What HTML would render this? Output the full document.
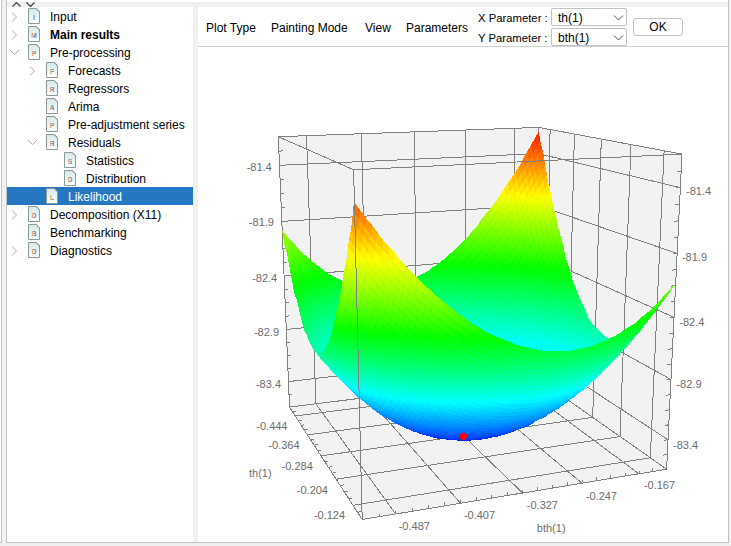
<!DOCTYPE html>
<html><head><meta charset="utf-8"><style>
*{margin:0;padding:0;box-sizing:border-box}
html,body{width:731px;height:546px;overflow:hidden;background:#f0f0f0;font-family:"Liberation Sans",sans-serif;font-size:12px;color:#000}
.abs{position:absolute}
#main{position:absolute;left:6px;top:0;width:723px;height:543px;background:#fff;border-left:1px solid #c4c4c4;border-right:1px solid #c4c4c4;border-bottom:1px solid #c4c4c4}
#lline{position:absolute;left:0;top:0;width:2px;height:543px;background:#fff;border-right:1px solid #c4c4c4;border-bottom:1px solid #c4c4c4}
#topband{position:absolute;left:7px;top:2px;width:721px;height:5px;background:#f0f0f0}
#sep{position:absolute;left:193px;top:7px;width:5px;height:535px;background:#f0f0f0}
.sel{position:absolute;left:7px;width:186px;height:18px;background:#2677c1}
.chev,.ico{position:absolute}
.t{position:absolute;height:18px;line-height:18px;padding-top:1px;white-space:nowrap;font-size:12px}
.b{font-weight:bold}
.w{color:#fff}
#tb{position:absolute;left:198px;top:7px;width:530px;height:40px;border-bottom:1px solid #d2d2d2;background:#fff}
.mi{position:absolute;top:19px;line-height:18px;white-space:nowrap}
.lab{position:absolute;white-space:nowrap;font-size:11.3px}
.combo{position:absolute;left:551px;width:76px;height:18px;border:1px solid #c2c2c2;border-radius:2px;background:#fff}
.combo span{position:absolute;left:6px;top:1px;line-height:17px}
.btn{position:absolute;left:633px;top:18px;width:50px;height:18px;border:1px solid #c2c2c2;border-radius:3px;background:#fff;text-align:center;line-height:16px}
</style></head><body>
<div id="lline"></div>
<div id="main"></div>
<div id="topband"></div>
<svg class="abs" style="left:0;top:0" width="40" height="8"><path d="M12.5 6.5L16.5 2.5L20.5 6.5M26.5 2.5L30.5 6.5L34.5 2.5" stroke="#404040" stroke-width="1.2" fill="none"/></svg>
<svg width="0" height="0" style="position:absolute"><defs>
<linearGradient id="dg" x1="0" y1="0" x2="0" y2="1"><stop offset="0" stop-color="#d6e8e8"/><stop offset="1" stop-color="#fcfefe"/></linearGradient>
<linearGradient id="lg" x1="0" y1="0" x2="1" y2="0"><stop offset="0" stop-color="#e8905a"/><stop offset=".42" stop-color="#e8905a"/><stop offset=".58" stop-color="#4f86c8"/><stop offset="1" stop-color="#5a70b8"/></linearGradient>
</defs></svg>
<svg class="chev" style="left:10px;top:11px" width="10" height="12"><path d="M2 1.5L6.5 6L2 10.5" stroke="#ababab" stroke-width="1" fill="none"/></svg>
<svg class="ico" style="left:28px;top:8px" width="12" height="16"><path d="M0.5 0.5H8.5L11.5 3.5V15.5H0.5Z" fill="url(#dg)" stroke="#8a9999"/><path d="M8 0.5L11.5 4" stroke="#8a9999" fill="none"/><text x="6" y="12" font-size="6.5" text-anchor="middle" fill="url(#lg)" font-weight="bold" font-family="Liberation Sans">I</text></svg>
<div class="t" style="left:50px;top:7px">Input</div>
<svg class="chev" style="left:10px;top:29px" width="10" height="12"><path d="M2 1.5L6.5 6L2 10.5" stroke="#ababab" stroke-width="1" fill="none"/></svg>
<svg class="ico" style="left:28px;top:26px" width="12" height="16"><path d="M0.5 0.5H8.5L11.5 3.5V15.5H0.5Z" fill="url(#dg)" stroke="#8a9999"/><path d="M8 0.5L11.5 4" stroke="#8a9999" fill="none"/><text x="6" y="12" font-size="6.5" text-anchor="middle" fill="url(#lg)" font-weight="bold" font-family="Liberation Sans">M</text></svg>
<div class="t b" style="left:50px;top:25px">Main results</div>
<svg class="chev" style="left:9px;top:48px" width="12" height="10"><path d="M1 2L5.5 6.5L10 2" stroke="#ababab" stroke-width="1" fill="none"/></svg>
<svg class="ico" style="left:28px;top:44px" width="12" height="16"><path d="M0.5 0.5H8.5L11.5 3.5V15.5H0.5Z" fill="url(#dg)" stroke="#8a9999"/><path d="M8 0.5L11.5 4" stroke="#8a9999" fill="none"/><text x="6" y="12" font-size="6.5" text-anchor="middle" fill="url(#lg)" font-weight="bold" font-family="Liberation Sans">P</text></svg>
<div class="t" style="left:50px;top:43px">Pre-processing</div>
<svg class="chev" style="left:28px;top:65px" width="10" height="12"><path d="M2 1.5L6.5 6L2 10.5" stroke="#ababab" stroke-width="1" fill="none"/></svg>
<svg class="ico" style="left:46px;top:62px" width="12" height="16"><path d="M0.5 0.5H8.5L11.5 3.5V15.5H0.5Z" fill="url(#dg)" stroke="#8a9999"/><path d="M8 0.5L11.5 4" stroke="#8a9999" fill="none"/><text x="6" y="12" font-size="6.5" text-anchor="middle" fill="url(#lg)" font-weight="bold" font-family="Liberation Sans">F</text></svg>
<div class="t" style="left:68px;top:61px">Forecasts</div>
<svg class="ico" style="left:46px;top:80px" width="12" height="16"><path d="M0.5 0.5H8.5L11.5 3.5V15.5H0.5Z" fill="url(#dg)" stroke="#8a9999"/><path d="M8 0.5L11.5 4" stroke="#8a9999" fill="none"/><text x="6" y="12" font-size="6.5" text-anchor="middle" fill="url(#lg)" font-weight="bold" font-family="Liberation Sans">R</text></svg>
<div class="t" style="left:68px;top:79px">Regressors</div>
<svg class="ico" style="left:46px;top:98px" width="12" height="16"><path d="M0.5 0.5H8.5L11.5 3.5V15.5H0.5Z" fill="url(#dg)" stroke="#8a9999"/><path d="M8 0.5L11.5 4" stroke="#8a9999" fill="none"/><text x="6" y="12" font-size="6.5" text-anchor="middle" fill="url(#lg)" font-weight="bold" font-family="Liberation Sans">A</text></svg>
<div class="t" style="left:68px;top:97px">Arima</div>
<svg class="ico" style="left:46px;top:116px" width="12" height="16"><path d="M0.5 0.5H8.5L11.5 3.5V15.5H0.5Z" fill="url(#dg)" stroke="#8a9999"/><path d="M8 0.5L11.5 4" stroke="#8a9999" fill="none"/><text x="6" y="12" font-size="6.5" text-anchor="middle" fill="url(#lg)" font-weight="bold" font-family="Liberation Sans">P</text></svg>
<div class="t" style="left:68px;top:115px">Pre-adjustment series</div>
<svg class="chev" style="left:27px;top:138px" width="12" height="10"><path d="M1 2L5.5 6.5L10 2" stroke="#ababab" stroke-width="1" fill="none"/></svg>
<svg class="ico" style="left:46px;top:134px" width="12" height="16"><path d="M0.5 0.5H8.5L11.5 3.5V15.5H0.5Z" fill="url(#dg)" stroke="#8a9999"/><path d="M8 0.5L11.5 4" stroke="#8a9999" fill="none"/><text x="6" y="12" font-size="6.5" text-anchor="middle" fill="url(#lg)" font-weight="bold" font-family="Liberation Sans">R</text></svg>
<div class="t" style="left:68px;top:133px">Residuals</div>
<svg class="ico" style="left:64px;top:152px" width="12" height="16"><path d="M0.5 0.5H8.5L11.5 3.5V15.5H0.5Z" fill="url(#dg)" stroke="#8a9999"/><path d="M8 0.5L11.5 4" stroke="#8a9999" fill="none"/><text x="6" y="12" font-size="6.5" text-anchor="middle" fill="url(#lg)" font-weight="bold" font-family="Liberation Sans">S</text></svg>
<div class="t" style="left:86px;top:151px">Statistics</div>
<svg class="ico" style="left:64px;top:170px" width="12" height="16"><path d="M0.5 0.5H8.5L11.5 3.5V15.5H0.5Z" fill="url(#dg)" stroke="#8a9999"/><path d="M8 0.5L11.5 4" stroke="#8a9999" fill="none"/><text x="6" y="12" font-size="6.5" text-anchor="middle" fill="url(#lg)" font-weight="bold" font-family="Liberation Sans">D</text></svg>
<div class="t" style="left:86px;top:169px">Distribution</div>
<div class="sel" style="top:187px"></div>
<svg class="ico" style="left:46px;top:188px" width="12" height="16"><path d="M0.5 0.5H8.5L11.5 3.5V15.5H0.5Z" fill="url(#dg)" stroke="#8a9999"/><path d="M8 0.5L11.5 4" stroke="#8a9999" fill="none"/><text x="6" y="12" font-size="6.5" text-anchor="middle" fill="url(#lg)" font-weight="bold" font-family="Liberation Sans">L</text></svg>
<div class="t w" style="left:68px;top:187px">Likelihood</div>
<svg class="chev" style="left:10px;top:209px" width="10" height="12"><path d="M2 1.5L6.5 6L2 10.5" stroke="#ababab" stroke-width="1" fill="none"/></svg>
<svg class="ico" style="left:28px;top:206px" width="12" height="16"><path d="M0.5 0.5H8.5L11.5 3.5V15.5H0.5Z" fill="url(#dg)" stroke="#8a9999"/><path d="M8 0.5L11.5 4" stroke="#8a9999" fill="none"/><text x="6" y="12" font-size="6.5" text-anchor="middle" fill="url(#lg)" font-weight="bold" font-family="Liberation Sans">D</text></svg>
<div class="t" style="left:50px;top:205px">Decomposition (X11)</div>
<svg class="ico" style="left:28px;top:224px" width="12" height="16"><path d="M0.5 0.5H8.5L11.5 3.5V15.5H0.5Z" fill="url(#dg)" stroke="#8a9999"/><path d="M8 0.5L11.5 4" stroke="#8a9999" fill="none"/><text x="6" y="12" font-size="6.5" text-anchor="middle" fill="url(#lg)" font-weight="bold" font-family="Liberation Sans">B</text></svg>
<div class="t" style="left:50px;top:223px">Benchmarking</div>
<svg class="chev" style="left:10px;top:245px" width="10" height="12"><path d="M2 1.5L6.5 6L2 10.5" stroke="#ababab" stroke-width="1" fill="none"/></svg>
<svg class="ico" style="left:28px;top:242px" width="12" height="16"><path d="M0.5 0.5H8.5L11.5 3.5V15.5H0.5Z" fill="url(#dg)" stroke="#8a9999"/><path d="M8 0.5L11.5 4" stroke="#8a9999" fill="none"/><text x="6" y="12" font-size="6.5" text-anchor="middle" fill="url(#lg)" font-weight="bold" font-family="Liberation Sans">D</text></svg>
<div class="t" style="left:50px;top:241px">Diagnostics</div>
<div id="sep"></div>
<div id="tb"></div>
<div class="mi" style="left:206px">Plot Type</div>
<div class="mi" style="left:271px">Painting Mode</div>
<div class="mi" style="left:365px">View</div>
<div class="mi" style="left:406px">Parameters</div>
<div class="lab" style="left:478px;top:9px;line-height:18px">X Parameter :</div>
<div class="lab" style="left:478px;top:29px;line-height:18px">Y Parameter :</div>
<div class="combo" style="top:8px"><span>th(1)</span><svg class="abs" style="left:61px;top:5px" width="12" height="8"><path d="M1 1.5L5.5 6L10 1.5" stroke="#555" stroke-width="1" fill="none"/></svg></div>
<div class="combo" style="top:28px"><span>bth(1)</span><svg class="abs" style="left:61px;top:5px" width="12" height="8"><path d="M1 1.5L5.5 6L10 1.5" stroke="#555" stroke-width="1" fill="none"/></svg></div>
<div class="btn">OK</div>
<svg class="abs" style="left:0;top:0" width="731" height="546" viewBox="0 0 731 546">
<g shape-rendering="crispEdges">
<path d="M289.5 407.1L534.6 376.6L538.8 127.4L278.3 136.7Z" fill="#f2f2f2"/>
<path d="M534.6 376.6L666.6 469.2L682 154.1L538.8 127.4Z" fill="#f2f2f2"/>
<path d="M289.5 407.1L534.6 376.6L666.6 469.2L362.2 519.5Z" fill="#f2f2f2"/>
</g>
<path d="M288.4 381.6L535 353M535 353L668 439.7M315.9 403.8L306.5 135.7M315.9 403.8L395.7 514M545.2 384.1L550.1 129.5M295.2 416L545.2 384.1M286.3 329.5L535.8 304.8M535.8 304.8L671 379.5M367.4 397.4L361.4 133.7M367.4 397.4L460.6 503.3M567.9 400L574.4 134M307.5 434.9L567.9 400M284.1 276.1L536.6 255.6M536.6 255.6L674 317.4M417.2 391.2L414.3 131.8M417.2 391.2L522.6 493M592.7 417.4L601.3 139M321.1 455.9L592.7 417.4M281.8 221.4L537.5 205.2M537.5 205.2L677.2 253.5M465.3 385.3L465.4 130M465.3 385.3L582 483.2M620 436.6L631 144.6M336.2 479.2L620 436.6M279.5 165.3L538.3 153.6M538.3 153.6L680.4 187.7M511.9 379.5L514.7 128.2M511.9 379.5L639 473.8M650.3 457.8L664.1 150.7M353 505.3L650.3 457.8M289.5 407.1L278.3 136.7M278.3 136.7L538.8 127.4M538.8 127.4L682 154.1M682 154.1L666.6 469.2M289.5 407.1L534.6 376.6M534.6 376.6L666.6 469.2M534.6 376.6L538.8 127.4M289.5 407.1L362.2 519.5M362.2 519.5L666.6 469.2M289 394.4L292.4 394M667.3 454.5L663.2 455.2M292.3 411.5L295.5 411.1M379.1 516.7L379 513.2M288.4 381.6L291.9 381.2M668 439.7L663.9 440.4M295.2 416L298.5 415.5M395.7 514L395.7 510.5M287.9 368.7L291.4 368.3M668.8 424.8L664.6 425.5M298.2 420.5L301.5 420.1M412.2 511.2L412.2 507.7M287.4 355.7L290.9 355.3M669.5 409.8L665.4 410.4M301.2 425.2L304.5 424.8M428.5 508.6L428.5 505.1M286.8 342.6L290.3 342.3M670.3 394.7L666.1 395.3M304.3 430L307.7 429.6M444.6 505.9L444.6 502.4M286.3 329.5L289.8 329.1M671 379.5L666.8 380M307.5 434.9L310.9 434.5M460.6 503.3L460.6 499.8M285.7 316.3L289.3 315.9M671.8 364.1L667.5 364.7M310.8 440L314.2 439.5M476.3 500.7L476.3 497.2M285.2 303L288.7 302.7M672.5 348.7L668.3 349.2M314.1 445.2L317.6 444.7M491.9 498.1L491.9 494.7M284.6 289.6L288.2 289.3M673.3 333.1L669 333.6M317.5 450.5L321.1 450M507.3 495.5L507.4 492.1M284.1 276.1L287.6 275.8M674 317.4L669.8 317.9M321.1 455.9L324.6 455.4M522.6 493L522.6 489.6M283.5 262.6L287.1 262.3M674.8 301.6L670.6 302.1M324.7 461.5L328.3 461M537.7 490.5L537.7 487.2M282.9 248.9L286.5 248.7M675.6 285.7L671.3 286.1M328.4 467.3L332.1 466.7M552.6 488.1L552.7 484.7M282.4 235.2L286 235M676.4 269.7L672.1 270.1M332.2 473.2L335.9 472.6M567.4 485.6L567.5 482.3M281.8 221.4L285.4 221.2M677.2 253.5L672.9 253.9M336.2 479.2L339.9 478.7M582 483.2L582.1 479.9M281.2 207.5L284.9 207.3M678 237.3L673.7 237.6M340.2 485.5L344 484.9M596.5 480.8L596.6 477.5M280.7 193.5L284.3 193.3M678.8 220.9L674.4 221.2M344.4 491.9L348.2 491.3M610.8 478.5L610.9 475.2M280.1 179.5L283.7 179.3M679.6 204.4L675.2 204.7M348.6 498.5L352.5 497.9M625 476.1L625.1 472.9M279.5 165.3L283.2 165.1M680.4 187.7L676 188M353 505.3L357 504.7M639 473.8L639.1 470.6M278.9 151.1L282.6 150.9M681.2 171L676.8 171.2M357.6 512.3L361.6 511.6M652.9 471.5L653 468.3" stroke="#808080" stroke-width="1" fill="none" shape-rendering="crispEdges"/>
<g shape-rendering="crispEdges"><path d="M535 138l4-7 1 9-4 7z" fill="#ff2c00"/><path d="M531 145l4-7 1 9-3 7z" fill="#ff4600"/><path d="M527 152l4-7 2 9-4 6z" fill="#ff6000"/><path d="M536 147l4-7 2 8-4 7z" fill="#ff4b00"/><path d="M523 159l4-7 2 8-4 7z" fill="#ff7900"/><path d="M533 154l3-7 2 8-4 7z" fill="#ff6500"/><path d="M520 165l3-6 2 8-4 6z" fill="#ff9100"/><path d="M529 160l4-6 1 8-4 7z" fill="#ff7f00"/><path d="M516 171l4-6 1 8-4 7z" fill="#ffa900"/><path d="M538 155l4-7 2 9-4 7z" fill="#ff6a00"/><path d="M512 177l4-6 1 9-4 6z" fill="#ffc000"/><path d="M525 167l4-7 1 9-3 6z" fill="#ff9700"/><path d="M508 183l4-6 1 9-3 6z" fill="#ffd600"/><path d="M534 162l4-7 2 9-4 7z" fill="#ff8400"/><path d="M521 173l4-6 2 8-4 7z" fill="#ffb000"/><path d="M504 189l4-6 2 9-4 5z" fill="#ffec00"/><path d="M517 180l4-7 2 9-4 6z" fill="#ffc700"/><path d="M530 169l4-7 2 9-4 6z" fill="#ff9d00"/><path d="M500 195l4-6 2 8-4 6z" fill="#fdff00"/><path d="M513 186l4-6 2 8-4 6z" fill="#ffde00"/><path d="M527 175l3-6 2 8-4 7z" fill="#ffb600"/><path d="M540 164l4-7 1 8-4 7z" fill="#ff8900"/><path d="M497 200l3-5 2 8-4 5z" fill="#e9ff00"/><path d="M510 192l3-6 2 8-4 6z" fill="#fff400"/><path d="M523 182l4-7 1 9-4 6z" fill="#ffce00"/><path d="M536 171l4-7 1 8-4 7z" fill="#ffa300"/><path d="M493 205l4-5 1 8-4 5z" fill="#d5ff00"/><path d="M506 197l4-5 1 8-4 5z" fill="#f5ff00"/><path d="M519 188l4-6 1 8-4 6z" fill="#ffe500"/><path d="M532 177l4-6 1 8-3 7z" fill="#ffbc00"/><path d="M489 210l4-5 1 8-3 5z" fill="#c2ff00"/><path d="M502 203l4-6 1 8-3 6z" fill="#e0ff00"/><path d="M515 194l4-6 1 8-3 6z" fill="#fffc00"/><path d="M528 184l4-7 2 9-4 6z" fill="#ffd400"/><path d="M541 172l4-7 2 9-4 6z" fill="#ffa700"/><path d="M485 215l4-5 2 8-4 5z" fill="#afff00"/><path d="M498 208l4-5 2 8-4 5z" fill="#cbff00"/><path d="M511 200l4-6 2 8-4 6z" fill="#ecff00"/><path d="M524 190l4-6 2 8-4 6z" fill="#ffeb00"/><path d="M481 220l4-5 2 8-4 5z" fill="#9dff00"/><path d="M537 179l4-7 2 8-4 7z" fill="#ffc000"/><path d="M494 213l4-5 2 8-4 5z" fill="#b8ff00"/><path d="M507 205l4-5 2 8-4 5z" fill="#d7ff00"/><path d="M478 225l3-5 2 8-4 5z" fill="#8cff00"/><path d="M520 196l4-6 2 8-4 6z" fill="#fbff00"/><path d="M534 186l3-7 2 8-4 7z" fill="#ffd900"/><path d="M491 218l3-5 2 8-4 5z" fill="#a5ff00"/><path d="M504 211l3-6 2 8-4 6z" fill="#c2ff00"/><path d="M474 229l4-4 1 8-4 4z" fill="#7bff00"/><path d="M517 202l3-6 2 8-4 6z" fill="#e5ff00"/><path d="M487 223l4-5 1 8-4 5z" fill="#92ff00"/><path d="M530 192l4-6 1 8-4 6z" fill="#fff100"/><path d="M543 180l4-6 1 8-3 7z" fill="#ffc400"/><path d="M500 216l4-5 1 8-4 5z" fill="#aeff00"/><path d="M470 234l4-5 1 8-4 5z" fill="#6bff00"/><path d="M513 208l4-6 1 8-4 6z" fill="#cfff00"/><path d="M483 228l4-5 1 8-4 5z" fill="#80ff00"/><path d="M526 198l4-6 1 8-4 6z" fill="#f5ff00"/><path d="M496 221l4-5 1 8-4 5z" fill="#9bff00"/><path d="M539 187l4-7 2 9-4 6z" fill="#ffde00"/><path d="M466 238l4-4 1 8-3 4z" fill="#5bff00"/><path d="M509 213l4-5 1 8-4 5z" fill="#baff00"/><path d="M479 233l4-5 1 8-3 5z" fill="#6fff00"/><path d="M522 204l4-6 1 8-3 6z" fill="#deff00"/><path d="M492 226l4-5 1 8-3 5z" fill="#88ff00"/><path d="M535 194l4-7 2 8-4 7z" fill="#fff600"/><path d="M462 242l4-4 2 8-4 4z" fill="#4cff00"/><path d="M505 219l4-6 1 8-3 6z" fill="#a6ff00"/><path d="M475 237l4-4 2 8-4 4z" fill="#5fff00"/><path d="M518 210l4-6 2 8-4 6z" fill="#c8ff00"/><path d="M488 231l4-5 2 8-4 5z" fill="#76ff00"/><path d="M458 246l4-4 2 8-4 3z" fill="#3eff00"/><path d="M531 200l4-6 2 8-4 6z" fill="#f0ff00"/><path d="M501 224l4-5 2 8-4 5z" fill="#92ff00"/><path d="M471 242l4-5 2 8-4 4z" fill="#4fff00"/><path d="M545 189l3-7 2 8-4 6z" fill="#ffe100"/><path d="M514 216l4-6 2 8-4 6z" fill="#b3ff00"/><path d="M484 236l4-5 2 8-4 5z" fill="#64ff00"/><path d="M455 249l3-3 2 7-4 4z" fill="#30ff00"/><path d="M527 206l4-6 2 8-4 6z" fill="#d9ff00"/><path d="M497 229l4-5 2 8-4 5z" fill="#7fff00"/><path d="M468 246l3-4 2 7-4 4z" fill="#40ff00"/><path d="M541 195l4-6 1 7-4 7z" fill="#fffa00"/><path d="M510 221l4-5 2 8-4 5z" fill="#9eff00"/><path d="M481 241l3-5 2 8-4 4z" fill="#53ff00"/><path d="M451 253l4-4 1 8-4 4z" fill="#24ff00"/><path d="M524 212l3-6 2 8-4 6z" fill="#c2ff00"/><path d="M494 234l3-5 2 8-4 5z" fill="#6cff00"/><path d="M464 250l4-4 1 7-4 4z" fill="#31ff00"/><path d="M537 202l4-7 1 8-4 7z" fill="#ebff00"/><path d="M507 227l3-6 2 8-4 6z" fill="#89ff00"/><path d="M477 245l4-4 1 7-4 5z" fill="#43ff00"/><path d="M447 256l4-3 1 8-4 3z" fill="#17ff00"/><path d="M490 239l4-5 1 8-4 5z" fill="#5aff00"/><path d="M520 218l4-6 1 8-4 6z" fill="#acff00"/><path d="M460 253l4-3 1 7-4 4z" fill="#23ff00"/><path d="M533 208l4-6 1 8-3 6z" fill="#d4ff00"/><path d="M503 232l4-5 1 8-4 5z" fill="#76ff00"/><path d="M473 249l4-4 1 8-4 4z" fill="#34ff00"/><path d="M546 196l4-6 2 8-4 6z" fill="#fffd00"/><path d="M486 244l4-5 1 8-4 5z" fill="#49ff00"/><path d="M516 224l4-6 1 8-4 6z" fill="#97ff00"/><path d="M443 260l4-4 1 8-3 3z" fill="#0cff00"/><path d="M456 257l4-4 1 8-3 4z" fill="#16ff00"/><path d="M499 237l4-5 1 8-3 5z" fill="#63ff00"/><path d="M469 253l4-4 1 8-3 4z" fill="#24ff00"/><path d="M529 214l4-6 2 8-4 6z" fill="#bcff00"/><path d="M482 248l4-4 1 8-3 4z" fill="#38ff00"/><path d="M542 203l4-7 2 8-4 7z" fill="#e8ff00"/><path d="M512 229l4-5 1 8-3 5z" fill="#82ff00"/><path d="M439 263l4-3 2 7-4 3z" fill="#01ff00"/><path d="M452 261l4-4 2 8-4 3z" fill="#09ff00"/><path d="M495 242l4-5 2 8-4 5z" fill="#50ff00"/><path d="M465 257l4-4 2 8-4 4z" fill="#16ff00"/><path d="M525 220l4-6 2 8-4 6z" fill="#a6ff00"/><path d="M478 253l4-5 2 8-4 4z" fill="#28ff00"/><path d="M508 235l4-6 2 8-4 6z" fill="#6eff00"/><path d="M538 210l4-7 2 8-4 6z" fill="#cfff00"/><path d="M435 266l4-3 2 7-4 3z" fill="#00ff0a"/><path d="M448 264l4-3 2 7-4 3z" fill="#00ff03"/><path d="M491 247l4-5 2 8-4 5z" fill="#3fff00"/><path d="M521 226l4-6 2 8-4 6z" fill="#90ff00"/><path d="M461 261l4-4 2 8-4 4z" fill="#08ff00"/><path d="M474 257l4-4 2 7-4 5z" fill="#19ff00"/><path d="M504 240l4-5 2 8-4 5z" fill="#5aff00"/><path d="M535 216l3-6 2 7-4 7z" fill="#b8ff00"/><path d="M487 252l4-5 2 8-4 4z" fill="#2eff00"/><path d="M445 267l3-3 2 7-4 3z" fill="#00ff0e"/><path d="M431 268l4-2 2 7-4 3z" fill="#00ff13"/><path d="M517 232l4-6 2 8-4 5z" fill="#7bff00"/><path d="M458 265l3-4 2 8-4 3z" fill="#00ff05"/><path d="M548 204l4-6 1 7-4 7z" fill="#e5ff00"/><path d="M471 261l3-4 2 8-4 4z" fill="#0aff00"/><path d="M501 245l3-5 2 8-4 5z" fill="#48ff00"/><path d="M531 222l4-6 1 8-4 6z" fill="#a1ff00"/><path d="M484 256l3-4 2 7-4 5z" fill="#1dff00"/><path d="M514 237l3-5 2 7-4 6z" fill="#67ff00"/><path d="M441 270l4-3 1 7-4 3z" fill="#00ff19"/><path d="M428 271l3-3 2 8-4 2z" fill="#00ff1c"/><path d="M454 268l4-3 1 7-4 4z" fill="#00ff11"/><path d="M544 211l4-7 1 8-3 7z" fill="#ccff00"/><path d="M497 250l4-5 1 8-4 5z" fill="#35ff00"/><path d="M467 265l4-4 1 8-4 3z" fill="#00ff04"/><path d="M527 228l4-6 1 8-4 6z" fill="#8bff00"/><path d="M480 260l4-4 1 8-4 4z" fill="#0dff00"/><path d="M510 243l4-6 1 8-4 5z" fill="#53ff00"/><path d="M437 273l4-3 1 7-4 3z" fill="#00ff23"/><path d="M450 271l4-3 1 8-4 3z" fill="#00ff1d"/><path d="M540 217l4-6 2 8-4 6z" fill="#b4ff00"/><path d="M493 255l4-5 1 8-4 4z" fill="#24ff00"/><path d="M424 273l4-2 1 7-4 2z" fill="#00ff25"/><path d="M463 269l4-4 1 7-4 4z" fill="#00ff12"/><path d="M523 234l4-6 1 8-3 5z" fill="#75ff00"/><path d="M476 265l4-5 1 8-4 4z" fill="#00ff02"/><path d="M506 248l4-5 1 7-4 5z" fill="#3fff00"/><path d="M489 259l4-4 1 7-3 5z" fill="#13ff00"/><path d="M536 224l4-7 2 8-4 6z" fill="#9dff00"/><path d="M446 274l4-3 1 8-4 3z" fill="#00ff28"/><path d="M433 276l4-3 1 7-4 3z" fill="#00ff2d"/><path d="M459 272l4-3 1 7-4 4z" fill="#00ff1f"/><path d="M519 239l4-5 2 7-4 6z" fill="#60ff00"/><path d="M420 275l4-2 1 7-4 3z" fill="#00ff2c"/><path d="M472 269l4-4 1 7-3 4z" fill="#00ff10"/><path d="M502 253l4-5 1 7-3 5z" fill="#2dff00"/><path d="M549 212l4-7 2 8-4 7z" fill="#caff00"/><path d="M485 264l4-5 2 8-4 4z" fill="#03ff00"/><path d="M532 230l4-6 2 7-4 6z" fill="#86ff00"/><path d="M442 277l4-3 1 8-3 3z" fill="#00ff33"/><path d="M515 245l4-6 2 8-4 5z" fill="#4cff00"/><path d="M455 276l4-4 1 8-3 3z" fill="#00ff2b"/><path d="M429 278l4-2 1 7-4 2z" fill="#00ff35"/><path d="M498 258l4-5 2 7-4 5z" fill="#1bff00"/><path d="M468 272l4-3 2 7-4 4z" fill="#00ff1e"/><path d="M416 277l4-2 1 8-4 2z" fill="#00ff33"/><path d="M546 219l3-7 2 8-4 6z" fill="#b2ff00"/><path d="M481 268l4-4 2 7-4 4z" fill="#00ff0d"/><path d="M528 236l4-6 2 7-4 6z" fill="#70ff00"/><path d="M511 250l4-5 2 7-4 6z" fill="#38ff00"/><path d="M451 279l4-3 2 7-4 3z" fill="#00ff37"/><path d="M438 280l4-3 2 8-4 2z" fill="#00ff3c"/><path d="M494 262l4-4 2 7-4 5z" fill="#0aff00"/><path d="M464 276l4-4 2 8-4 3z" fill="#00ff2c"/><path d="M425 280l4-2 1 7-3 3z" fill="#00ff3d"/><path d="M542 225l4-6 1 7-4 6z" fill="#9aff00"/><path d="M477 272l4-4 2 7-4 4z" fill="#00ff1c"/><path d="M525 241l3-5 2 7-4 6z" fill="#5bff00"/><path d="M412 279l4-2 1 8-4 1z" fill="#00ff39"/><path d="M507 255l4-5 2 8-4 5z" fill="#25ff00"/><path d="M491 267l3-5 2 8-4 4z" fill="#00ff07"/><path d="M447 282l4-3 2 7-4 3z" fill="#00ff41"/><path d="M434 283l4-3 2 7-4 3z" fill="#00ff46"/><path d="M460 280l4-4 2 7-4 4z" fill="#00ff38"/><path d="M538 231l4-6 1 7-4 7z" fill="#82ff00"/><path d="M521 247l4-6 1 8-4 5z" fill="#46ff00"/><path d="M421 283l4-3 2 8-4 2z" fill="#00ff45"/><path d="M474 276l3-4 2 7-4 4z" fill="#00ff2a"/><path d="M504 260l3-5 2 8-4 5z" fill="#13ff00"/><path d="M487 271l4-4 1 7-4 5z" fill="#00ff17"/><path d="M408 281l4-2 1 7-4 2z" fill="#00ff3f"/><path d="M551 220l4-7 2 7-4 7z" fill="#b0ff00"/><path d="M444 285l3-3 2 7-4 3z" fill="#00ff4c"/><path d="M534 237l4-6 1 8-3 6z" fill="#6cff00"/><path d="M457 283l3-3 2 7-4 3z" fill="#00ff44"/><path d="M517 252l4-5 1 7-4 6z" fill="#32ff00"/><path d="M430 285l4-2 2 7-4 2z" fill="#00ff4e"/><path d="M470 280l4-4 1 7-4 4z" fill="#00ff38"/><path d="M500 265l4-5 1 8-4 4z" fill="#01ff00"/><path d="M417 285l4-2 2 7-4 2z" fill="#00ff4b"/><path d="M483 275l4-4 1 8-4 4z" fill="#00ff27"/><path d="M547 226l4-6 2 7-4 6z" fill="#98ff00"/><path d="M530 243l4-6 2 8-4 6z" fill="#56ff00"/><path d="M513 258l4-6 1 8-3 5z" fill="#1eff00"/><path d="M453 286l4-3 1 7-4 3z" fill="#00ff50"/><path d="M440 287l4-2 1 7-4 3z" fill="#00ff55"/><path d="M404 283l4-2 1 7-4 1z" fill="#00ff43"/><path d="M496 270l4-5 1 7-4 5z" fill="#00ff10"/><path d="M466 283l4-3 1 7-4 4z" fill="#00ff45"/><path d="M427 288l3-3 2 7-4 3z" fill="#00ff56"/><path d="M479 279l4-4 1 8-4 4z" fill="#00ff35"/><path d="M543 232l4-6 2 7-4 7z" fill="#80ff00"/><path d="M526 249l4-6 2 8-4 5z" fill="#41ff00"/><path d="M413 286l4-1 2 7-4 1z" fill="#00ff51"/><path d="M509 263l4-5 2 7-4 5z" fill="#0bff00"/><path d="M492 274l4-4 1 7-3 5z" fill="#00ff21"/><path d="M449 289l4-3 1 7-4 3z" fill="#00ff5a"/><path d="M462 287l4-4 1 8-4 3z" fill="#00ff51"/><path d="M436 290l4-3 1 8-4 2z" fill="#00ff5e"/><path d="M475 283l4-4 1 8-3 4z" fill="#00ff43"/><path d="M400 284l4-1 1 6-3 2z" fill="#00ff47"/><path d="M539 239l4-7 2 8-4 6z" fill="#69ff00"/><path d="M423 290l4-2 1 7-4 2z" fill="#00ff5d"/><path d="M522 254l4-5 2 7-4 6z" fill="#2cff00"/><path d="M505 268l4-5 2 7-4 5z" fill="#00ff07"/><path d="M488 279l4-5 2 8-4 4z" fill="#00ff30"/><path d="M409 288l4-2 2 7-4 2z" fill="#00ff57"/><path d="M445 292l4-3 1 7-4 3z" fill="#00ff64"/><path d="M458 290l4-3 1 7-3 3z" fill="#00ff5d"/><path d="M553 227l4-7 1 7-4 7z" fill="#97ff00"/><path d="M432 292l4-2 1 7-4 3z" fill="#00ff66"/><path d="M471 287l4-4 2 8-4 3z" fill="#00ff51"/><path d="M536 245l3-6 2 7-4 6z" fill="#52ff00"/><path d="M518 260l4-6 2 8-4 5z" fill="#18ff00"/><path d="M501 272l4-4 2 7-4 5z" fill="#00ff18"/><path d="M484 283l4-4 2 7-4 4z" fill="#00ff40"/><path d="M419 292l4-2 1 7-4 2z" fill="#00ff63"/><path d="M396 285l4-1 2 7-4 1z" fill="#00ff4b"/><path d="M454 293l4-3 2 7-4 3z" fill="#00ff68"/><path d="M515 265l3-5 2 7-4 5z" fill="#05ff00"/><path d="M532 251l4-6 1 7-4 6z" fill="#3dff00"/><path d="M549 233l4-6 1 7-3 7z" fill="#7eff00"/><path d="M441 295l4-3 1 7-3 3z" fill="#00ff6e"/><path d="M467 291l4-4 2 7-4 4z" fill="#00ff5e"/><path d="M497 277l4-5 2 8-4 4z" fill="#00ff29"/><path d="M405 289l4-1 2 7-4 1z" fill="#00ff5b"/><path d="M428 295l4-3 1 8-4 2z" fill="#00ff6e"/><path d="M480 287l4-4 2 7-4 4z" fill="#00ff4e"/><path d="M511 270l4-5 1 7-4 5z" fill="#00ff0e"/><path d="M528 256l4-5 1 7-4 5z" fill="#28ff00"/><path d="M415 293l4-1 1 7-4 1z" fill="#00ff69"/><path d="M545 240l4-7 2 8-4 6z" fill="#67ff00"/><path d="M494 282l3-5 2 7-4 5z" fill="#00ff39"/><path d="M450 296l4-3 2 7-4 3z" fill="#00ff73"/><path d="M463 294l4-3 2 7-4 3z" fill="#00ff6a"/><path d="M392 286l4-1 2 7-4 1z" fill="#00ff4d"/><path d="M437 297l4-2 2 7-4 2z" fill="#00ff76"/><path d="M477 291l3-4 2 7-4 4z" fill="#00ff5c"/><path d="M424 297l4-2 1 7-4 2z" fill="#00ff75"/><path d="M507 275l4-5 1 7-4 5z" fill="#00ff20"/><path d="M524 262l4-6 1 7-3 6z" fill="#13ff00"/><path d="M402 291l3-2 2 7-4 2z" fill="#00ff5f"/><path d="M541 246l4-6 2 7-4 6z" fill="#50ff00"/><path d="M490 286l4-4 1 7-4 4z" fill="#00ff49"/><path d="M460 297l3-3 2 7-4 3z" fill="#00ff75"/><path d="M446 299l4-3 2 7-4 3z" fill="#00ff7c"/><path d="M411 295l4-2 1 7-4 2z" fill="#00ff6e"/><path d="M473 294l4-3 1 7-4 3z" fill="#00ff69"/><path d="M433 300l4-3 2 7-4 3z" fill="#00ff7e"/><path d="M520 267l4-5 2 7-4 5z" fill="#00ff00"/><path d="M503 280l4-5 1 7-4 5z" fill="#00ff31"/><path d="M537 252l4-6 2 7-4 6z" fill="#3aff00"/><path d="M554 234l4-7 2 7-4 7z" fill="#7eff00"/><path d="M388 287l4-1 2 7-4 0z" fill="#00ff4f"/><path d="M486 290l4-4 1 7-4 4z" fill="#00ff58"/><path d="M420 299l4-2 1 7-4 2z" fill="#00ff7b"/><path d="M398 292l4-1 1 7-4 1z" fill="#00ff62"/><path d="M456 300l4-3 1 7-4 3z" fill="#00ff80"/><path d="M443 302l3-3 2 7-4 3z" fill="#00ff86"/><path d="M469 298l4-4 1 7-4 4z" fill="#00ff76"/><path d="M516 272l4-5 2 7-4 5z" fill="#00ff14"/><path d="M499 284l4-4 1 7-3 4z" fill="#00ff42"/><path d="M533 258l4-6 2 7-4 6z" fill="#24ff00"/><path d="M551 241l3-7 2 7-4 7z" fill="#66ff00"/><path d="M429 302l4-2 2 7-4 2z" fill="#00ff86"/><path d="M482 294l4-4 1 7-3 4z" fill="#00ff66"/><path d="M407 296l4-1 1 7-4 1z" fill="#00ff72"/><path d="M512 277l4-5 2 7-4 5z" fill="#00ff26"/><path d="M495 289l4-5 2 7-4 5z" fill="#00ff52"/><path d="M416 300l4-1 1 7-3 1z" fill="#00ff80"/><path d="M452 303l4-3 1 7-4 3z" fill="#00ff8b"/><path d="M529 263l4-5 2 7-4 5z" fill="#0fff00"/><path d="M465 301l4-3 1 7-4 3z" fill="#00ff82"/><path d="M384 287l4 0 2 6-4 1z" fill="#00ff50"/><path d="M547 247l4-6 1 7-4 6z" fill="#4eff00"/><path d="M439 304l4-2 1 7-4 2z" fill="#00ff8e"/><path d="M478 298l4-4 2 7-4 4z" fill="#00ff74"/><path d="M394 293l4-1 1 7-4 0z" fill="#00ff64"/><path d="M425 304l4-2 2 7-4 2z" fill="#00ff8c"/><path d="M508 282l4-5 2 7-4 5z" fill="#00ff38"/><path d="M526 269l3-6 2 7-4 6z" fill="#00ff05"/><path d="M491 293l4-4 2 7-4 4z" fill="#00ff61"/><path d="M403 298l4-2 1 7-4 1z" fill="#00ff76"/><path d="M543 253l4-6 1 7-4 6z" fill="#38ff00"/><path d="M461 304l4-3 1 7-3 3z" fill="#00ff8d"/><path d="M448 306l4-3 1 7-4 3z" fill="#00ff94"/><path d="M474 301l4-3 2 7-4 3z" fill="#00ff81"/><path d="M412 302l4-2 2 7-4 2z" fill="#00ff85"/><path d="M435 307l4-3 1 7-4 2z" fill="#00ff96"/><path d="M504 287l4-5 2 7-4 5z" fill="#00ff49"/><path d="M522 274l4-5 1 7-4 5z" fill="#00ff18"/><path d="M380 288l4-1 2 7-4 0z" fill="#00ff50"/><path d="M487 297l4-4 2 7-4 4z" fill="#00ff70"/><path d="M539 259l4-6 1 7-3 6z" fill="#22ff00"/><path d="M421 306l4-2 2 7-4 1z" fill="#00ff92"/><path d="M390 293l4 0 1 6-4 1z" fill="#00ff66"/><path d="M556 241l4-7 2 7-4 7z" fill="#66ff00"/><path d="M457 307l4-3 2 7-4 3z" fill="#00ff98"/><path d="M444 309l4-3 1 7-4 3z" fill="#00ff9d"/><path d="M470 305l4-4 2 7-4 4z" fill="#00ff8d"/><path d="M399 299l4-1 1 6-4 1z" fill="#00ff79"/><path d="M501 291l3-4 2 7-4 4z" fill="#00ff59"/><path d="M518 279l4-5 1 7-4 5z" fill="#00ff2b"/><path d="M535 265l4-6 2 7-4 6z" fill="#0cff00"/><path d="M484 301l3-4 2 7-4 4z" fill="#00ff7e"/><path d="M431 309l4-2 1 6-4 2z" fill="#00ff9d"/><path d="M408 303l4-1 2 7-4 1z" fill="#00ff89"/><path d="M552 248l4-7 2 7-4 6z" fill="#4eff00"/><path d="M514 284l4-5 1 7-4 5z" fill="#00ff3e"/><path d="M453 310l4-3 2 7-4 3z" fill="#00ffa2"/><path d="M497 296l4-5 1 7-4 5z" fill="#00ff69"/><path d="M466 308l4-3 2 7-4 3z" fill="#00ff99"/><path d="M418 307l3-1 2 6-4 2z" fill="#00ff97"/><path d="M531 270l4-5 2 7-4 5z" fill="#00ff08"/><path d="M376 288l4 0 2 6-4 0z" fill="#00ff50"/><path d="M440 311l4-2 1 7-4 2z" fill="#00ffa5"/><path d="M480 305l4-4 1 7-4 4z" fill="#00ff8b"/><path d="M386 294l4-1 1 7-4 1z" fill="#00ff67"/><path d="M548 254l4-6 2 6-4 7z" fill="#37ff00"/><path d="M395 299l4 0 1 6-4 1z" fill="#00ff7b"/><path d="M427 311l4-2 1 6-4 2z" fill="#00ffa3"/><path d="M510 289l4-5 1 7-3 5z" fill="#00ff4f"/><path d="M493 300l4-4 1 7-4 4z" fill="#00ff78"/><path d="M527 276l4-6 2 7-4 6z" fill="#00ff1c"/><path d="M463 311l3-3 2 7-4 3z" fill="#00ffa4"/><path d="M404 304l4-1 2 7-4 1z" fill="#00ff8d"/><path d="M449 313l4-3 2 7-4 3z" fill="#00ffab"/><path d="M476 308l4-3 1 7-4 3z" fill="#00ff98"/><path d="M544 260l4-6 2 7-4 6z" fill="#20ff00"/><path d="M436 313l4-2 1 7-3 2z" fill="#00ffad"/><path d="M414 309l4-2 1 7-4 1z" fill="#00ff9c"/><path d="M506 294l4-5 2 7-4 5z" fill="#00ff60"/><path d="M489 304l4-4 1 7-3 4z" fill="#00ff87"/><path d="M523 281l4-5 2 7-4 5z" fill="#00ff30"/><path d="M372 288l4 0 2 6-5 0z" fill="#00ff4f"/><path d="M423 312l4-1 1 6-4 2z" fill="#00ffa9"/><path d="M541 266l3-6 2 7-4 6z" fill="#0bff00"/><path d="M382 294l4 0 1 7-4 0z" fill="#00ff67"/><path d="M459 314l4-3 1 7-4 3z" fill="#00ffaf"/><path d="M472 312l4-4 1 7-4 4z" fill="#00ffa4"/><path d="M445 316l4-3 2 7-4 2z" fill="#00ffb4"/><path d="M391 300l4-1 1 7-4 1z" fill="#00ff7c"/><path d="M502 298l4-4 2 7-4 4z" fill="#00ff70"/><path d="M558 248l4-7 2 7-4 7z" fill="#4fff00"/><path d="M519 286l4-5 2 7-4 5z" fill="#00ff42"/><path d="M400 305l4-1 2 7-4 1z" fill="#00ff8f"/><path d="M485 308l4-4 2 7-4 4z" fill="#00ff95"/><path d="M432 315l4-2 2 7-4 2z" fill="#00ffb4"/><path d="M537 272l4-6 1 7-4 5z" fill="#00ff0b"/><path d="M410 310l4-1 1 6-4 2z" fill="#00ffa0"/><path d="M455 317l4-3 1 7-4 3z" fill="#00ffb8"/><path d="M468 315l4-3 1 7-4 3z" fill="#00ffb0"/><path d="M498 303l4-5 2 7-4 4z" fill="#00ff80"/><path d="M554 254l4-6 2 7-4 6z" fill="#37ff00"/><path d="M515 291l4-5 2 7-4 5z" fill="#00ff54"/><path d="M419 314l4-2 1 7-4 2z" fill="#00ffae"/><path d="M441 318l4-2 2 6-4 3z" fill="#00ffbc"/><path d="M481 312l4-4 2 7-4 3z" fill="#00ffa2"/><path d="M533 277l4-5 1 6-4 6z" fill="#00ff1f"/><path d="M368 287l4 1 1 6-4 0z" fill="#00ff4c"/><path d="M378 294l4 0 1 7-4 0z" fill="#00ff66"/><path d="M387 301l4-1 1 7-4 0z" fill="#00ff7d"/><path d="M428 317l4-2 2 7-4 2z" fill="#00ffba"/><path d="M550 261l4-7 2 7-4 6z" fill="#20ff00"/><path d="M512 296l3-5 2 7-4 5z" fill="#00ff66"/><path d="M494 307l4-4 2 6-4 4z" fill="#00ff8f"/><path d="M396 306l4-1 2 7-4 1z" fill="#00ff91"/><path d="M464 318l4-3 1 7-3 3z" fill="#00ffbb"/><path d="M451 320l4-3 1 7-4 3z" fill="#00ffc2"/><path d="M529 283l4-6 1 7-4 5z" fill="#00ff33"/><path d="M406 311l4-1 1 7-4 1z" fill="#00ffa3"/><path d="M477 315l4-3 2 6-4 4z" fill="#00ffaf"/><path d="M438 320l3-2 2 7-4 2z" fill="#00ffc3"/><path d="M546 267l4-6 2 6-4 6z" fill="#0aff00"/><path d="M415 315l4-1 1 7-4 1z" fill="#00ffb2"/><path d="M508 301l4-5 1 7-4 4z" fill="#00ff77"/><path d="M491 311l3-4 2 6-4 4z" fill="#00ff9d"/><path d="M525 288l4-5 1 6-3 5z" fill="#00ff46"/><path d="M460 321l4-3 2 7-4 3z" fill="#00ffc5"/><path d="M424 319l4-2 2 7-4 2z" fill="#00ffbf"/><path d="M473 319l4-4 2 7-4 3z" fill="#00ffbb"/><path d="M447 322l4-2 1 7-4 2z" fill="#00ffca"/><path d="M542 273l4-6 2 6-4 6z" fill="#00ff0c"/><path d="M373 294l5 0 1 7-4 0z" fill="#00ff64"/><path d="M364 287l4 0 1 7-4-1z" fill="#00ff49"/><path d="M383 301l4 0 1 6-4 0z" fill="#00ff7d"/><path d="M504 305l4-4 1 6-4 5z" fill="#00ff87"/><path d="M392 307l4-1 2 7-4 0z" fill="#00ff92"/><path d="M487 315l4-4 1 6-4 4z" fill="#00ffab"/><path d="M521 293l4-5 2 6-4 6z" fill="#00ff59"/><path d="M434 322l4-2 1 7-4 2z" fill="#00ffca"/><path d="M402 312l4-1 1 7-4 1z" fill="#00ffa5"/><path d="M560 255l4-7 1 7-4 6z" fill="#39ff00"/><path d="M538 278l4-5 2 6-4 6z" fill="#00ff21"/><path d="M411 317l4-2 1 7-4 1z" fill="#00ffb6"/><path d="M456 324l4-3 2 7-4 3z" fill="#00ffcf"/><path d="M469 322l4-3 2 6-4 3z" fill="#00ffc6"/><path d="M500 309l4-4 1 7-4 4z" fill="#00ff96"/><path d="M517 298l4-5 2 7-4 4z" fill="#00ff6b"/><path d="M443 325l4-3 1 7-4 2z" fill="#00ffd2"/><path d="M420 321l4-2 2 7-4 1z" fill="#00ffc4"/><path d="M483 318l4-3 1 6-4 4z" fill="#00ffb8"/><path d="M556 261l4-6 1 6-4 6z" fill="#21ff00"/><path d="M534 284l4-6 2 7-4 5z" fill="#00ff35"/><path d="M430 324l4-2 1 7-4 2z" fill="#00ffd0"/><path d="M496 313l4-4 1 7-3 4z" fill="#00ffa5"/><path d="M513 303l4-5 2 6-4 5z" fill="#00ff7c"/><path d="M379 301l4 0 1 6-4 0z" fill="#00ff7c"/><path d="M369 294l4 0 2 7-4-1z" fill="#00ff62"/><path d="M388 307l4 0 2 6-4 1z" fill="#00ff93"/><path d="M466 325l3-3 2 6-4 3z" fill="#00ffd1"/><path d="M360 286l4 1 1 6-4 0z" fill="#00ff46"/><path d="M452 327l4-3 2 7-4 2z" fill="#00ffd7"/><path d="M398 313l4-1 1 7-4 0z" fill="#00ffa7"/><path d="M552 267l4-6 1 6-4 7z" fill="#0aff00"/><path d="M479 322l4-4 1 7-4 3z" fill="#00ffc4"/><path d="M530 289l4-5 2 6-4 6z" fill="#00ff49"/><path d="M407 318l4-1 1 6-4 1z" fill="#00ffb9"/><path d="M439 327l4-2 1 6-4 2z" fill="#00ffd9"/><path d="M416 322l4-1 2 6-4 2z" fill="#00ffc8"/><path d="M509 307l4-4 2 6-4 5z" fill="#00ff8c"/><path d="M492 317l4-4 2 7-4 4z" fill="#00ffb3"/><path d="M548 273l4-6 1 7-3 6z" fill="#00ff0c"/><path d="M527 294l3-5 2 7-4 5z" fill="#00ff5c"/><path d="M462 328l4-3 1 6-4 3z" fill="#00ffdb"/><path d="M426 326l4-2 1 7-4 1z" fill="#00ffd5"/><path d="M475 325l4-3 1 6-4 4z" fill="#00ffd0"/><path d="M448 329l4-2 2 6-4 3z" fill="#00ffe0"/><path d="M505 312l4-5 2 7-4 4z" fill="#00ff9c"/><path d="M544 279l4-6 2 7-4 5z" fill="#00ff21"/><path d="M488 321l4-4 2 7-4 4z" fill="#00ffc0"/><path d="M384 307l4 0 2 7-4 0z" fill="#00ff92"/><path d="M435 329l4-2 1 6-4 2z" fill="#00ffdf"/><path d="M375 301l4 0 1 6-4 0z" fill="#00ff7a"/><path d="M523 300l4-6 1 7-4 5z" fill="#00ff6e"/><path d="M394 313l4 0 1 6-4 1z" fill="#00ffa8"/><path d="M365 293l4 1 2 6-4 0z" fill="#00ff5f"/><path d="M403 319l4-1 1 6-4 1z" fill="#00ffbb"/><path d="M356 285l4 1 1 7-4-1z" fill="#00ff41"/><path d="M458 331l4-3 1 6-4 3z" fill="#00ffe4"/><path d="M412 323l4-1 2 7-4 1z" fill="#00ffcc"/><path d="M471 328l4-3 1 7-4 3z" fill="#00ffdb"/><path d="M561 261l4-6 2 6-4 6z" fill="#24ff00"/><path d="M540 285l4-6 2 6-4 6z" fill="#00ff36"/><path d="M501 316l4-4 2 6-4 4z" fill="#00ffab"/><path d="M444 331l4-2 2 7-4 2z" fill="#00ffe7"/><path d="M519 304l4-4 1 6-4 5z" fill="#00ff80"/><path d="M484 325l4-4 2 7-4 3z" fill="#00ffcd"/><path d="M422 327l4-1 1 6-4 2z" fill="#00ffda"/><path d="M557 267l4-6 2 6-4 7z" fill="#0cff00"/><path d="M536 290l4-5 2 6-4 6z" fill="#00ff4a"/><path d="M431 331l4-2 1 6-3 2z" fill="#00ffe5"/><path d="M498 320l3-4 2 6-4 4z" fill="#00ffba"/><path d="M467 331l4-3 1 7-3 3z" fill="#00ffe6"/><path d="M515 309l4-5 1 7-4 4z" fill="#00ff91"/><path d="M454 333l4-2 1 6-4 3z" fill="#00ffed"/><path d="M480 328l4-3 2 6-4 4z" fill="#00ffda"/><path d="M390 314l4-1 1 7-4 0z" fill="#00ffa8"/><path d="M380 307l4 0 2 7-5 0z" fill="#00ff91"/><path d="M399 319l4 0 1 6-4 1z" fill="#00ffbc"/><path d="M371 300l4 1 1 6-4 0z" fill="#00ff77"/><path d="M553 274l4-7 2 7-4 6z" fill="#00ff0a"/><path d="M440 333l4-2 2 7-4 2z" fill="#00ffee"/><path d="M532 296l4-6 2 7-4 5z" fill="#00ff5e"/><path d="M408 324l4-1 2 7-4 1z" fill="#00ffce"/><path d="M361 293l4 0 2 7-4-1z" fill="#00ff5b"/><path d="M494 324l4-4 1 6-4 4z" fill="#00ffc8"/><path d="M352 284l4 1 1 7-4-2z" fill="#00ff3c"/><path d="M418 329l4-2 1 7-4 1z" fill="#00ffde"/><path d="M511 314l4-5 1 6-3 5z" fill="#00ffa1"/><path d="M463 334l4-3 2 7-4 3z" fill="#00fff0"/><path d="M550 280l3-6 2 6-4 6z" fill="#00ff21"/><path d="M476 332l4-4 2 7-4 3z" fill="#00ffe5"/><path d="M528 301l4-5 2 6-4 5z" fill="#00ff71"/><path d="M427 332l4-1 2 6-4 2z" fill="#00ffea"/><path d="M450 336l4-3 1 7-4 2z" fill="#00fff5"/><path d="M507 318l4-4 2 6-4 4z" fill="#00ffb1"/><path d="M490 328l4-4 1 6-4 4z" fill="#00ffd5"/><path d="M436 335l4-2 2 7-4 2z" fill="#00fff4"/><path d="M546 285l4-5 1 6-4 6z" fill="#00ff36"/><path d="M524 306l4-5 2 6-4 5z" fill="#00ff83"/><path d="M395 320l4-1 1 7-4 0z" fill="#00ffbd"/><path d="M386 314l4 0 1 6-4 0z" fill="#00ffa7"/><path d="M404 325l4-1 2 7-4 1z" fill="#00ffd0"/><path d="M376 307l4 0 1 7-4 0z" fill="#00ff8f"/><path d="M459 337l4-3 2 7-4 2z" fill="#00fff9"/><path d="M472 335l4-3 2 6-4 3z" fill="#00fff0"/><path d="M414 330l4-1 1 6-4 1z" fill="#00ffe1"/><path d="M367 300l4 0 1 7-4-1z" fill="#00ff74"/><path d="M503 322l4-4 2 6-4 4z" fill="#00ffc0"/><path d="M446 338l4-2 1 6-4 2z" fill="#00fffc"/><path d="M357 292l4 1 2 6-5-1z" fill="#00ff56"/><path d="M486 331l4-3 1 6-4 3z" fill="#00ffe2"/><path d="M542 291l4-6 1 7-4 5z" fill="#00ff4b"/><path d="M423 334l4-2 2 7-4 1z" fill="#00ffef"/><path d="M520 311l4-5 2 6-4 5z" fill="#00ff94"/><path d="M563 267l4-6 2 6-4 6z" fill="#0fff00"/><path d="M348 283l4 1 1 6-4-1z" fill="#00ff35"/><path d="M433 337l3-2 2 7-4 1z" fill="#00fffa"/><path d="M499 326l4-4 2 6-4 4z" fill="#00ffce"/><path d="M469 338l3-3 2 6-4 3z" fill="#00fffa"/><path d="M538 297l4-6 1 6-4 6z" fill="#00ff5f"/><path d="M455 340l4-3 2 6-4 3z" fill="#00fdff"/><path d="M559 274l4-7 2 6-4 7z" fill="#00ff08"/><path d="M516 315l4-4 2 6-4 5z" fill="#00ffa5"/><path d="M482 335l4-4 1 6-4 4z" fill="#00ffee"/><path d="M391 320l4 0 1 6-4 1z" fill="#00ffbd"/><path d="M400 326l4-1 2 7-4 0z" fill="#00ffd1"/><path d="M442 340l4-2 1 6-4 2z" fill="#00fbff"/><path d="M381 314l5 0 1 6-4 0z" fill="#00ffa6"/><path d="M410 331l4-1 1 6-4 1z" fill="#00ffe3"/><path d="M534 302l4-5 1 6-4 5z" fill="#00ff72"/><path d="M372 307l4 0 1 7-4-1z" fill="#00ff8c"/><path d="M555 280l4-6 2 6-4 6z" fill="#00ff1e"/><path d="M495 330l4-4 2 6-4 4z" fill="#00ffdc"/><path d="M419 335l4-1 2 6-4 1z" fill="#00fff2"/><path d="M513 320l3-5 2 7-4 4z" fill="#00ffb5"/><path d="M363 299l4 1 1 6-4-1z" fill="#00ff70"/><path d="M465 341l4-3 1 6-4 3z" fill="#00faff"/><path d="M478 338l4-3 1 6-4 3z" fill="#00fff9"/><path d="M451 342l4-2 2 6-4 2z" fill="#00f5ff"/><path d="M429 339l4-2 1 6-4 2z" fill="#00ffff"/><path d="M353 290l4 2 1 6-4-1z" fill="#00ff50"/><path d="M530 307l4-5 1 6-3 5z" fill="#00ff84"/><path d="M551 286l4-6 2 6-4 6z" fill="#00ff34"/><path d="M509 324l4-4 1 6-4 4z" fill="#00ffc5"/><path d="M491 334l4-4 2 6-4 4z" fill="#00ffe9"/><path d="M343 281l5 2 1 6-4-2z" fill="#00ff2e"/><path d="M438 342l4-2 1 6-4 2z" fill="#00f5ff"/><path d="M526 312l4-5 2 6-4 5z" fill="#00ff96"/><path d="M547 292l4-6 2 6-4 6z" fill="#00ff4a"/><path d="M461 343l4-2 1 6-4 2z" fill="#00f1ff"/><path d="M396 326l4 0 2 6-4 1z" fill="#00ffd2"/><path d="M474 341l4-3 1 6-3 3z" fill="#00faff"/><path d="M406 332l4-1 1 6-4 1z" fill="#00ffe5"/><path d="M387 320l4 0 1 7-4 0z" fill="#00ffbc"/><path d="M415 336l4-1 2 6-4 2z" fill="#00fff5"/><path d="M377 314l4 0 2 6-4 0z" fill="#00ffa4"/><path d="M505 328l4-4 1 6-4 4z" fill="#00ffd3"/><path d="M447 344l4-2 2 6-4 2z" fill="#00eeff"/><path d="M487 337l4-3 2 6-4 3z" fill="#00fff5"/><path d="M425 340l4-1 1 6-4 1z" fill="#00fbff"/><path d="M368 306l4 1 1 6-4-1z" fill="#00ff89"/><path d="M522 317l4-5 2 6-4 5z" fill="#00ffa8"/><path d="M543 297l4-5 2 6-4 5z" fill="#00ff5e"/><path d="M358 298l5 1 1 6-4-1z" fill="#00ff6b"/><path d="M565 273l4-6 2 6-4 6z" fill="#00ff04"/><path d="M434 343l4-1 1 6-4 2z" fill="#00f0ff"/><path d="M470 344l4-3 2 6-4 3z" fill="#00f0ff"/><path d="M501 332l4-4 1 6-4 4z" fill="#00ffe2"/><path d="M457 346l4-3 1 6-4 3z" fill="#00e9ff"/><path d="M349 289l4 1 1 7-4-2z" fill="#00ff4a"/><path d="M539 303l4-6 2 6-4 6z" fill="#00ff72"/><path d="M483 341l4-4 2 6-4 4z" fill="#00fdff"/><path d="M518 322l4-5 2 6-4 4z" fill="#00ffb8"/><path d="M443 346l4-2 2 6-4 2z" fill="#00e7ff"/><path d="M561 280l4-7 2 6-4 7z" fill="#00ff1b"/><path d="M402 332l4 0 1 6-4 1z" fill="#00ffe6"/><path d="M339 279l4 2 2 6-5-2z" fill="#00ff26"/><path d="M392 327l4-1 2 7-4 0z" fill="#00ffd2"/><path d="M411 337l4-1 2 7-4 0z" fill="#00fff7"/><path d="M383 320l4 0 1 7-4 0z" fill="#00ffbb"/><path d="M497 336l4-4 1 6-4 4z" fill="#00ffef"/><path d="M535 308l4-5 2 6-4 5z" fill="#00ff85"/><path d="M421 341l4-1 1 6-4 2z" fill="#00f8ff"/><path d="M514 326l4-4 2 5-4 5z" fill="#00ffc8"/><path d="M466 347l4-3 2 6-4 3z" fill="#00e7ff"/><path d="M373 313l4 1 2 6-4-1z" fill="#00ffa1"/><path d="M557 286l4-6 2 6-4 6z" fill="#00ff32"/><path d="M479 344l4-3 2 6-4 3z" fill="#00f2ff"/><path d="M453 348l4-2 1 6-4 2z" fill="#00e1ff"/><path d="M430 345l4-2 1 7-4 1z" fill="#00ebff"/><path d="M364 305l4 1 1 6-4 0z" fill="#00ff84"/><path d="M532 313l3-5 2 6-4 5z" fill="#00ff97"/><path d="M493 340l4-4 1 6-4 4z" fill="#00fffc"/><path d="M510 330l4-4 2 6-4 4z" fill="#00ffd8"/><path d="M553 292l4-6 2 6-4 6z" fill="#00ff47"/><path d="M439 348l4-2 2 6-4 2z" fill="#00e2ff"/><path d="M354 297l4 1 2 6-5-1z" fill="#00ff65"/><path d="M462 349l4-2 2 6-4 2z" fill="#00deff"/><path d="M476 347l3-3 2 6-4 3z" fill="#00e7ff"/><path d="M528 318l4-5 1 6-4 5z" fill="#00ffa9"/><path d="M407 338l4-1 2 6-5 1z" fill="#00fff9"/><path d="M345 287l4 2 1 6-4-1z" fill="#00ff42"/><path d="M398 333l4-1 1 7-4 0z" fill="#00ffe6"/><path d="M549 298l4-6 2 6-4 5z" fill="#00ff5c"/><path d="M417 343l4-2 1 7-4 1z" fill="#00f5ff"/><path d="M388 327l4 0 2 6-4 0z" fill="#00ffd1"/><path d="M449 350l4-2 1 6-4 2z" fill="#00dbff"/><path d="M506 334l4-4 2 6-4 4z" fill="#00ffe6"/><path d="M489 343l4-3 1 6-3 3z" fill="#00f6ff"/><path d="M379 320l4 0 1 7-4-1z" fill="#00ffb8"/><path d="M426 346l4-1 1 6-4 2z" fill="#00e7ff"/><path d="M335 277l4 2 1 6-4-2z" fill="#00ff1d"/><path d="M524 323l4-5 1 6-4 5z" fill="#00ffba"/><path d="M369 312l4 1 2 6-5 0z" fill="#00ff9d"/><path d="M545 303l4-5 2 5-4 6z" fill="#00ff71"/><path d="M435 350l4-2 2 6-4 2z" fill="#00ddff"/><path d="M472 350l4-3 1 6-4 3z" fill="#00ddff"/><path d="M458 352l4-3 2 6-4 3z" fill="#00d6ff"/><path d="M502 338l4-4 2 6-4 4z" fill="#00fff4"/><path d="M360 304l4 1 1 7-4-1z" fill="#00ff7f"/><path d="M567 279l4-6 1 5-4 7z" fill="#00ff17"/><path d="M485 347l4-4 2 6-4 4z" fill="#00eaff"/><path d="M520 327l4-4 1 6-4 4z" fill="#00ffcb"/><path d="M541 309l4-6 2 6-4 5z" fill="#00ff84"/><path d="M445 352l4-2 1 6-4 2z" fill="#00d4ff"/><path d="M350 295l4 2 1 6-4-2z" fill="#00ff5e"/><path d="M403 339l4-1 1 6-4 1z" fill="#00fffa"/><path d="M413 343l4 0 1 6-4 1z" fill="#00f3ff"/><path d="M394 333l4 0 1 6-4 0z" fill="#00ffe6"/><path d="M563 286l4-7 1 6-4 6z" fill="#00ff2e"/><path d="M498 342l4-4 2 6-4 4z" fill="#00fcff"/><path d="M422 348l4-2 1 7-4 1z" fill="#00e4ff"/><path d="M384 327l4 0 2 6-5 0z" fill="#00ffcf"/><path d="M468 353l4-3 1 6-4 3z" fill="#00d4ff"/><path d="M537 314l4-5 2 5-4 6z" fill="#00ff97"/><path d="M516 332l4-5 1 6-4 5z" fill="#00ffdb"/><path d="M340 285l5 2 1 7-4-2z" fill="#00ff3a"/><path d="M481 350l4-3 2 6-4 3z" fill="#00dfff"/><path d="M454 354l4-2 2 6-4 2z" fill="#00cfff"/><path d="M431 351l4-1 2 6-4 1z" fill="#00d8ff"/><path d="M375 319l4 1 1 6-4 0z" fill="#00ffb5"/><path d="M559 292l4-6 1 5-4 6z" fill="#00ff44"/><path d="M533 319l4-5 2 6-4 5z" fill="#00ffaa"/><path d="M494 346l4-4 2 6-4 4z" fill="#00f0ff"/><path d="M365 312l4 0 1 7-4-1z" fill="#00ff99"/><path d="M331 275l4 2 1 6-4-2z" fill="#00ff13"/><path d="M441 354l4-2 1 6-4 2z" fill="#00cfff"/><path d="M512 336l4-4 1 6-3 4z" fill="#00ffea"/><path d="M555 298l4-6 1 5-3 6z" fill="#00ff59"/><path d="M464 355l4-2 1 6-4 2z" fill="#00ccff"/><path d="M477 353l4-3 2 6-4 3z" fill="#00d5ff"/><path d="M355 303l5 1 1 7-4-2z" fill="#00ff79"/><path d="M408 344l5-1 1 7-4 0z" fill="#00f1ff"/><path d="M529 324l4-5 2 6-4 4z" fill="#00ffbb"/><path d="M399 339l4 0 1 6-4 0z" fill="#00fffa"/><path d="M450 356l4-2 2 6-4 2z" fill="#00c8ff"/><path d="M418 349l4-1 1 6-4 1z" fill="#00e2ff"/><path d="M390 333l4 0 1 6-4 0z" fill="#00ffe5"/><path d="M508 340l4-4 2 6-4 4z" fill="#00fff8"/><path d="M491 349l3-3 2 6-4 3z" fill="#00e4ff"/><path d="M551 303l4-5 2 5-4 6z" fill="#00ff6e"/><path d="M427 353l4-2 2 6-4 2z" fill="#00d4ff"/><path d="M346 294l4 1 1 6-4-1z" fill="#00ff57"/><path d="M380 326l4 1 1 6-4-1z" fill="#00ffcc"/><path d="M525 329l4-5 2 5-4 5z" fill="#00ffcc"/><path d="M437 356l4-2 1 6-4 2z" fill="#00caff"/><path d="M473 356l4-3 2 6-4 3z" fill="#00cbff"/><path d="M460 358l4-3 1 6-4 3z" fill="#00c4ff"/><path d="M370 319l5 0 1 7-4-1z" fill="#00ffb1"/><path d="M547 309l4-6 2 6-4 5z" fill="#00ff82"/><path d="M504 344l4-4 2 6-4 4z" fill="#00f8ff"/><path d="M336 283l4 2 2 7-5-3z" fill="#00ff31"/><path d="M487 353l4-4 1 6-4 3z" fill="#00d8ff"/><path d="M446 358l4-2 2 6-4 2z" fill="#00c2ff"/><path d="M521 333l4-4 2 5-4 5z" fill="#00ffdc"/><path d="M361 311l4 1 1 6-4-1z" fill="#00ff93"/><path d="M568 285l4-7 2 6-4 6z" fill="#00ff28"/><path d="M543 314l4-5 2 5-4 6z" fill="#00ff96"/><path d="M326 272l5 3 1 6-4-3z" fill="#00ff08"/><path d="M404 345l4-1 2 6-4 1z" fill="#00f1ff"/><path d="M414 350l4-1 1 6-4 1z" fill="#00e0ff"/><path d="M395 339l4 0 1 6-4 0z" fill="#00fff9"/><path d="M423 354l4-1 2 6-4 1z" fill="#00d1ff"/><path d="M500 348l4-4 2 6-4 4z" fill="#00ebff"/><path d="M469 359l4-3 2 6-4 2z" fill="#00c2ff"/><path d="M351 301l4 2 2 6-4-1z" fill="#00ff72"/><path d="M385 333l5 0 1 6-4 0z" fill="#00ffe3"/><path d="M564 291l4-6 2 5-4 6z" fill="#00ff3f"/><path d="M517 338l4-5 2 6-4 4z" fill="#00ffec"/><path d="M456 360l4-2 1 6-4 2z" fill="#00bdff"/><path d="M483 356l4-3 1 5-4 3z" fill="#00ceff"/><path d="M433 357l4-1 1 6-4 1z" fill="#00c6ff"/><path d="M539 320l4-6 2 6-4 5z" fill="#00ffa9"/><path d="M376 326l4 0 1 6-4 0z" fill="#00ffc9"/><path d="M342 292l4 2 1 6-4-2z" fill="#00ff4e"/><path d="M442 360l4-2 2 6-4 2z" fill="#00bdff"/><path d="M560 297l4-6 2 5-4 7z" fill="#00ff55"/><path d="M496 352l4-4 2 6-4 3z" fill="#00deff"/><path d="M535 325l4-5 2 5-4 5z" fill="#00ffbb"/><path d="M514 342l3-4 2 5-4 4z" fill="#00fffb"/><path d="M366 318l4 1 2 6-4-1z" fill="#00ffac"/><path d="M465 361l4-2 2 5-4 3z" fill="#00baff"/><path d="M479 359l4-3 1 5-4 3z" fill="#00c4ff"/><path d="M557 303l3-6 2 6-4 5z" fill="#00ff6a"/><path d="M332 281l4 2 1 6-4-2z" fill="#00ff27"/><path d="M410 350l4 0 1 6-4 0z" fill="#00dfff"/><path d="M452 362l4-2 1 6-4 2z" fill="#00b6ff"/><path d="M400 345l4 0 2 6-4 0z" fill="#00f1ff"/><path d="M419 355l4-1 2 6-4 1z" fill="#00cfff"/><path d="M531 329l4-4 2 5-4 5z" fill="#00ffcc"/><path d="M357 309l4 2 1 6-4-2z" fill="#00ff8d"/><path d="M492 355l4-3 2 5-4 3z" fill="#00d3ff"/><path d="M510 346l4-4 1 5-4 4z" fill="#00f5ff"/><path d="M391 339l4 0 1 6-4 0z" fill="#00fff8"/><path d="M429 359l4-2 1 6-4 1z" fill="#00c2ff"/><path d="M553 309l4-6 1 5-4 6z" fill="#00ff7f"/><path d="M322 269l4 3 2 6-5-3z" fill="#04ff00"/><path d="M381 332l4 1 2 6-4-1z" fill="#00ffe0"/><path d="M438 362l4-2 2 6-4 1z" fill="#00b8ff"/><path d="M527 334l4-5 2 6-4 4z" fill="#00ffdd"/><path d="M475 362l4-3 1 5-4 3z" fill="#00baff"/><path d="M347 300l4 1 2 7-5-2z" fill="#00ff6a"/><path d="M461 364l4-3 2 6-4 2z" fill="#00b2ff"/><path d="M506 350l4-4 1 5-4 4z" fill="#00e7ff"/><path d="M372 325l4 1 1 6-4-1z" fill="#00ffc5"/><path d="M549 314l4-5 1 5-4 6z" fill="#00ff93"/><path d="M488 358l4-3 2 5-4 4z" fill="#00c7ff"/><path d="M448 364l4-2 1 6-4 2z" fill="#00b0ff"/><path d="M523 339l4-5 2 5-4 5z" fill="#00ffed"/><path d="M337 289l5 3 1 6-4-3z" fill="#00ff45"/><path d="M415 356l4-1 2 6-4 0z" fill="#00cdff"/><path d="M406 351l4-1 1 6-4 1z" fill="#00deff"/><path d="M362 317l4 1 2 6-5-1z" fill="#00ffa7"/><path d="M545 320l4-6 1 6-4 5z" fill="#00ffa6"/><path d="M425 360l4-1 1 5-4 1z" fill="#00bfff"/><path d="M570 290l4-6 2 5-4 6z" fill="#00ff39"/><path d="M396 345l4 0 2 6-4 0z" fill="#00f2ff"/><path d="M502 354l4-4 1 5-4 4z" fill="#00daff"/><path d="M471 364l4-2 1 5-4 3z" fill="#00b1ff"/><path d="M457 366l4-2 2 5-4 2z" fill="#00abff"/><path d="M434 363l4-1 2 5-4 2z" fill="#00b4ff"/><path d="M484 361l4-3 2 6-4 3z" fill="#00bdff"/><path d="M387 339l4 0 1 6-4 0z" fill="#00fff6"/><path d="M519 343l4-4 2 5-4 4z" fill="#00fffc"/><path d="M328 278l4 3 1 6-4-3z" fill="#00ff1c"/><path d="M353 308l4 1 1 6-4-1z" fill="#00ff86"/><path d="M541 325l4-5 1 5-4 5z" fill="#00ffb9"/><path d="M566 296l4-6 2 5-4 7z" fill="#00ff4f"/><path d="M377 332l4 0 2 6-4 0z" fill="#00ffdc"/><path d="M444 366l4-2 1 6-4 1z" fill="#00abff"/><path d="M498 357l4-3 1 5-4 3z" fill="#00ceff"/><path d="M515 347l4-4 2 5-4 4z" fill="#00f3ff"/><path d="M318 266l4 3 1 6-4-3z" fill="#10ff00"/><path d="M537 330l4-5 1 5-4 5z" fill="#00ffcb"/><path d="M562 303l4-7 2 6-4 6z" fill="#00ff65"/><path d="M467 367l4-3 1 6-4 2z" fill="#00a9ff"/><path d="M343 298l4 2 1 6-4-2z" fill="#00ff62"/><path d="M480 364l4-3 2 6-4 3z" fill="#00b3ff"/><path d="M368 324l4 1 1 6-4-1z" fill="#00ffc0"/><path d="M411 356l4 0 2 5-4 1z" fill="#00ccff"/><path d="M453 368l4-2 2 5-4 2z" fill="#00a5ff"/><path d="M421 361l4-1 1 5-4 1z" fill="#00bdff"/><path d="M402 351l4 0 1 6-4 0z" fill="#00deff"/><path d="M558 308l4-5 2 5-4 6z" fill="#00ff7b"/><path d="M430 364l4-1 2 6-4 1z" fill="#00b0ff"/><path d="M533 335l4-5 1 5-4 5z" fill="#00ffdc"/><path d="M494 360l4-3 1 5-4 4z" fill="#00c2ff"/><path d="M392 345l4 0 2 6-4 0z" fill="#00f3ff"/><path d="M511 351l4-4 2 5-4 4z" fill="#00e5ff"/><path d="M358 315l4 2 1 6-4-2z" fill="#00ffa0"/><path d="M333 287l4 2 2 6-5-2z" fill="#00ff3b"/><path d="M440 367l4-1 1 5-4 2z" fill="#00a7ff"/><path d="M383 338l4 1 1 6-4-1z" fill="#00fff3"/><path d="M554 314l4-6 2 6-4 5z" fill="#00ff8f"/><path d="M476 367l4-3 2 6-4 2z" fill="#00aaff"/><path d="M463 369l4-2 1 5-4 3z" fill="#00a2ff"/><path d="M529 339l4-4 1 5-4 5z" fill="#00ffed"/><path d="M507 355l4-4 2 5-4 4z" fill="#00d7ff"/><path d="M348 306l5 2 1 6-4-2z" fill="#00ff7e"/><path d="M490 364l4-4 1 6-4 3z" fill="#00b7ff"/><path d="M323 275l5 3 1 6-4-3z" fill="#00ff10"/><path d="M373 331l4 1 2 6-5-1z" fill="#00ffd8"/><path d="M449 370l4-2 2 5-4 2z" fill="#009fff"/><path d="M550 320l4-6 2 5-4 6z" fill="#00ffa3"/><path d="M525 344l4-5 1 6-4 4z" fill="#00fffd"/><path d="M417 361l4 0 1 5-4 1z" fill="#00bcff"/><path d="M407 357l4-1 2 6-4 0z" fill="#00ccff"/><path d="M426 365l4-1 2 6-4 1z" fill="#00aeff"/><path d="M398 351l4 0 1 6-4 0z" fill="#00e0ff"/><path d="M363 323l5 1 1 6-4-1z" fill="#00ffba"/><path d="M472 370l4-3 2 5-4 3z" fill="#00a1ff"/><path d="M503 359l4-4 2 5-4 4z" fill="#00cbff"/><path d="M546 325l4-5 2 5-4 5z" fill="#00ffb6"/><path d="M339 295l4 3 1 6-4-2z" fill="#00ff58"/><path d="M314 263l4 3 1 6-4-3z" fill="#1eff00"/><path d="M459 371l4-2 1 6-4 2z" fill="#009bff"/><path d="M436 369l4-2 1 6-4 1z" fill="#00a3ff"/><path d="M486 367l4-3 1 5-4 3z" fill="#00adff"/><path d="M572 295l4-6 2 5-4 6z" fill="#00ff48"/><path d="M388 345l4 0 2 6-5 0z" fill="#00f6ff"/><path d="M521 348l4-4 1 5-3 4z" fill="#00f2ff"/><path d="M542 330l4-5 2 5-4 5z" fill="#00ffc9"/><path d="M445 371l4-1 2 5-4 2z" fill="#009aff"/><path d="M354 314l4 1 1 6-4-1z" fill="#00ff99"/><path d="M379 338l4 0 1 6-4 0z" fill="#00ffef"/><path d="M568 302l4-7 2 5-4 7z" fill="#00ff5f"/><path d="M329 284l4 3 1 6-4-3z" fill="#00ff2f"/><path d="M499 362l4-3 2 5-4 3z" fill="#00beff"/><path d="M517 352l4-4 2 5-4 5z" fill="#00e3ff"/><path d="M468 372l4-2 2 5-4 2z" fill="#0099ff"/><path d="M538 335l4-5 2 5-4 5z" fill="#00ffda"/><path d="M482 370l4-3 1 5-4 3z" fill="#00a3ff"/><path d="M564 308l4-6 2 5-4 6z" fill="#00ff75"/><path d="M369 330l4 1 1 6-4-1z" fill="#00ffd3"/><path d="M413 362l4-1 1 6-4 1z" fill="#00bbff"/><path d="M455 373l4-2 1 6-4 2z" fill="#0095ff"/><path d="M422 366l4-1 2 6-4 1z" fill="#00acff"/><path d="M344 304l4 2 2 6-5-2z" fill="#00ff75"/><path d="M403 357l4 0 2 5-5 1z" fill="#00cdff"/><path d="M432 370l4-1 1 5-4 1z" fill="#00a0ff"/><path d="M319 272l4 3 2 6-5-3z" fill="#00ff03"/><path d="M495 366l4-4 2 5-4 4z" fill="#00b3ff"/><path d="M394 351l4 0 1 6-4 0z" fill="#00e1ff"/><path d="M513 356l4-4 2 6-4 3z" fill="#00d6ff"/><path d="M534 340l4-5 2 5-4 5z" fill="#00ffeb"/><path d="M560 314l4-6 2 5-4 5z" fill="#00ff8a"/><path d="M441 373l4-2 2 6-4 1z" fill="#0096ff"/><path d="M359 321l4 2 2 6-4-2z" fill="#00ffb4"/><path d="M384 344l4 1 1 6-4-1z" fill="#00f9ff"/><path d="M464 375l4-3 2 5-4 3z" fill="#0092ff"/><path d="M478 372l4-2 1 5-4 3z" fill="#009aff"/><path d="M334 293l5 2 1 7-4-3z" fill="#00ff4e"/><path d="M309 259l5 4 1 6-5-4z" fill="#2dff00"/><path d="M556 319l4-5 2 4-4 6z" fill="#00ff9e"/><path d="M530 345l4-5 2 5-4 4z" fill="#00fffc"/><path d="M509 360l4-4 2 5-4 4z" fill="#00c8ff"/><path d="M491 369l4-3 2 5-4 3z" fill="#00a8ff"/><path d="M451 375l4-2 1 6-4 1z" fill="#008fff"/><path d="M374 337l5 1 1 6-4-1z" fill="#00ffea"/><path d="M350 312l4 2 1 6-4-2z" fill="#00ff91"/><path d="M552 325l4-6 2 5-4 6z" fill="#00ffb2"/><path d="M418 367l4-1 2 6-4 1z" fill="#00abff"/><path d="M409 362l4 0 1 6-4 0z" fill="#00bbff"/><path d="M526 349l4-4 2 4-4 5z" fill="#00f2ff"/><path d="M428 371l4-1 1 5-4 1z" fill="#009dff"/><path d="M325 281l4 3 1 6-4-3z" fill="#00ff23"/><path d="M399 357l4 0 1 6-4 0z" fill="#00ceff"/><path d="M474 375l4-3 1 6-4 2z" fill="#0092ff"/><path d="M505 364l4-4 2 5-4 4z" fill="#00bcff"/><path d="M365 329l4 1 1 6-4-1z" fill="#00ffcd"/><path d="M460 377l4-2 2 5-4 2z" fill="#008bff"/><path d="M437 374l4-1 2 5-4 2z" fill="#0092ff"/><path d="M548 330l4-5 2 5-4 5z" fill="#00ffc5"/><path d="M487 372l4-3 2 5-4 3z" fill="#009eff"/><path d="M389 351l5 0 1 6-4-1z" fill="#00e4ff"/><path d="M340 302l4 2 1 6-4-2z" fill="#00ff6b"/><path d="M523 353l3-4 2 5-4 4z" fill="#00e3ff"/><path d="M574 300l4-6 2 5-4 6z" fill="#00ff57"/><path d="M447 377l4-2 1 5-4 2z" fill="#008bff"/><path d="M315 269l4 3 1 6-4-3z" fill="#0bff00"/><path d="M544 335l4-5 2 5-4 5z" fill="#00ffd7"/><path d="M380 344l4 0 1 6-4 0z" fill="#00fdff"/><path d="M355 320l4 1 2 6-5-1z" fill="#00ffac"/><path d="M501 367l4-3 2 5-4 3z" fill="#00b0ff"/><path d="M470 377l4-2 1 5-4 3z" fill="#008aff"/><path d="M570 307l4-7 2 5-4 6z" fill="#00ff6d"/><path d="M519 358l4-5 1 5-4 4z" fill="#00d5ff"/><path d="M483 375l4-3 2 5-4 3z" fill="#0095ff"/><path d="M330 290l4 3 2 6-5-3z" fill="#00ff42"/><path d="M414 368l4-1 2 6-5 0z" fill="#00aaff"/><path d="M456 379l4-2 2 5-4 2z" fill="#0086ff"/><path d="M424 372l4-1 1 5-4 1z" fill="#009bff"/><path d="M540 340l4-5 2 5-4 5z" fill="#00ffe9"/><path d="M404 363l5-1 1 6-4 0z" fill="#00bbff"/><path d="M370 336l4 1 2 6-4-1z" fill="#00ffe5"/><path d="M305 255l4 4 1 6-4-4z" fill="#3dff00"/><path d="M433 375l4-1 2 6-4 1z" fill="#0090ff"/><path d="M566 313l4-6 2 4-4 6z" fill="#00ff83"/><path d="M345 310l5 2 1 6-4-2z" fill="#00ff88"/><path d="M395 357l4 0 1 6-4-1z" fill="#00d0ff"/><path d="M497 371l4-4 2 5-4 4z" fill="#00a5ff"/><path d="M515 361l4-3 1 4-4 4z" fill="#00c7ff"/><path d="M536 345l4-5 2 5-4 5z" fill="#00fffa"/><path d="M443 378l4-1 1 5-4 1z" fill="#0087ff"/><path d="M562 318l4-5 2 4-4 6z" fill="#00ff98"/><path d="M320 278l5 3 1 6-5-3z" fill="#00ff16"/><path d="M385 350l4 1 2 5-4 0z" fill="#00e7ff"/><path d="M361 327l4 2 1 6-4-2z" fill="#00ffc6"/><path d="M466 380l4-3 1 6-4 2z" fill="#0083ff"/><path d="M479 378l4-3 2 5-4 2z" fill="#008cff"/><path d="M532 349l4-4 2 5-4 4z" fill="#00f4ff"/><path d="M452 380l4-1 2 5-4 1z" fill="#0080ff"/><path d="M336 299l4 3 1 6-4-3z" fill="#00ff61"/><path d="M558 324l4-6 2 5-4 6z" fill="#00ffac"/><path d="M493 374l4-3 2 5-4 3z" fill="#009aff"/><path d="M511 365l4-4 1 5-4 4z" fill="#00baff"/><path d="M376 343l4 1 1 6-4-1z" fill="#00fffc"/><path d="M420 373l4-1 1 5-4 1z" fill="#009aff"/><path d="M410 368l4 0 1 5-4 0z" fill="#00aaff"/><path d="M310 265l5 4 1 6-5-4z" fill="#1aff00"/><path d="M351 318l4 2 1 6-4-2z" fill="#00ffa4"/><path d="M429 376l4-1 2 6-4 1z" fill="#008dff"/><path d="M554 330l4-6 2 5-4 5z" fill="#00ffc0"/><path d="M400 363l4 0 2 5-4 0z" fill="#00bdff"/><path d="M528 354l4-5 2 5-4 5z" fill="#00e5ff"/><path d="M475 380l4-2 2 4-4 3z" fill="#0084ff"/><path d="M439 380l4-2 1 5-4 2z" fill="#0083ff"/><path d="M462 382l4-2 1 5-4 2z" fill="#007dff"/><path d="M507 369l4-4 1 5-4 4z" fill="#00aeff"/><path d="M366 335l4 1 2 6-5-1z" fill="#00ffdf"/><path d="M326 287l4 3 1 6-4-3z" fill="#00ff36"/><path d="M391 356l4 1 1 5-4 0z" fill="#00d3ff"/><path d="M489 377l4-3 2 5-4 3z" fill="#0090ff"/><path d="M550 335l4-5 2 4-4 5z" fill="#00ffd2"/><path d="M300 251l5 4 1 6-5-5z" fill="#4eff00"/><path d="M524 358l4-4 2 5-4 4z" fill="#00d6ff"/><path d="M448 382l4-2 2 5-4 2z" fill="#007cff"/><path d="M341 308l4 2 2 6-5-3z" fill="#00ff7e"/><path d="M381 350l4 0 2 6-5-1z" fill="#00ebff"/><path d="M576 305l4-6 2 4-4 6z" fill="#00ff64"/><path d="M503 372l4-3 1 5-4 3z" fill="#00a2ff"/><path d="M546 340l4-5 2 4-4 5z" fill="#00ffe5"/><path d="M356 326l5 1 1 6-4-1z" fill="#00ffbe"/><path d="M471 383l4-3 2 5-4 2z" fill="#007cff"/><path d="M316 275l4 3 1 6-4-4z" fill="#00ff08"/><path d="M415 373l5 0 1 5-4 0z" fill="#009aff"/><path d="M485 380l4-3 2 5-4 3z" fill="#0087ff"/><path d="M520 362l4-4 2 5-4 4z" fill="#00c8ff"/><path d="M425 377l4-1 2 6-5 1z" fill="#008cff"/><path d="M458 384l4-2 1 5-4 2z" fill="#0077ff"/><path d="M572 311l4-6 2 4-4 7z" fill="#00ff7b"/><path d="M406 368l4 0 1 5-4 1z" fill="#00abff"/><path d="M372 342l4 1 1 6-4-1z" fill="#00fff7"/><path d="M435 381l4-1 1 5-4 1z" fill="#0080ff"/><path d="M542 345l4-5 2 4-4 5z" fill="#00fff6"/><path d="M331 296l5 3 1 6-5-3z" fill="#00ff55"/><path d="M396 362l4 1 2 5-4 0z" fill="#00bfff"/><path d="M499 376l4-4 1 5-4 3z" fill="#0097ff"/><path d="M568 317l4-6 2 5-4 6z" fill="#00ff90"/><path d="M347 316l4 2 1 6-4-2z" fill="#00ff9b"/><path d="M444 383l4-1 2 5-4 1z" fill="#0078ff"/><path d="M516 366l4-4 2 5-4 4z" fill="#00baff"/><path d="M306 261l4 4 1 6-4-4z" fill="#2aff00"/><path d="M538 350l4-5 2 4-4 5z" fill="#00f7ff"/><path d="M387 356l4 0 1 6-4-1z" fill="#00d6ff"/><path d="M467 385l4-2 2 4-4 3z" fill="#0075ff"/><path d="M481 382l4-2 2 5-4 2z" fill="#007eff"/><path d="M362 333l4 2 1 6-4-2z" fill="#00ffd8"/><path d="M564 323l4-6 2 5-4 5z" fill="#00ffa5"/><path d="M321 284l5 3 1 6-4-3z" fill="#00ff29"/><path d="M454 385l4-1 1 5-4 1z" fill="#0072ff"/><path d="M495 379l4-3 1 4-4 3z" fill="#008dff"/><path d="M534 354l4-4 2 4-4 5z" fill="#00e7ff"/><path d="M512 370l4-4 2 5-4 3z" fill="#00adff"/><path d="M377 349l4 1 1 5-4-1z" fill="#00f0ff"/><path d="M296 246l4 5 1 5-4-4z" fill="#5fff00"/><path d="M560 329l4-6 2 4-4 6z" fill="#00ffb9"/><path d="M421 378l4-1 1 6-4 0z" fill="#008bff"/><path d="M337 305l4 3 1 5-4-2z" fill="#00ff73"/><path d="M411 373l4 0 2 5-4 1z" fill="#009aff"/><path d="M431 382l4-1 1 5-4 1z" fill="#007eff"/><path d="M402 368l4 0 1 6-4-1z" fill="#00adff"/><path d="M352 324l4 2 2 6-5-2z" fill="#00ffb6"/><path d="M477 385l4-3 2 5-4 3z" fill="#0076ff"/><path d="M440 385l4-2 2 5-4 2z" fill="#0075ff"/><path d="M530 359l4-5 2 5-4 4z" fill="#00d8ff"/><path d="M463 387l4-2 2 5-4 2z" fill="#006fff"/><path d="M556 334l4-5 2 4-4 5z" fill="#00ffcc"/><path d="M311 271l5 4 1 5-4-3z" fill="#07ff00"/><path d="M367 341l5 1 1 6-4-2z" fill="#00fff1"/><path d="M508 374l4-4 2 4-4 4z" fill="#00a1ff"/><path d="M392 362l4 0 2 6-5 0z" fill="#00c2ff"/><path d="M491 382l4-3 1 4-4 3z" fill="#0083ff"/><path d="M450 387l4-2 1 5-4 2z" fill="#006eff"/><path d="M327 293l4 3 1 6-4-3z" fill="#00ff49"/><path d="M552 339l4-5 2 4-4 6z" fill="#00ffdf"/><path d="M526 363l4-4 2 4-4 4z" fill="#00c9ff"/><path d="M382 355l5 1 1 5-4 0z" fill="#00daff"/><path d="M342 313l5 3 1 6-4-3z" fill="#00ff91"/><path d="M504 377l4-3 2 4-4 3z" fill="#0095ff"/><path d="M358 332l4 1 1 6-4-2z" fill="#00ffd0"/><path d="M473 387l4-2 2 5-4 2z" fill="#006fff"/><path d="M301 256l5 5 1 6-4-5z" fill="#3bff00"/><path d="M548 344l4-5 2 5-5 5z" fill="#00fff1"/><path d="M578 309l4-6 2 4-4 7z" fill="#00ff71"/><path d="M417 378l4 0 1 5-4 1z" fill="#008bff"/><path d="M426 383l5-1 1 5-4 1z" fill="#007dff"/><path d="M459 389l4-2 2 5-4 1z" fill="#0069ff"/><path d="M487 385l4-3 1 4-4 3z" fill="#007aff"/><path d="M407 374l4-1 2 6-4 0z" fill="#009bff"/><path d="M522 367l4-4 2 4-4 4z" fill="#00bbff"/><path d="M373 348l4 1 1 5-4-1z" fill="#00f6ff"/><path d="M436 386l4-1 2 5-4 1z" fill="#0072ff"/><path d="M317 280l4 4 2 6-5-4z" fill="#00ff1b"/><path d="M398 368l4 0 1 5-4 0z" fill="#00afff"/><path d="M574 316l4-7 2 5-4 6z" fill="#00ff87"/><path d="M544 349l4-5 1 5-4 5z" fill="#00fcff"/><path d="M332 302l5 3 1 6-4-3z" fill="#00ff68"/><path d="M500 380l4-3 2 4-4 4z" fill="#008bff"/><path d="M291 241l5 5 1 6-5-5z" fill="#72ff00"/><path d="M446 388l4-1 1 5-4 1z" fill="#006aff"/><path d="M348 322l4 2 1 6-4-3z" fill="#00ffad"/><path d="M518 371l4-4 2 4-4 4z" fill="#00aeff"/><path d="M388 361l4 1 1 6-4-1z" fill="#00c6ff"/><path d="M570 322l4-6 2 4-5 6z" fill="#00ff9d"/><path d="M469 390l4-3 2 5-4 2z" fill="#0068ff"/><path d="M540 354l4-5 1 5-4 4z" fill="#00ebff"/><path d="M483 387l4-2 1 4-4 3z" fill="#0071ff"/><path d="M363 339l4 2 2 5-5-1z" fill="#00ffea"/><path d="M307 267l4 4 2 6-5-4z" fill="#17ff00"/><path d="M455 390l4-1 2 4-4 2z" fill="#0065ff"/><path d="M566 327l4-5 1 4-4 6z" fill="#00ffb1"/><path d="M378 354l4 1 2 6-4-1z" fill="#00dfff"/><path d="M496 383l4-3 2 5-4 3z" fill="#0080ff"/><path d="M422 383l4 0 2 5-4 0z" fill="#007cff"/><path d="M413 379l4-1 1 6-4 0z" fill="#008bff"/><path d="M514 374l4-3 2 4-4 4z" fill="#00a1ff"/><path d="M323 290l4 3 1 6-4-3z" fill="#00ff3b"/><path d="M536 359l4-5 1 4-4 5z" fill="#00dbff"/><path d="M432 387l4-1 2 5-5 1z" fill="#0070ff"/><path d="M338 311l4 2 2 6-5-2z" fill="#00ff86"/><path d="M403 373l4 1 2 5-4 0z" fill="#009dff"/><path d="M562 333l4-6 1 5-4 5z" fill="#00ffc5"/><path d="M353 330l5 2 1 5-4-2z" fill="#00ffc8"/><path d="M442 390l4-2 1 5-4 1z" fill="#0067ff"/><path d="M479 390l4-3 1 5-4 2z" fill="#006aff"/><path d="M465 392l4-2 2 4-5 2z" fill="#0062ff"/><path d="M297 252l4 4 2 6-5-4z" fill="#4dff00"/><path d="M393 368l5 0 1 5-4 0z" fill="#00b2ff"/><path d="M532 363l4-4 1 4-4 4z" fill="#00ccff"/><path d="M369 346l4 2 1 5-4-1z" fill="#00fcff"/><path d="M558 338l4-5 1 4-4 6z" fill="#00ffd8"/><path d="M510 378l4-4 2 5-4 3z" fill="#0095ff"/><path d="M492 386l4-3 2 5-4 3z" fill="#0077ff"/><path d="M451 392l4-2 2 5-4 2z" fill="#0060ff"/><path d="M313 277l4 3 1 6-4-4z" fill="#00ff0c"/><path d="M384 361l4 0 1 6-4-1z" fill="#00caff"/><path d="M328 299l4 3 2 6-5-3z" fill="#00ff5b"/><path d="M554 344l4-6 1 5-4 5z" fill="#00ffeb"/><path d="M528 367l4-4 1 4-4 4z" fill="#00beff"/><path d="M287 236l4 5 1 6-4-6z" fill="#86ff00"/><path d="M344 319l4 3 1 5-4-2z" fill="#00ffa2"/><path d="M359 337l4 2 1 6-4-2z" fill="#00ffe2"/><path d="M475 392l4-2 1 4-4 2z" fill="#0062ff"/><path d="M418 384l4-1 2 5-4 0z" fill="#007cff"/><path d="M506 381l4-3 2 4-4 4z" fill="#008aff"/><path d="M428 388l4-1 1 5-4 0z" fill="#006fff"/><path d="M409 379l4 0 1 5-4 0z" fill="#008cff"/><path d="M461 393l4-1 1 4-4 2z" fill="#005dff"/><path d="M549 349l5-5 1 4-4 5z" fill="#00fffd"/><path d="M488 389l4-3 2 5-4 2z" fill="#006eff"/><path d="M438 391l4-1 1 4-4 1z" fill="#0064ff"/><path d="M374 353l4 1 2 6-5-1z" fill="#00e5ff"/><path d="M580 314l4-7 2 4-5 7z" fill="#00ff7d"/><path d="M524 371l4-4 1 4-4 4z" fill="#00b0ff"/><path d="M399 373l4 0 2 6-5-1z" fill="#00a0ff"/><path d="M303 262l4 5 1 6-4-5z" fill="#28ff00"/><path d="M318 286l5 4 1 6-5-4z" fill="#00ff2d"/><path d="M545 354l4-5 2 4-4 5z" fill="#00f0ff"/><path d="M447 393l4-1 2 5-4 1z" fill="#005dff"/><path d="M576 320l4-6 1 4-4 6z" fill="#00ff93"/><path d="M502 385l4-4 2 5-4 3z" fill="#007fff"/><path d="M334 308l4 3 1 6-4-3z" fill="#00ff7a"/><path d="M389 367l4 1 2 5-4-1z" fill="#00b6ff"/><path d="M349 327l4 3 2 5-5-2z" fill="#00ffbe"/><path d="M520 375l4-4 1 4-4 4z" fill="#00a3ff"/><path d="M471 394l4-2 1 4-4 2z" fill="#005cff"/><path d="M364 345l5 1 1 6-4-2z" fill="#00fffa"/><path d="M484 392l4-3 2 4-4 3z" fill="#0066ff"/><path d="M571 326l5-6 1 4-4 6z" fill="#00ffa8"/><path d="M541 358l4-4 2 4-4 4z" fill="#00e0ff"/><path d="M292 247l5 5 1 6-4-5z" fill="#60ff00"/><path d="M457 395l4-2 1 5-4 1z" fill="#0058ff"/><path d="M380 360l4 1 1 5-4-1z" fill="#00cfff"/><path d="M424 388l4 0 1 4-4 1z" fill="#006eff"/><path d="M414 384l4 0 2 4-4 1z" fill="#007dff"/><path d="M567 332l4-6 2 4-4 5z" fill="#00ffbc"/><path d="M498 388l4-3 2 4-4 3z" fill="#0075ff"/><path d="M433 392l5-1 1 4-4 1z" fill="#0063ff"/><path d="M308 273l5 4 1 5-5-4z" fill="#05ff00"/><path d="M516 379l4-4 1 4-4 4z" fill="#0096ff"/><path d="M405 379l4 0 1 5-4 0z" fill="#008eff"/><path d="M537 363l4-5 2 4-4 5z" fill="#00d0ff"/><path d="M324 296l4 3 1 6-4-3z" fill="#00ff4e"/><path d="M339 317l5 2 1 6-5-3z" fill="#00ff97"/><path d="M355 335l4 2 1 6-4-2z" fill="#00ffd9"/><path d="M282 230l5 6 1 5-5-5z" fill="#9bff00"/><path d="M443 394l4-1 2 5-4 1z" fill="#005aff"/><path d="M563 337l4-5 2 3-4 6z" fill="#00ffd0"/><path d="M480 394l4-2 2 4-4 2z" fill="#005eff"/><path d="M395 373l4 0 1 5-4 0z" fill="#00a3ff"/><path d="M466 396l5-2 1 4-4 2z" fill="#0056ff"/><path d="M370 352l4 1 1 6-4-2z" fill="#00ecff"/><path d="M533 367l4-4 2 4-4 4z" fill="#00c1ff"/><path d="M512 382l4-3 1 4-4 3z" fill="#008aff"/><path d="M494 391l4-3 2 4-4 3z" fill="#006cff"/><path d="M559 343l4-6 2 4-4 5z" fill="#00ffe3"/><path d="M453 397l4-2 1 4-4 2z" fill="#0054ff"/><path d="M298 258l5 4 1 6-5-5z" fill="#3aff00"/><path d="M385 366l4 1 2 5-5-1z" fill="#00bbff"/><path d="M314 282l4 4 1 6-4-4z" fill="#00ff1e"/><path d="M329 305l5 3 1 6-4-3z" fill="#00ff6d"/><path d="M345 325l4 2 1 6-4-2z" fill="#00ffb4"/><path d="M529 371l4-4 2 4-4 4z" fill="#00b3ff"/><path d="M555 348l4-5 2 3-4 6z" fill="#00fff5"/><path d="M420 388l4 0 1 5-4 0z" fill="#006fff"/><path d="M360 343l4 2 2 5-5-2z" fill="#00fff2"/><path d="M429 392l4 0 2 4-4 1z" fill="#0062ff"/><path d="M476 396l4-2 2 4-4 3z" fill="#0057ff"/><path d="M410 384l4 0 2 5-5 0z" fill="#007eff"/><path d="M508 386l4-4 1 4-4 4z" fill="#007fff"/><path d="M462 398l4-2 2 4-4 2z" fill="#0051ff"/><path d="M375 359l5 1 1 5-4-1z" fill="#00d5ff"/><path d="M439 395l4-1 2 5-4 1z" fill="#0058ff"/><path d="M490 393l4-2 2 4-5 2z" fill="#0063ff"/><path d="M400 378l5 1 1 5-4-1z" fill="#0091ff"/><path d="M288 241l4 6 2 6-5-6z" fill="#74ff00"/><path d="M551 353l4-5 2 4-4 5z" fill="#00f7ff"/><path d="M525 375l4-4 2 4-4 4z" fill="#00a5ff"/><path d="M581 318l5-7 1 4-4 6z" fill="#00ff87"/><path d="M449 398l4-1 1 4-4 1z" fill="#0051ff"/><path d="M391 372l4 1 1 5-4-1z" fill="#00a7ff"/><path d="M304 268l4 5 1 5-4-4z" fill="#16ff00"/><path d="M547 358l4-5 2 4-4 4z" fill="#00e6ff"/><path d="M504 389l4-3 1 4-4 3z" fill="#0075ff"/><path d="M350 333l5 2 1 6-4-2z" fill="#00ffcf"/><path d="M335 314l4 3 1 5-4-3z" fill="#00ff8b"/><path d="M319 292l5 4 1 6-4-4z" fill="#00ff3f"/><path d="M577 324l4-6 2 3-4 6z" fill="#00ff9d"/><path d="M366 350l4 2 1 5-4-1z" fill="#00f3ff"/><path d="M472 398l4-2 2 5-4 2z" fill="#0051ff"/><path d="M521 379l4-4 2 4-4 4z" fill="#0098ff"/><path d="M486 396l4-3 1 4-4 3z" fill="#005bff"/><path d="M458 399l4-1 2 4-4 2z" fill="#004dff"/><path d="M381 365l4 1 1 5-4-1z" fill="#00c0ff"/><path d="M573 330l4-6 2 3-4 6z" fill="#00ffb2"/><path d="M543 362l4-4 2 3-4 5z" fill="#00d6ff"/><path d="M425 393l4-1 2 5-4 1z" fill="#0061ff"/><path d="M416 389l4-1 1 5-4 0z" fill="#006fff"/><path d="M435 396l4-1 2 5-5 1z" fill="#0056ff"/><path d="M406 384l4 0 1 5-4 0z" fill="#0081ff"/><path d="M294 253l4 5 1 5-4-5z" fill="#4dff00"/><path d="M500 392l4-3 1 4-4 3z" fill="#006bff"/><path d="M569 335l4-5 2 3-4 6z" fill="#00ffc6"/><path d="M517 383l4-4 2 4-4 4z" fill="#008cff"/><path d="M340 322l5 3 1 6-4-3z" fill="#00ffa9"/><path d="M356 341l4 2 1 5-4-2z" fill="#00ffe9"/><path d="M539 367l4-5 2 4-4 4z" fill="#00c6ff"/><path d="M309 278l5 4 1 6-5-4z" fill="#00ff0d"/><path d="M445 399l4-1 1 4-4 1z" fill="#004eff"/><path d="M325 302l4 3 2 6-5-4z" fill="#00ff5f"/><path d="M396 378l4 0 2 5-4 0z" fill="#0095ff"/><path d="M371 357l4 2 2 5-5-2z" fill="#00dcff"/><path d="M468 400l4-2 2 5-4 1z" fill="#004bff"/><path d="M482 398l4-2 1 4-4 2z" fill="#0053ff"/><path d="M565 341l4-6 2 4-4 6z" fill="#00ffda"/><path d="M283 236l5 5 1 6-5-5z" fill="#89ff00"/><path d="M535 371l4-4 2 3-4 5z" fill="#00b7ff"/><path d="M454 401l4-2 2 5-4 1z" fill="#0049ff"/><path d="M386 371l5 1 1 5-4-1z" fill="#00acff"/><path d="M513 386l4-3 2 4-4 3z" fill="#0080ff"/><path d="M496 395l4-3 1 4-4 3z" fill="#0061ff"/><path d="M561 346l4-5 2 4-4 5z" fill="#00ffed"/><path d="M421 393l4 0 2 5-4 0z" fill="#0062ff"/><path d="M346 331l4 2 2 6-5-3z" fill="#00ffc5"/><path d="M299 263l5 5 1 6-5-5z" fill="#28ff00"/><path d="M361 348l5 2 1 6-4-2z" fill="#00fcff"/><path d="M331 311l4 3 1 5-4-3z" fill="#00ff7f"/><path d="M431 397l4-1 1 5-4 0z" fill="#0055ff"/><path d="M411 389l5 0 1 4-4 0z" fill="#0071ff"/><path d="M315 288l4 4 2 6-5-4z" fill="#00ff30"/><path d="M531 375l4-4 2 4-4 4z" fill="#00a9ff"/><path d="M557 352l4-6 2 4-4 5z" fill="#00ffff"/><path d="M478 401l4-3 1 4-4 2z" fill="#004dff"/><path d="M377 364l4 1 1 5-4-1z" fill="#00c6ff"/><path d="M464 402l4-2 2 4-4 2z" fill="#0046ff"/><path d="M509 390l4-4 2 4-4 3z" fill="#0075ff"/><path d="M441 400l4-1 1 4-4 1z" fill="#004cff"/><path d="M402 383l4 1 1 5-4-1z" fill="#0083ff"/><path d="M491 397l5-2 1 4-4 2z" fill="#0059ff"/><path d="M553 357l4-5 2 3-4 5z" fill="#00edff"/><path d="M527 379l4-4 2 4-4 4z" fill="#009cff"/><path d="M392 377l4 1 2 5-5-1z" fill="#0099ff"/><path d="M450 402l4-1 2 4-4 1z" fill="#0046ff"/><path d="M289 247l5 6 1 5-5-5z" fill="#62ff00"/><path d="M583 321l4-6 2 4-4 6z" fill="#00ff91"/><path d="M352 339l4 2 1 5-4-2z" fill="#00ffe0"/><path d="M336 319l4 3 2 6-5-3z" fill="#00ff9d"/><path d="M367 356l4 1 1 5-4-1z" fill="#00e4ff"/><path d="M505 393l4-3 2 3-4 3z" fill="#006bff"/><path d="M321 298l4 4 1 5-4-3z" fill="#00ff51"/><path d="M305 274l4 4 1 6-4-4z" fill="#04ff00"/><path d="M549 361l4-4 2 3-4 5z" fill="#00ddff"/><path d="M474 403l4-2 1 3-4 2z" fill="#0047ff"/><path d="M579 327l4-6 2 4-4 6z" fill="#00ffa6"/><path d="M382 370l4 1 2 5-4-1z" fill="#00b1ff"/><path d="M487 400l4-3 2 4-4 3z" fill="#0051ff"/><path d="M523 383l4-4 2 4-4 4z" fill="#008fff"/><path d="M460 404l4-2 2 4-5 2z" fill="#0042ff"/><path d="M417 393l4 0 2 5-5 0z" fill="#0063ff"/><path d="M427 398l4-1 1 4-4 1z" fill="#0055ff"/><path d="M407 389l4 0 2 4-4 0z" fill="#0073ff"/><path d="M545 366l4-5 2 4-4 5z" fill="#00cdff"/><path d="M436 401l5-1 1 4-4 1z" fill="#004bff"/><path d="M575 333l4-6 2 4-4 6z" fill="#00ffbb"/><path d="M501 396l4-3 2 3-4 3z" fill="#0061ff"/><path d="M357 346l4 2 2 6-5-2z" fill="#00fff9"/><path d="M398 383l4 0 1 5-4 0z" fill="#0087ff"/><path d="M342 328l4 3 1 5-4-3z" fill="#00ffb9"/><path d="M519 387l4-4 2 4-4 3z" fill="#0083ff"/><path d="M446 403l4-1 2 4-4 1z" fill="#0043ff"/><path d="M372 362l5 2 1 5-4-1z" fill="#00cdff"/><path d="M295 258l4 5 1 6-4-5z" fill="#3bff00"/><path d="M571 339l4-6 2 4-4 6z" fill="#00ffd0"/><path d="M326 307l5 4 1 5-5-3z" fill="#00ff71"/><path d="M541 370l4-4 2 4-4 4z" fill="#00bdff"/><path d="M310 284l5 4 1 6-4-4z" fill="#00ff1f"/><path d="M470 404l4-1 1 3-4 2z" fill="#0041ff"/><path d="M483 402l4-2 2 4-4 2z" fill="#004aff"/><path d="M388 376l4 1 1 5-4-1z" fill="#009eff"/><path d="M567 345l4-6 2 4-4 5z" fill="#00ffe3"/><path d="M456 405l4-1 1 4-4 1z" fill="#003eff"/><path d="M497 399l4-3 2 3-4 3z" fill="#0058ff"/><path d="M537 375l4-5 2 4-4 4z" fill="#00afff"/><path d="M515 390l4-3 2 3-4 4z" fill="#0077ff"/><path d="M423 398l4 0 1 4-4 0z" fill="#0056ff"/><path d="M363 354l4 2 1 5-4-2z" fill="#00ecff"/><path d="M347 336l5 3 1 5-5-2z" fill="#00ffd5"/><path d="M563 350l4-5 2 3-4 5z" fill="#00fff6"/><path d="M284 242l5 5 1 6-5-6z" fill="#77ff00"/><path d="M413 393l4 0 1 5-4 0z" fill="#0065ff"/><path d="M432 401l4 0 2 4-4 1z" fill="#004aff"/><path d="M332 316l4 3 1 6-4-3z" fill="#00ff90"/><path d="M378 369l4 1 2 5-5-1z" fill="#00b8ff"/><path d="M316 294l5 4 1 6-5-4z" fill="#00ff41"/><path d="M300 269l5 5 1 6-5-5z" fill="#16ff00"/><path d="M403 388l4 1 2 4-4 0z" fill="#0076ff"/><path d="M479 404l4-2 2 4-4 2z" fill="#0043ff"/><path d="M533 379l4-4 2 3-4 4z" fill="#00a1ff"/><path d="M442 404l4-1 2 4-5 1z" fill="#0041ff"/><path d="M466 406l4-2 1 4-4 2z" fill="#003cff"/><path d="M559 355l4-5 2 3-4 6z" fill="#00f6ff"/><path d="M511 393l4-3 2 4-4 3z" fill="#006dff"/><path d="M493 401l4-2 2 3-4 3z" fill="#0050ff"/><path d="M393 382l5 1 1 5-4-1z" fill="#008bff"/><path d="M452 406l4-1 1 4-4 1z" fill="#003bff"/><path d="M555 360l4-5 2 4-4 4z" fill="#00e5ff"/><path d="M353 344l4 2 1 6-4-3z" fill="#00ffef"/><path d="M529 383l4-4 2 3-4 4z" fill="#0093ff"/><path d="M368 361l4 1 2 6-4-2z" fill="#00d5ff"/><path d="M337 325l5 3 1 5-4-3z" fill="#00ffad"/><path d="M585 325l4-6 2 3-4 6z" fill="#00ff99"/><path d="M322 304l4 3 1 6-4-4z" fill="#00ff62"/><path d="M290 253l5 5 1 6-5-5z" fill="#50ff00"/><path d="M507 396l4-3 2 4-4 3z" fill="#0062ff"/><path d="M384 375l4 1 1 5-4-1z" fill="#00a3ff"/><path d="M475 406l4-2 2 4-4 2z" fill="#003dff"/><path d="M306 280l4 4 2 6-5-5z" fill="#00ff0e"/><path d="M551 365l4-5 2 3-4 5z" fill="#00d4ff"/><path d="M418 398l5 0 1 4-4 0z" fill="#0057ff"/><path d="M428 402l4-1 2 5-4 0z" fill="#004aff"/><path d="M489 404l4-3 2 4-4 2z" fill="#0048ff"/><path d="M461 408l5-2 1 4-4 2z" fill="#0038ff"/><path d="M525 387l4-4 2 3-4 4z" fill="#0087ff"/><path d="M581 331l4-6 2 3-4 6z" fill="#00ffaf"/><path d="M409 393l4 0 1 5-4 0z" fill="#0067ff"/><path d="M438 405l4-1 1 4-4 1z" fill="#0040ff"/><path d="M547 370l4-5 2 3-4 5z" fill="#00c5ff"/><path d="M358 352l5 2 1 5-4-2z" fill="#00f5ff"/><path d="M399 388l4 0 2 5-5-1z" fill="#007aff"/><path d="M577 337l4-6 2 3-4 6z" fill="#00ffc4"/><path d="M343 333l4 3 1 6-4-3z" fill="#00ffc9"/><path d="M374 368l4 1 1 5-4-2z" fill="#00bfff"/><path d="M503 399l4-3 2 4-4 3z" fill="#0059ff"/><path d="M448 407l4-1 1 4-4 1z" fill="#0039ff"/><path d="M327 313l5 3 1 6-4-4z" fill="#00ff82"/><path d="M521 390l4-3 2 3-4 3z" fill="#007bff"/><path d="M573 343l4-6 2 3-4 6z" fill="#00ffd8"/><path d="M471 408l4-2 2 4-4 2z" fill="#0038ff"/><path d="M312 290l4 4 1 6-4-5z" fill="#00ff31"/><path d="M543 374l4-4 2 3-4 4z" fill="#00b5ff"/><path d="M296 264l4 5 1 6-4-5z" fill="#2aff00"/><path d="M389 381l4 1 2 5-4-1z" fill="#0090ff"/><path d="M485 406l4-2 2 3-4 3z" fill="#0041ff"/><path d="M457 409l4-1 2 4-4 1z" fill="#0035ff"/><path d="M569 348l4-5 2 3-4 5z" fill="#00ffeb"/><path d="M364 359l4 2 2 5-5-2z" fill="#00ddff"/><path d="M499 402l4-3 2 4-4 3z" fill="#0050ff"/><path d="M348 342l5 2 1 5-4-2z" fill="#00ffe5"/><path d="M517 394l4-4 2 3-4 4z" fill="#006fff"/><path d="M424 402l4 0 2 4-5 0z" fill="#004bff"/><path d="M539 378l4-4 2 3-4 4z" fill="#00a7ff"/><path d="M414 398l4 0 2 4-4 0z" fill="#0059ff"/><path d="M434 406l4-1 1 4-4 1z" fill="#0040ff"/><path d="M379 374l5 1 1 5-4-1z" fill="#00aaff"/><path d="M333 322l4 3 2 5-5-3z" fill="#00ffa0"/><path d="M565 353l4-5 2 3-4 5z" fill="#00fffd"/><path d="M405 393l4 0 1 5-4-1z" fill="#006aff"/><path d="M317 300l5 4 1 5-5-4z" fill="#00ff52"/><path d="M285 247l5 6 1 6-4-6z" fill="#65ff00"/><path d="M443 408l5-1 1 4-4 1z" fill="#0037ff"/><path d="M481 408l4-2 2 4-4 2z" fill="#003bff"/><path d="M467 410l4-2 2 4-4 2z" fill="#0034ff"/><path d="M301 275l5 5 1 5-4-5z" fill="#05ff00"/><path d="M535 382l4-4 2 3-4 4z" fill="#0099ff"/><path d="M395 387l4 1 1 4-4-1z" fill="#007fff"/><path d="M561 359l4-6 2 3-4 6z" fill="#00efff"/><path d="M513 397l4-3 2 3-5 3z" fill="#0065ff"/><path d="M495 405l4-3 2 4-5 2z" fill="#0048ff"/><path d="M354 349l4 3 2 5-5-3z" fill="#00ffff"/><path d="M370 366l4 2 1 4-4-1z" fill="#00c7ff"/><path d="M453 410l4-1 2 4-4 1z" fill="#0032ff"/><path d="M339 330l4 3 1 6-4-3z" fill="#00ffbd"/><path d="M557 363l4-4 2 3-4 5z" fill="#00deff"/><path d="M531 386l4-4 2 3-4 4z" fill="#008cff"/><path d="M385 380l4 1 2 5-5-1z" fill="#0096ff"/><path d="M323 309l4 4 2 5-5-3z" fill="#00ff73"/><path d="M509 400l4-3 1 3-4 3z" fill="#005bff"/><path d="M420 402l4 0 1 4-4 0z" fill="#004cff"/><path d="M477 410l4-2 2 4-5 2z" fill="#0035ff"/><path d="M587 328l4-6 2 3-4 6z" fill="#00ffa1"/><path d="M430 406l4 0 1 4-4 0z" fill="#0040ff"/><path d="M307 285l5 5 1 5-5-4z" fill="#00ff1f"/><path d="M291 259l5 5 1 6-5-6z" fill="#3eff00"/><path d="M410 398l4 0 2 4-5 0z" fill="#005cff"/><path d="M553 368l4-5 2 4-4 4z" fill="#00cdff"/><path d="M463 412l4-2 2 4-4 1z" fill="#0030ff"/><path d="M491 407l4-2 1 3-4 3z" fill="#0040ff"/><path d="M439 409l4-1 2 4-4 1z" fill="#0036ff"/><path d="M527 390l4-4 2 3-5 4z" fill="#007fff"/><path d="M360 357l4 2 1 5-4-2z" fill="#00e7ff"/><path d="M583 334l4-6 2 3-4 6z" fill="#00ffb6"/><path d="M400 392l5 1 1 4-4 0z" fill="#006eff"/><path d="M375 372l4 2 2 5-5-2z" fill="#00b1ff"/><path d="M344 339l4 3 2 5-5-3z" fill="#00ffd9"/><path d="M549 373l4-5 2 3-4 5z" fill="#00bdff"/><path d="M449 411l4-1 2 4-4 1z" fill="#0030ff"/><path d="M329 318l4 4 1 5-4-3z" fill="#00ff92"/><path d="M505 403l4-3 1 3-4 3z" fill="#0052ff"/><path d="M579 340l4-6 2 3-4 6z" fill="#00ffcb"/><path d="M391 386l4 1 1 4-4-1z" fill="#0084ff"/><path d="M523 393l4-3 1 3-4 4z" fill="#0074ff"/><path d="M313 295l4 5 1 5-4-4z" fill="#00ff42"/><path d="M473 412l4-2 1 4-4 1z" fill="#0030ff"/><path d="M487 410l4-3 1 4-4 2z" fill="#003aff"/><path d="M297 270l4 5 2 5-5-5z" fill="#18ff00"/><path d="M545 377l4-4 2 3-4 4z" fill="#00aeff"/><path d="M575 346l4-6 2 3-4 6z" fill="#00ffdf"/><path d="M365 364l5 2 1 5-4-2z" fill="#00cfff"/><path d="M459 413l4-1 2 3-5 1z" fill="#002cff"/><path d="M350 347l4 2 1 5-4-2z" fill="#00fff4"/><path d="M425 406l5 0 1 4-4 0z" fill="#0041ff"/><path d="M416 402l4 0 1 4-4 0z" fill="#004eff"/><path d="M381 379l4 1 1 5-4-2z" fill="#009dff"/><path d="M571 351l4-5 2 3-4 5z" fill="#00fff2"/><path d="M501 406l4-3 1 3-4 3z" fill="#0049ff"/><path d="M334 327l5 3 1 6-5-4z" fill="#00ffb0"/><path d="M435 410l4-1 2 4-4 0z" fill="#0036ff"/><path d="M519 397l4-4 1 4-4 3z" fill="#0069ff"/><path d="M406 397l4 1 1 4-4-1z" fill="#005fff"/><path d="M541 381l4-4 2 3-5 4z" fill="#00a0ff"/><path d="M318 305l5 4 1 6-4-4z" fill="#00ff63"/><path d="M445 412l4-1 2 4-4 1z" fill="#002eff"/><path d="M567 356l4-5 2 3-4 5z" fill="#00faff"/><path d="M396 391l4 1 2 5-5-1z" fill="#0073ff"/><path d="M483 412l4-2 1 3-4 2z" fill="#0033ff"/><path d="M469 414l4-2 1 3-4 2z" fill="#002cff"/><path d="M303 280l4 5 1 6-4-5z" fill="#00ff0d"/><path d="M287 253l4 6 1 5-4-5z" fill="#53ff00"/><path d="M537 385l4-4 1 3-4 4z" fill="#0093ff"/><path d="M355 354l5 3 1 5-4-3z" fill="#00f1ff"/><path d="M371 371l4 1 1 5-4-2z" fill="#00b9ff"/><path d="M514 400l5-3 1 3-4 3z" fill="#005eff"/><path d="M563 362l4-6 2 3-4 5z" fill="#00e8ff"/><path d="M496 408l5-2 1 3-4 2z" fill="#0041ff"/><path d="M340 336l4 3 1 5-4-3z" fill="#00ffcd"/><path d="M455 414l4-1 1 3-4 2z" fill="#002aff"/><path d="M386 385l5 1 1 4-4-1z" fill="#008aff"/><path d="M324 315l5 3 1 6-5-4z" fill="#00ff83"/><path d="M533 389l4-4 1 3-4 4z" fill="#0086ff"/><path d="M559 367l4-5 2 2-4 5z" fill="#00d7ff"/><path d="M421 406l4 0 2 4-4 0z" fill="#0042ff"/><path d="M431 410l4 0 2 3-4 1z" fill="#0036ff"/><path d="M411 402l5 0 1 4-4 0z" fill="#0051ff"/><path d="M478 414l5-2 1 3-4 2z" fill="#002eff"/><path d="M308 291l5 4 1 6-5-5z" fill="#00ff30"/><path d="M510 403l4-3 2 3-4 3z" fill="#0054ff"/><path d="M361 362l4 2 2 5-5-2z" fill="#00d9ff"/><path d="M465 415l4-1 1 3-4 1z" fill="#0028ff"/><path d="M292 264l5 6 1 5-5-5z" fill="#2dff00"/><path d="M589 331l4-6 2 2-4 7z" fill="#00ffa7"/><path d="M441 413l4-1 2 4-5 1z" fill="#002eff"/><path d="M402 397l4 0 1 4-4 0z" fill="#0063ff"/><path d="M376 377l5 2 1 4-4-1z" fill="#00a4ff"/><path d="M492 411l4-3 2 3-4 3z" fill="#003aff"/><path d="M555 371l4-4 2 2-4 5z" fill="#00c7ff"/><path d="M345 344l5 3 1 5-4-3z" fill="#00ffe8"/><path d="M528 393l5-4 1 3-4 4z" fill="#0079ff"/><path d="M585 337l4-6 2 3-4 6z" fill="#00ffbc"/><path d="M330 324l4 3 1 5-4-3z" fill="#00ffa2"/><path d="M451 415l4-1 1 4-4 1z" fill="#0028ff"/><path d="M392 390l4 1 1 5-4-1z" fill="#0078ff"/><path d="M551 376l4-5 2 3-4 5z" fill="#00b7ff"/><path d="M506 406l4-3 2 3-4 3z" fill="#004bff"/><path d="M581 343l4-6 2 3-4 6z" fill="#00ffd1"/><path d="M314 301l4 4 2 6-5-5z" fill="#00ff52"/><path d="M474 415l4-1 2 3-4 2z" fill="#0029ff"/><path d="M524 397l4-4 2 3-4 3z" fill="#006eff"/><path d="M367 369l4 2 1 4-4-2z" fill="#00c2ff"/><path d="M351 352l4 2 2 5-5-2z" fill="#00fcff"/><path d="M298 275l5 5 1 6-5-5z" fill="#07ff00"/><path d="M488 413l4-2 2 3-4 2z" fill="#0033ff"/><path d="M547 380l4-4 2 3-5 4z" fill="#00a9ff"/><path d="M577 349l4-6 2 3-4 5z" fill="#00ffe5"/><path d="M460 416l5-1 1 3-4 2z" fill="#0025ff"/><path d="M382 383l4 2 2 4-5-1z" fill="#0091ff"/><path d="M417 406l4 0 2 4-4 0z" fill="#0045ff"/><path d="M427 410l4 0 2 4-5 0z" fill="#0038ff"/><path d="M335 332l5 4 1 5-4-3z" fill="#00ffbf"/><path d="M407 401l4 1 2 4-4-1z" fill="#0055ff"/><path d="M437 413l4 0 1 4-4 0z" fill="#002dff"/><path d="M502 409l4-3 2 3-4 3z" fill="#0043ff"/><path d="M573 354l4-5 2 2-4 6z" fill="#00fff8"/><path d="M520 400l4-3 2 2-4 4z" fill="#0063ff"/><path d="M320 311l4 4 1 5-4-4z" fill="#00ff73"/><path d="M542 384l5-4 1 3-4 4z" fill="#009aff"/><path d="M397 396l5 1 1 4-4-1z" fill="#0068ff"/><path d="M447 416l4-1 1 4-4 0z" fill="#0026ff"/><path d="M357 359l4 3 1 5-4-3z" fill="#00e3ff"/><path d="M372 375l4 2 2 5-5-2z" fill="#00adff"/><path d="M304 286l4 5 1 5-4-5z" fill="#00ff1d"/><path d="M569 359l4-5 2 3-4 5z" fill="#00f4ff"/><path d="M470 417l4-2 2 4-4 1z" fill="#0025ff"/><path d="M484 415l4-2 2 3-4 2z" fill="#002dff"/><path d="M288 259l4 5 1 6-4-6z" fill="#42ff00"/><path d="M341 341l4 3 2 5-5-3z" fill="#00ffdb"/><path d="M538 388l4-4 2 3-4 4z" fill="#008dff"/><path d="M388 389l4 1 1 5-4-2z" fill="#007fff"/><path d="M516 403l4-3 2 3-4 3z" fill="#0059ff"/><path d="M456 418l4-2 2 4-4 1z" fill="#0022ff"/><path d="M498 411l4-2 2 3-4 2z" fill="#003bff"/><path d="M565 364l4-5 2 3-4 5z" fill="#00e3ff"/><path d="M325 320l5 4 1 5-5-4z" fill="#00ff93"/><path d="M423 410l4 0 1 4-4 0z" fill="#0039ff"/><path d="M413 406l4 0 2 4-5 0z" fill="#0048ff"/><path d="M433 414l4-1 1 4-4 0z" fill="#002eff"/><path d="M362 367l5 2 1 4-5-2z" fill="#00ccff"/><path d="M534 392l4-4 2 3-4 4z" fill="#0080ff"/><path d="M561 369l4-5 2 3-4 5z" fill="#00d2ff"/><path d="M309 296l5 5 1 5-4-4z" fill="#00ff40"/><path d="M378 382l4 1 1 5-4-2z" fill="#0098ff"/><path d="M347 349l4 3 1 5-4-3z" fill="#00fff6"/><path d="M480 417l4-2 2 3-4 2z" fill="#0028ff"/><path d="M403 401l4 0 2 4-5 0z" fill="#0059ff"/><path d="M512 406l4-3 2 3-4 3z" fill="#004fff"/><path d="M442 417l5-1 1 3-4 1z" fill="#0026ff"/><path d="M466 418l4-1 2 3-4 2z" fill="#0021ff"/><path d="M293 270l5 5 1 6-4-6z" fill="#1cff00"/><path d="M591 334l4-7 3 3-5 6z" fill="#00ffac"/><path d="M494 414l4-3 2 3-4 2z" fill="#0034ff"/><path d="M331 329l4 3 2 6-5-4z" fill="#00ffb1"/><path d="M557 374l4-5 2 3-4 5z" fill="#00c2ff"/><path d="M393 395l4 1 2 4-4-1z" fill="#006eff"/><path d="M530 396l4-4 2 3-4 3z" fill="#0074ff"/><path d="M452 419l4-1 2 3-4 1z" fill="#0021ff"/><path d="M587 340l4-6 2 2-4 6z" fill="#00ffc2"/><path d="M315 306l5 5 1 5-5-4z" fill="#00ff62"/><path d="M368 373l4 2 1 5-4-2z" fill="#00b6ff"/><path d="M553 379l4-5 2 3-5 4z" fill="#00b2ff"/><path d="M352 357l5 2 1 5-5-2z" fill="#00eeff"/><path d="M508 409l4-3 2 3-4 3z" fill="#0046ff"/><path d="M583 346l4-6 2 2-4 6z" fill="#00ffd6"/><path d="M383 388l5 1 1 4-4-1z" fill="#0085ff"/><path d="M476 419l4-2 2 3-4 1z" fill="#0023ff"/><path d="M299 281l5 5 1 5-5-5z" fill="#00ff0a"/><path d="M526 399l4-3 2 2-4 4z" fill="#0069ff"/><path d="M337 338l4 3 1 5-4-3z" fill="#00ffce"/><path d="M419 410l4 0 1 4-4 0z" fill="#003cff"/><path d="M490 416l4-2 2 2-4 3z" fill="#002dff"/><path d="M428 414l5 0 1 3-4 0z" fill="#002fff"/><path d="M462 420l4-2 2 4-4 1z" fill="#001eff"/><path d="M409 405l4 1 1 4-4-1z" fill="#004bff"/><path d="M548 383l5-4 1 2-4 4z" fill="#00a4ff"/><path d="M579 351l4-5 2 2-4 6z" fill="#00ffe9"/><path d="M438 417l4 0 2 3-4 0z" fill="#0026ff"/><path d="M321 316l4 4 1 5-4-4z" fill="#00ff82"/><path d="M399 400l4 1 1 4-4-1z" fill="#005eff"/><path d="M504 412l4-3 2 3-4 2z" fill="#003eff"/><path d="M358 364l4 3 1 4-4-2z" fill="#00d6ff"/><path d="M373 380l5 2 1 4-4-2z" fill="#00a1ff"/><path d="M575 357l4-6 2 3-4 5z" fill="#00fffc"/><path d="M522 403l4-4 2 3-4 3z" fill="#005eff"/><path d="M448 419l4 0 2 3-4 0z" fill="#001fff"/><path d="M544 387l4-4 2 2-4 4z" fill="#0096ff"/><path d="M305 291l4 5 2 6-5-5z" fill="#00ff2e"/><path d="M342 346l5 3 1 5-5-3z" fill="#00ffe9"/><path d="M472 420l4-1 2 2-4 2z" fill="#001fff"/><path d="M389 393l4 2 2 4-5-1z" fill="#0074ff"/><path d="M486 418l4-2 2 3-4 2z" fill="#0028ff"/><path d="M289 264l4 6 2 5-5-5z" fill="#31ff00"/><path d="M571 362l4-5 2 2-4 5z" fill="#00f0ff"/><path d="M326 325l5 4 1 5-4-4z" fill="#00ffa2"/><path d="M458 421l4-1 2 3-5 1z" fill="#001cff"/><path d="M540 391l4-4 2 2-4 4z" fill="#0088ff"/><path d="M518 406l4-3 2 2-4 3z" fill="#0054ff"/><path d="M500 414l4-2 2 2-4 3z" fill="#0036ff"/><path d="M567 367l4-5 2 2-4 5z" fill="#00deff"/><path d="M363 371l5 2 1 5-4-2z" fill="#00bfff"/><path d="M424 414l4 0 2 3-4 0z" fill="#0031ff"/><path d="M414 410l5 0 1 4-4-1z" fill="#003fff"/><path d="M311 302l4 4 1 6-4-5z" fill="#00ff50"/><path d="M434 417l4 0 2 3-4 1z" fill="#0027ff"/><path d="M379 386l4 2 2 4-5-2z" fill="#008dff"/><path d="M348 354l4 3 1 5-4-3z" fill="#00faff"/><path d="M404 405l5 0 1 4-4-1z" fill="#0050ff"/><path d="M536 395l4-4 2 2-4 4z" fill="#007cff"/><path d="M563 372l4-5 2 2-4 5z" fill="#00ceff"/><path d="M295 275l4 6 1 5-4-5z" fill="#0bff00"/><path d="M444 420l4-1 2 3-5 1z" fill="#001fff"/><path d="M482 420l4-2 2 3-5 1z" fill="#0022ff"/><path d="M332 334l5 4 1 5-5-4z" fill="#00ffbf"/><path d="M468 422l4-2 2 3-5 1z" fill="#001bff"/><path d="M514 409l4-3 2 2-4 3z" fill="#004aff"/><path d="M395 399l4 1 1 4-4-1z" fill="#0064ff"/><path d="M496 416l4-2 2 3-5 2z" fill="#002fff"/><path d="M593 336l5-6 2 2-5 6z" fill="#00ffb1"/><path d="M559 377l4-5 2 2-5 5z" fill="#00beff"/><path d="M316 312l5 4 1 5-5-4z" fill="#00ff72"/><path d="M369 378l4 2 2 4-5-2z" fill="#00aaff"/><path d="M454 422l4-1 1 3-4 1z" fill="#001aff"/><path d="M353 362l5 2 1 5-4-3z" fill="#00e1ff"/><path d="M532 398l4-3 2 2-4 4z" fill="#0070ff"/><path d="M589 342l4-6 2 2-4 6z" fill="#00ffc6"/><path d="M385 392l4 1 1 5-4-2z" fill="#007bff"/><path d="M338 343l4 3 1 5-4-4z" fill="#00ffdc"/><path d="M300 286l5 5 1 6-5-5z" fill="#00ff1a"/><path d="M554 381l5-4 1 2-4 4z" fill="#00aeff"/><path d="M510 412l4-3 2 2-4 3z" fill="#0042ff"/><path d="M420 414l4 0 2 3-5 0z" fill="#0034ff"/><path d="M478 421l4-1 1 2-4 2z" fill="#001eff"/><path d="M585 348l4-6 2 2-4 6z" fill="#00ffda"/><path d="M430 417l4 0 2 4-5 0z" fill="#0028ff"/><path d="M410 409l4 1 2 3-4 0z" fill="#0043ff"/><path d="M528 402l4-4 2 3-4 3z" fill="#0065ff"/><path d="M492 419l4-3 1 3-4 2z" fill="#0029ff"/><path d="M464 423l4-1 1 2-4 2z" fill="#0019ff"/><path d="M322 321l4 4 2 5-5-4z" fill="#00ff91"/><path d="M440 420l4 0 1 3-4 0z" fill="#001fff"/><path d="M550 385l4-4 2 2-4 5z" fill="#00a0ff"/><path d="M359 369l4 2 2 5-5-3z" fill="#00caff"/><path d="M400 404l4 1 2 3-4 0z" fill="#0055ff"/><path d="M581 354l4-6 2 2-4 6z" fill="#00ffed"/><path d="M375 384l4 2 1 4-4-1z" fill="#0096ff"/><path d="M343 351l5 3 1 5-4-3z" fill="#00fff7"/><path d="M306 297l5 5 1 5-5-5z" fill="#00ff3d"/><path d="M506 414l4-2 2 2-5 3z" fill="#003aff"/><path d="M450 422l4 0 1 3-4 0z" fill="#0019ff"/><path d="M577 359l4-5 2 2-4 5z" fill="#00feff"/><path d="M524 405l4-3 2 2-4 3z" fill="#005aff"/><path d="M390 398l5 1 1 4-4-2z" fill="#006aff"/><path d="M546 389l4-4 2 3-4 4z" fill="#0092ff"/><path d="M328 330l4 4 1 5-4-4z" fill="#00ffb0"/><path d="M290 270l5 5 1 6-5-6z" fill="#21ff00"/><path d="M474 423l4-2 1 3-4 2z" fill="#001aff"/><path d="M488 421l4-2 1 2-4 2z" fill="#0023ff"/><path d="M573 364l4-5 2 2-4 5z" fill="#00ecff"/><path d="M365 376l4 2 1 4-4-2z" fill="#00b4ff"/><path d="M459 424l5-1 1 3-4 1z" fill="#0017ff"/><path d="M349 359l4 3 2 4-5-3z" fill="#00eeff"/><path d="M426 417l4 0 1 4-4 0z" fill="#002aff"/><path d="M380 390l5 2 1 4-4-2z" fill="#0083ff"/><path d="M542 393l4-4 2 3-4 4z" fill="#0085ff"/><path d="M416 413l4 1 1 3-4 0z" fill="#0037ff"/><path d="M312 307l4 5 1 5-4-5z" fill="#00ff60"/><path d="M502 417l4-3 1 3-4 2z" fill="#0032ff"/><path d="M520 408l4-3 2 2-4 4z" fill="#0050ff"/><path d="M569 369l4-5 2 2-4 5z" fill="#00dbff"/><path d="M436 421l4-1 1 3-4 1z" fill="#0020ff"/><path d="M406 408l4 1 2 4-5-1z" fill="#0047ff"/><path d="M333 339l5 4 1 4-4-3z" fill="#00ffcd"/><path d="M296 281l4 5 1 6-4-6z" fill="#00ff05"/><path d="M445 423l5-1 1 3-4 1z" fill="#0019ff"/><path d="M396 403l4 1 2 4-5-2z" fill="#005bff"/><path d="M538 397l4-4 2 3-4 3z" fill="#0079ff"/><path d="M565 374l4-5 2 2-4 5z" fill="#00caff"/><path d="M483 422l5-1 1 2-4 2z" fill="#001eff"/><path d="M469 424l5-1 1 3-4 1z" fill="#0017ff"/><path d="M370 382l5 2 1 5-4-3z" fill="#009fff"/><path d="M317 317l5 4 1 5-4-4z" fill="#00ff80"/><path d="M355 366l4 3 1 4-4-2z" fill="#00d5ff"/><path d="M516 411l4-3 2 3-5 2z" fill="#0047ff"/><path d="M497 419l5-2 1 2-4 2z" fill="#002bff"/><path d="M595 338l5-6 2 2-4 6z" fill="#00ffb4"/><path d="M455 425l4-1 2 3-4 0z" fill="#0015ff"/><path d="M560 379l5-5 2 2-5 5z" fill="#00bbff"/><path d="M386 396l4 2 2 3-5-1z" fill="#0071ff"/><path d="M339 347l4 4 2 5-5-4z" fill="#00ffe9"/><path d="M534 401l4-4 2 2-4 4z" fill="#006dff"/><path d="M301 292l5 5 1 5-4-5z" fill="#00ff2a"/><path d="M591 344l4-6 3 2-5 6z" fill="#00ffc9"/><path d="M421 417l5 0 1 4-4-1z" fill="#002dff"/><path d="M412 413l4 0 1 4-4-1z" fill="#003bff"/><path d="M431 421l5 0 1 3-4 0z" fill="#0022ff"/><path d="M323 326l5 4 1 5-5-4z" fill="#00ffa0"/><path d="M556 383l4-4 2 2-4 4z" fill="#00acff"/><path d="M512 414l4-3 1 2-4 3z" fill="#003eff"/><path d="M479 424l4-2 2 3-4 2z" fill="#001aff"/><path d="M360 373l5 3 1 4-4-2z" fill="#00beff"/><path d="M587 350l4-6 2 2-4 6z" fill="#00ffdd"/><path d="M376 389l4 1 2 4-5-2z" fill="#008bff"/><path d="M402 408l4 0 1 4-4-1z" fill="#004dff"/><path d="M465 426l4-2 2 3-4 1z" fill="#0014ff"/><path d="M441 423l4 0 2 3-4 0z" fill="#001aff"/><path d="M493 421l4-2 2 2-4 2z" fill="#0025ff"/><path d="M530 404l4-3 2 2-4 3z" fill="#0062ff"/><path d="M345 356l4 3 1 4-4-3z" fill="#00fbff"/><path d="M307 302l5 5 1 5-5-5z" fill="#00ff4d"/><path d="M552 388l4-5 2 2-4 4z" fill="#009dff"/><path d="M583 356l4-6 2 2-4 6z" fill="#00fff0"/><path d="M392 401l4 2 1 3-4-1z" fill="#0061ff"/><path d="M451 425l4 0 2 2-4 1z" fill="#0014ff"/><path d="M329 335l4 4 2 5-5-4z" fill="#00ffbe"/><path d="M507 417l5-3 1 2-4 3z" fill="#0037ff"/><path d="M291 275l5 6 1 5-5-6z" fill="#11ff00"/><path d="M579 361l4-5 2 2-4 5z" fill="#00fbff"/><path d="M526 407l4-3 2 2-4 3z" fill="#0057ff"/><path d="M366 380l4 2 2 4-5-2z" fill="#00a9ff"/><path d="M548 392l4-4 2 1-4 5z" fill="#0090ff"/><path d="M475 426l4-2 2 3-4 1z" fill="#0016ff"/><path d="M350 363l5 3 1 5-4-3z" fill="#00e2ff"/><path d="M489 423l4-2 2 2-4 2z" fill="#0020ff"/><path d="M382 394l4 2 1 4-4-2z" fill="#0079ff"/><path d="M313 312l4 5 2 5-5-5z" fill="#00ff6e"/><path d="M575 366l4-5 2 2-4 5z" fill="#00e9ff"/><path d="M417 417l4 0 2 3-4 0z" fill="#0030ff"/><path d="M461 427l4-1 2 2-4 1z" fill="#0012ff"/><path d="M427 421l4 0 2 3-4 0z" fill="#0024ff"/><path d="M335 344l4 3 1 5-4-3z" fill="#00ffda"/><path d="M407 412l5 1 1 3-4-1z" fill="#0040ff"/><path d="M437 424l4-1 2 3-4 0z" fill="#001bff"/><path d="M544 396l4-4 2 2-4 3z" fill="#0083ff"/><path d="M503 419l4-2 2 2-4 2z" fill="#002fff"/><path d="M522 411l4-4 2 2-5 4z" fill="#004eff"/><path d="M297 286l4 6 2 5-5-6z" fill="#00ff15"/><path d="M571 371l4-5 2 2-4 5z" fill="#00d8ff"/><path d="M397 406l5 2 1 3-4-1z" fill="#0053ff"/><path d="M372 386l4 3 1 3-4-2z" fill="#0095ff"/><path d="M356 371l4 2 2 5-5-3z" fill="#00caff"/><path d="M447 426l4-1 2 3-5 1z" fill="#0014ff"/><path d="M319 322l4 4 1 5-4-4z" fill="#00ff8f"/><path d="M485 425l4-2 2 2-4 2z" fill="#001bff"/><path d="M540 399l4-3 2 1-4 4z" fill="#0076ff"/><path d="M471 427l4-1 2 2-4 1z" fill="#0013ff"/><path d="M567 376l4-5 2 2-4 5z" fill="#00c8ff"/><path d="M340 352l5 4 1 4-5-3z" fill="#00fff5"/><path d="M387 400l5 1 1 4-4-2z" fill="#0069ff"/><path d="M517 413l5-2 1 2-4 2z" fill="#0045ff"/><path d="M303 297l4 5 1 5-4-5z" fill="#00ff39"/><path d="M499 421l4-2 2 2-4 2z" fill="#0029ff"/><path d="M457 427l4 0 2 2-5 1z" fill="#0011ff"/><path d="M598 340l4-6 2 2-4 6z" fill="#00ffb6"/><path d="M562 381l5-5 2 2-5 5z" fill="#00b8ff"/><path d="M324 331l5 4 1 5-4-4z" fill="#00ffad"/><path d="M536 403l4-4 2 2-4 4z" fill="#006bff"/><path d="M423 420l4 1 2 3-5-1z" fill="#0027ff"/><path d="M362 378l4 2 1 4-4-2z" fill="#00b4ff"/><path d="M413 416l4 1 2 3-5-1z" fill="#0035ff"/><path d="M593 346l5-6 2 2-5 6z" fill="#00ffcb"/><path d="M433 424l4 0 2 2-5 0z" fill="#001cff"/><path d="M377 392l5 2 1 4-4-2z" fill="#0082ff"/><path d="M346 360l4 3 2 5-5-4z" fill="#00efff"/><path d="M403 411l4 1 2 3-5-1z" fill="#0045ff"/><path d="M558 385l4-4 2 2-4 4z" fill="#00aaff"/><path d="M513 416l4-3 2 2-4 3z" fill="#003cff"/><path d="M481 427l4-2 2 2-4 2z" fill="#0017ff"/><path d="M308 307l5 5 1 5-5-5z" fill="#00ff5b"/><path d="M443 426l4 0 1 3-4 0z" fill="#0015ff"/><path d="M467 428l4-1 2 2-5 1z" fill="#0011ff"/><path d="M589 352l4-6 2 2-4 6z" fill="#00ffdf"/><path d="M495 423l4-2 2 2-4 2z" fill="#0023ff"/><path d="M532 406l4-3 2 2-4 3z" fill="#0060ff"/><path d="M330 340l5 4 1 5-5-4z" fill="#00ffcb"/><path d="M393 405l4 1 2 4-5-2z" fill="#0059ff"/><path d="M554 389l4-4 2 2-4 4z" fill="#009bff"/><path d="M585 358l4-6 2 2-4 5z" fill="#00fff2"/><path d="M292 280l5 6 1 5-5-5z" fill="#01ff00"/><path d="M453 428l4-1 1 3-4 1z" fill="#0010ff"/><path d="M367 384l5 2 1 4-4-2z" fill="#009fff"/><path d="M352 368l4 3 1 4-4-3z" fill="#00d6ff"/><path d="M509 419l4-3 2 2-4 3z" fill="#0035ff"/><path d="M314 317l5 5 1 5-5-5z" fill="#00ff7c"/><path d="M383 398l4 2 2 3-5-1z" fill="#0071ff"/><path d="M581 363l4-5 2 1-4 6z" fill="#00f9ff"/><path d="M528 409l4-3 2 2-5 3z" fill="#0056ff"/><path d="M550 394l4-5 2 2-4 4z" fill="#008eff"/><path d="M336 349l4 3 1 5-4-4z" fill="#00ffe7"/><path d="M477 428l4-1 2 2-5 1z" fill="#0013ff"/><path d="M419 420l4 0 1 3-4 0z" fill="#002bff"/><path d="M491 425l4-2 2 2-4 2z" fill="#001dff"/><path d="M429 424l4 0 1 2-4 0z" fill="#001fff"/><path d="M409 415l4 1 1 3-4-1z" fill="#0039ff"/><path d="M463 429l4-1 1 2-4 1z" fill="#000fff"/><path d="M577 368l4-5 2 2-4 5z" fill="#00e8ff"/><path d="M298 291l5 6 1 5-5-6z" fill="#00ff24"/><path d="M439 426l4 0 1 3-4 0z" fill="#0016ff"/><path d="M399 410l4 1 1 3-4-1z" fill="#004cff"/><path d="M357 375l5 3 1 4-4-3z" fill="#00c0ff"/><path d="M320 327l4 4 2 5-5-5z" fill="#00ff9c"/><path d="M373 390l4 2 2 4-5-2z" fill="#008cff"/><path d="M546 397l4-3 2 1-4 4z" fill="#0081ff"/><path d="M505 421l4-2 2 2-4 2z" fill="#002dff"/><path d="M523 413l5-4 1 2-4 3z" fill="#004cff"/><path d="M573 373l4-5 2 2-4 5z" fill="#00d7ff"/><path d="M341 357l5 3 1 4-4-3z" fill="#00fdff"/><path d="M448 429l5-1 1 3-4 0z" fill="#0011ff"/><path d="M389 403l4 2 1 3-4-1z" fill="#0061ff"/><path d="M304 302l4 5 1 5-4-5z" fill="#00ff47"/><path d="M473 429l4-1 1 2-4 1z" fill="#0010ff"/><path d="M487 427l4-2 2 2-5 2z" fill="#0019ff"/><path d="M542 401l4-4 2 2-4 4z" fill="#0075ff"/><path d="M569 378l4-5 2 2-4 4z" fill="#00c7ff"/><path d="M326 336l4 4 1 5-4-5z" fill="#00ffba"/><path d="M519 415l4-2 2 1-4 3z" fill="#0043ff"/><path d="M363 382l4 2 2 4-5-3z" fill="#00aaff"/><path d="M458 430l5-1 1 2-4 1z" fill="#000eff"/><path d="M501 423l4-2 2 2-4 2z" fill="#0027ff"/><path d="M600 342l4-6 2 1-4 6z" fill="#00ffb8"/><path d="M347 364l5 4 1 4-5-3z" fill="#00e4ff"/><path d="M379 396l4 2 1 4-4-2z" fill="#007aff"/><path d="M424 423l5 1 1 2-4 0z" fill="#0022ff"/><path d="M414 419l5 1 1 3-4-1z" fill="#002fff"/><path d="M564 383l5-5 2 1-5 5z" fill="#00b7ff"/><path d="M434 426l5 0 1 3-4 0z" fill="#0018ff"/><path d="M404 414l5 1 1 3-4-1z" fill="#003fff"/><path d="M538 405l4-4 2 2-4 3z" fill="#006aff"/><path d="M309 312l5 5 1 5-4-5z" fill="#00ff69"/><path d="M595 348l5-6 2 1-4 6z" fill="#00ffcc"/><path d="M331 345l5 4 1 4-5-4z" fill="#00ffd7"/><path d="M444 429l4 0 2 2-4 0z" fill="#0011ff"/><path d="M483 429l4-2 1 2-4 2z" fill="#0015ff"/><path d="M560 387l4-4 2 1-4 4z" fill="#00a9ff"/><path d="M394 408l5 2 1 3-4-1z" fill="#0052ff"/><path d="M515 418l4-3 2 2-4 3z" fill="#003bff"/><path d="M468 430l5-1 1 2-4 1z" fill="#000eff"/><path d="M591 354l4-6 3 1-5 6z" fill="#00ffe0"/><path d="M293 286l5 5 1 5-5-5z" fill="#00ff0e"/><path d="M369 388l4 2 1 4-4-2z" fill="#0096ff"/><path d="M497 425l4-2 2 2-4 2z" fill="#0021ff"/><path d="M353 372l4 3 2 4-5-3z" fill="#00ccff"/><path d="M534 408l4-3 2 1-5 4z" fill="#005fff"/><path d="M315 322l5 5 1 4-5-4z" fill="#00ff8a"/><path d="M454 431l4-1 2 2-4 1z" fill="#000dff"/><path d="M556 391l4-4 2 1-4 5z" fill="#009bff"/><path d="M587 359l4-5 2 1-4 6z" fill="#00fff3"/><path d="M384 402l5 1 1 4-4-2z" fill="#0069ff"/><path d="M337 353l4 4 2 4-5-4z" fill="#00fff2"/><path d="M511 421l4-3 2 2-4 2z" fill="#0034ff"/><path d="M420 423l4 0 2 3-4-1z" fill="#0026ff"/><path d="M583 365l4-6 2 2-4 5z" fill="#00f9ff"/><path d="M299 296l5 6 1 5-5-6z" fill="#00ff32"/><path d="M529 411l5-3 1 2-4 3z" fill="#0055ff"/><path d="M410 418l4 1 2 3-4-1z" fill="#0034ff"/><path d="M430 426l4 0 2 3-4 0z" fill="#001bff"/><path d="M478 430l5-1 1 2-4 1z" fill="#0012ff"/><path d="M552 395l4-4 2 2-4 4z" fill="#008dff"/><path d="M321 331l5 5 1 4-5-4z" fill="#00ffa9"/><path d="M359 379l4 3 1 3-4-2z" fill="#00b6ff"/><path d="M493 427l4-2 2 2-5 2z" fill="#001cff"/><path d="M374 394l5 2 1 4-4-2z" fill="#0083ff"/><path d="M464 431l4-1 2 2-4 1z" fill="#000dff"/><path d="M400 413l4 1 2 3-5-1z" fill="#0045ff"/><path d="M440 429l4 0 2 2-4 0z" fill="#0013ff"/><path d="M579 370l4-5 2 1-4 5z" fill="#00e7ff"/><path d="M343 361l4 3 1 5-4-4z" fill="#00f2ff"/><path d="M548 399l4-4 2 2-4 3z" fill="#0081ff"/><path d="M507 423l4-2 2 1-4 3z" fill="#002dff"/><path d="M390 407l4 1 2 4-5-2z" fill="#005aff"/><path d="M305 307l4 5 2 5-5-5z" fill="#00ff55"/><path d="M525 414l4-3 2 2-4 3z" fill="#004cff"/><path d="M450 431l4 0 2 2-4 0z" fill="#000eff"/><path d="M575 375l4-5 2 1-4 5z" fill="#00d7ff"/><path d="M327 340l4 5 1 4-4-4z" fill="#00ffc7"/><path d="M364 385l5 3 1 4-5-3z" fill="#00a1ff"/><path d="M474 431l4-1 2 2-4 1z" fill="#000fff"/><path d="M488 429l5-2 1 2-4 2z" fill="#0018ff"/><path d="M348 369l5 3 1 4-4-3z" fill="#00d9ff"/><path d="M571 379l4-4 2 1-4 5z" fill="#00c7ff"/><path d="M544 403l4-4 2 1-4 4z" fill="#0075ff"/><path d="M380 400l4 2 2 3-5-2z" fill="#0072ff"/><path d="M311 317l4 5 1 5-4-5z" fill="#00ff77"/><path d="M460 432l4-1 2 2-4 1z" fill="#000cff"/><path d="M416 422l4 1 2 2-5 0z" fill="#002aff"/><path d="M521 417l4-3 2 2-4 2z" fill="#0043ff"/><path d="M426 426l4 0 2 3-5-1z" fill="#001eff"/><path d="M503 425l4-2 2 2-5 2z" fill="#0026ff"/><path d="M332 349l5 4 1 4-4-4z" fill="#00ffe3"/><path d="M406 417l4 1 2 3-5-1z" fill="#003aff"/><path d="M602 343l4-6 2 1-4 6z" fill="#00ffb8"/><path d="M436 429l4 0 2 2-5 0z" fill="#0015ff"/><path d="M566 384l5-5 2 2-5 4z" fill="#00b7ff"/><path d="M540 406l4-3 2 1-5 4z" fill="#006aff"/><path d="M396 412l4 1 1 3-4-1z" fill="#004cff"/><path d="M598 349l4-6 2 1-4 6z" fill="#00ffcc"/><path d="M294 291l5 5 1 5-5-5z" fill="#00ff1c"/><path d="M370 392l4 2 2 4-5-3z" fill="#008eff"/><path d="M354 376l5 3 1 4-5-3z" fill="#00c2ff"/><path d="M446 431l4 0 2 2-5 0z" fill="#000fff"/><path d="M316 327l5 4 1 5-4-5z" fill="#00ff97"/><path d="M484 431l4-2 2 2-4 1z" fill="#0014ff"/><path d="M562 388l4-4 2 1-4 5z" fill="#00a9ff"/><path d="M517 420l4-3 2 1-4 3z" fill="#003bff"/><path d="M470 432l4-1 2 2-4 1z" fill="#000dff"/><path d="M338 357l5 4 1 4-5-4z" fill="#00fffd"/><path d="M593 355l5-6 2 1-4 6z" fill="#00ffe0"/><path d="M386 405l4 2 1 3-4-2z" fill="#0062ff"/><path d="M499 427l4-2 1 2-4 2z" fill="#0021ff"/><path d="M535 410l5-4 1 2-4 3z" fill="#005fff"/><path d="M456 433l4-1 2 2-5 1z" fill="#000cff"/><path d="M589 361l4-6 3 1-5 6z" fill="#00fff3"/><path d="M300 301l5 6 1 5-5-6z" fill="#00ff40"/><path d="M558 393l4-5 2 2-4 4z" fill="#009bff"/><path d="M322 336l5 4 1 5-5-5z" fill="#00ffb5"/><path d="M360 383l4 2 1 4-4-3z" fill="#00adff"/><path d="M422 425l4 1 1 2-4 0z" fill="#0022ff"/><path d="M412 421l4 1 1 3-4-1z" fill="#002fff"/><path d="M376 398l4 2 1 3-4-2z" fill="#007cff"/><path d="M513 422l4-2 2 1-4 3z" fill="#0034ff"/><path d="M432 429l4 0 1 2-4 0z" fill="#0017ff"/><path d="M344 365l4 4 2 4-5-4z" fill="#00e8ff"/><path d="M585 366l4-5 2 1-4 5z" fill="#00f9ff"/><path d="M401 416l5 1 1 3-4-1z" fill="#0040ff"/><path d="M531 413l4-3 2 1-4 3z" fill="#0055ff"/><path d="M480 432l4-1 2 1-4 2z" fill="#0011ff"/><path d="M554 397l4-4 2 1-4 4z" fill="#008eff"/><path d="M466 433l4-1 2 2-5 1z" fill="#000bff"/><path d="M442 431l4 0 1 2-4 0z" fill="#0010ff"/><path d="M494 429l5-2 1 2-4 1z" fill="#001cff"/><path d="M306 312l5 5 1 5-5-6z" fill="#00ff62"/><path d="M581 371l4-5 2 1-4 5z" fill="#00e8ff"/><path d="M328 345l4 4 2 4-5-4z" fill="#00ffd2"/><path d="M391 410l5 2 1 3-4-2z" fill="#0054ff"/><path d="M365 389l5 3 1 3-4-2z" fill="#0099ff"/><path d="M550 400l4-3 2 1-4 4z" fill="#0081ff"/><path d="M452 433l4 0 1 2-4 0z" fill="#000cff"/><path d="M509 425l4-3 2 2-5 2z" fill="#002dff"/><path d="M350 373l4 3 1 4-4-4z" fill="#00d0ff"/><path d="M527 416l4-3 2 1-4 3z" fill="#004cff"/><path d="M577 376l4-5 2 1-4 5z" fill="#00d7ff"/><path d="M381 403l5 2 1 3-4-2z" fill="#006cff"/><path d="M312 322l4 5 2 4-5-5z" fill="#00ff83"/><path d="M334 353l4 4 1 4-4-4z" fill="#00ffed"/><path d="M476 433l4-1 2 2-4 1z" fill="#000eff"/><path d="M490 431l4-2 2 1-4 2z" fill="#0018ff"/><path d="M417 425l5 0 1 3-4-1z" fill="#0026ff"/><path d="M573 381l4-5 2 1-4 5z" fill="#00c7ff"/><path d="M546 404l4-4 2 2-4 3z" fill="#0076ff"/><path d="M427 428l5 1 1 2-4 0z" fill="#001bff"/><path d="M407 420l5 1 1 3-4-1z" fill="#0035ff"/><path d="M462 434l4-1 1 2-4 1z" fill="#000bff"/><path d="M523 418l4-2 2 1-4 3z" fill="#0044ff"/><path d="M295 296l5 5 1 5-4-6z" fill="#00ff2a"/><path d="M437 431l5 0 1 2-4 0z" fill="#0012ff"/><path d="M604 344l4-6 2 1-4 6z" fill="#00ffb7"/><path d="M504 427l5-2 1 1-4 2z" fill="#0027ff"/><path d="M355 380l5 3 1 3-4-3z" fill="#00baff"/><path d="M397 415l4 1 2 3-4-2z" fill="#0047ff"/><path d="M371 395l5 3 1 3-4-3z" fill="#0087ff"/><path d="M318 331l4 5 1 4-4-4z" fill="#00ffa3"/><path d="M568 385l5-4 2 1-5 4z" fill="#00b8ff"/><path d="M339 361l5 4 1 4-4-4z" fill="#00f7ff"/><path d="M541 408l5-4 2 1-5 4z" fill="#006bff"/><path d="M600 350l4-6 2 1-4 6z" fill="#00ffcc"/><path d="M447 433l5 0 1 2-4 0z" fill="#000dff"/><path d="M387 408l4 2 2 3-5-2z" fill="#005dff"/><path d="M486 432l4-1 2 1-4 2z" fill="#0014ff"/><path d="M472 434l4-1 2 2-5 1z" fill="#000cff"/><path d="M564 390l4-5 2 1-4 4z" fill="#00aaff"/><path d="M301 306l5 6 1 4-5-5z" fill="#00ff4d"/><path d="M519 421l4-3 2 2-4 2z" fill="#003cff"/><path d="M596 356l4-6 2 1-4 6z" fill="#00ffdf"/><path d="M323 340l5 5 1 4-5-4z" fill="#00ffc0"/><path d="M500 429l4-2 2 1-4 2z" fill="#0021ff"/><path d="M361 386l4 3 2 4-5-3z" fill="#00a5ff"/><path d="M537 411l4-3 2 1-4 3z" fill="#0060ff"/><path d="M457 435l5-1 1 2-4 0z" fill="#000bff"/><path d="M345 369l5 4 1 3-5-3z" fill="#00deff"/><path d="M377 401l4 2 2 3-5-2z" fill="#0076ff"/><path d="M591 362l5-6 2 1-4 5z" fill="#00fff2"/><path d="M413 424l4 1 2 2-5-1z" fill="#002cff"/><path d="M423 428l4 0 2 3-5-1z" fill="#001fff"/><path d="M560 394l4-4 2 0-4 5z" fill="#009cff"/><path d="M403 419l4 1 2 3-5-2z" fill="#003cff"/><path d="M433 431l4 0 2 2-4 0z" fill="#0015ff"/><path d="M307 316l5 6 1 4-5-5z" fill="#00ff6f"/><path d="M329 349l5 4 1 4-5-4z" fill="#00ffdd"/><path d="M515 424l4-3 2 1-5 3z" fill="#0035ff"/><path d="M587 367l4-5 3 0-5 6z" fill="#00faff"/><path d="M482 434l4-2 2 2-5 1z" fill="#0011ff"/><path d="M533 414l4-3 2 1-4 3z" fill="#0057ff"/><path d="M393 413l4 2 2 2-5-1z" fill="#004fff"/><path d="M443 433l4 0 2 2-4 0z" fill="#000fff"/><path d="M556 398l4-4 2 1-4 4z" fill="#008fff"/><path d="M467 435l5-1 1 2-4 1z" fill="#000bff"/><path d="M496 430l4-1 2 1-4 2z" fill="#001dff"/><path d="M367 393l4 2 2 3-5-2z" fill="#0092ff"/><path d="M351 376l4 4 2 3-5-3z" fill="#00c7ff"/><path d="M583 372l4-5 2 1-4 5z" fill="#00e9ff"/><path d="M313 326l5 5 1 5-5-5z" fill="#00ff8f"/><path d="M383 406l4 2 1 3-4-2z" fill="#0066ff"/><path d="M335 357l4 4 2 4-5-4z" fill="#00fff7"/><path d="M453 435l4 0 2 1-4 1z" fill="#000bff"/><path d="M552 402l4-4 2 1-4 3z" fill="#0083ff"/><path d="M510 426l5-2 1 1-4 2z" fill="#002eff"/><path d="M529 417l4-3 2 1-4 3z" fill="#004eff"/><path d="M579 377l4-5 2 1-4 5z" fill="#00d9ff"/><path d="M419 427l4 1 1 2-4-1z" fill="#0024ff"/><path d="M297 300l4 6 1 5-4-6z" fill="#00ff37"/><path d="M478 435l4-1 1 1-4 1z" fill="#000fff"/><path d="M409 423l4 1 1 2-4-1z" fill="#0032ff"/><path d="M319 336l4 4 1 5-4-5z" fill="#00ffae"/><path d="M357 383l4 3 1 4-4-3z" fill="#00b2ff"/><path d="M429 431l4 0 2 2-5 0z" fill="#0019ff"/><path d="M492 432l4-2 2 2-4 1z" fill="#0019ff"/><path d="M373 398l4 3 1 3-4-3z" fill="#0080ff"/><path d="M575 382l4-5 2 1-4 4z" fill="#00c9ff"/><path d="M548 405l4-3 2 0-4 4z" fill="#0078ff"/><path d="M463 436l4-1 2 2-4 0z" fill="#000bff"/><path d="M399 417l4 2 1 2-4-1z" fill="#0043ff"/><path d="M341 365l4 4 1 4-4-4z" fill="#00edff"/><path d="M439 433l4 0 2 2-5 0z" fill="#0011ff"/><path d="M606 345l4-6 3 1-5 6z" fill="#00ffb6"/><path d="M525 420l4-3 2 1-4 3z" fill="#0045ff"/><path d="M506 428l4-2 2 1-4 2z" fill="#0028ff"/><path d="M570 386l5-4 2 0-4 5z" fill="#00baff"/><path d="M388 411l5 2 1 3-4-2z" fill="#0058ff"/><path d="M302 311l5 5 1 5-4-6z" fill="#00ff5a"/><path d="M324 345l5 4 1 4-4-4z" fill="#00ffcb"/><path d="M449 435l4 0 2 2-4 0z" fill="#000cff"/><path d="M602 351l4-6 2 1-4 6z" fill="#00ffca"/><path d="M543 409l5-4 2 1-5 3z" fill="#006dff"/><path d="M362 390l5 3 1 3-4-3z" fill="#009eff"/><path d="M346 373l5 3 1 4-4-4z" fill="#00d6ff"/><path d="M488 434l4-2 2 1-5 2z" fill="#0015ff"/><path d="M473 436l5-1 1 1-4 1z" fill="#000dff"/><path d="M566 390l4-4 3 1-5 4z" fill="#00acff"/><path d="M598 357l4-6 2 1-4 5z" fill="#00ffdd"/><path d="M521 422l4-2 2 1-5 2z" fill="#003eff"/><path d="M378 404l5 2 1 3-4-2z" fill="#0070ff"/><path d="M308 321l5 5 1 5-5-6z" fill="#00ff7b"/><path d="M502 430l4-2 2 1-4 2z" fill="#0023ff"/><path d="M459 436l4 0 2 1-4 1z" fill="#000bff"/><path d="M330 353l5 4 1 4-5-4z" fill="#00ffe7"/><path d="M414 426l5 1 1 2-4-1z" fill="#0029ff"/><path d="M424 430l5 1 1 2-4-1z" fill="#001dff"/><path d="M539 412l4-3 2 0-4 4z" fill="#0063ff"/><path d="M404 421l5 2 1 2-4-1z" fill="#0039ff"/><path d="M594 362l4-5 2 0-4 6z" fill="#00ffef"/><path d="M562 395l4-5 2 1-4 4z" fill="#009fff"/><path d="M435 433l4 0 1 2-4 0z" fill="#0014ff"/><path d="M394 416l5 1 1 3-4-2z" fill="#004bff"/><path d="M352 380l5 3 1 4-5-4z" fill="#00c0ff"/><path d="M368 396l5 2 1 3-5-2z" fill="#008cff"/><path d="M589 368l5-6 2 1-5 5z" fill="#00fdff"/><path d="M314 331l5 5 1 4-5-5z" fill="#00ff9b"/><path d="M516 425l5-3 1 1-4 2z" fill="#0037ff"/><path d="M445 435l4 0 2 2-5 0z" fill="#000eff"/><path d="M483 435l5-1 1 1-4 1z" fill="#0012ff"/><path d="M336 361l5 4 1 4-5-4z" fill="#00fdff"/><path d="M535 415l4-3 2 1-4 3z" fill="#0059ff"/><path d="M469 437l4-1 2 1-4 1z" fill="#000cff"/><path d="M558 399l4-4 2 0-4 4z" fill="#0092ff"/><path d="M384 409l4 2 2 3-5-2z" fill="#0061ff"/><path d="M498 432l4-2 2 1-4 2z" fill="#001eff"/><path d="M585 373l4-5 2 0-4 5z" fill="#00ecff"/><path d="M298 305l4 6 2 4-5-6z" fill="#00ff44"/><path d="M455 437l4-1 2 2-5 0z" fill="#000bff"/><path d="M320 340l4 5 2 4-5-5z" fill="#00ffb9"/><path d="M358 387l4 3 2 3-5-3z" fill="#00abff"/><path d="M554 402l4-3 2 0-4 4z" fill="#0086ff"/><path d="M512 427l4-2 2 0-4 3z" fill="#0030ff"/><path d="M581 378l4-5 2 0-4 5z" fill="#00dcff"/><path d="M531 418l4-3 2 1-4 2z" fill="#0050ff"/><path d="M420 429l4 1 2 2-4-1z" fill="#0022ff"/><path d="M342 369l4 4 2 3-5-3z" fill="#00e5ff"/><path d="M374 401l4 3 2 3-5-3z" fill="#007bff"/><path d="M410 425l4 1 2 2-5-1z" fill="#002fff"/><path d="M430 433l5 0 1 2-4-1z" fill="#0018ff"/><path d="M400 420l4 1 2 3-5-2z" fill="#0040ff"/><path d="M479 436l4-1 2 1-4 1z" fill="#0010ff"/><path d="M494 433l4-1 2 1-5 1z" fill="#001aff"/><path d="M304 315l4 6 1 4-4-5z" fill="#00ff66"/><path d="M577 382l4-4 2 0-4 5z" fill="#00ccff"/><path d="M465 437l4 0 2 1-4 0z" fill="#000cff"/><path d="M326 349l4 4 1 4-4-4z" fill="#00ffd5"/><path d="M440 435l5 0 1 2-4 0z" fill="#0011ff"/><path d="M550 406l4-4 2 1-4 3z" fill="#007aff"/><path d="M390 414l4 2 2 2-5-2z" fill="#0054ff"/><path d="M608 346l5-6 2 0-4 6z" fill="#00ffb3"/><path d="M527 421l4-3 2 0-4 3z" fill="#0048ff"/><path d="M364 393l4 3 1 3-4-3z" fill="#0098ff"/><path d="M508 429l4-2 2 1-4 2z" fill="#002bff"/><path d="M348 376l4 4 1 3-4-3z" fill="#00ceff"/><path d="M573 387l4-5 2 1-4 4z" fill="#00bdff"/><path d="M451 437l4 0 1 1-4 0z" fill="#000dff"/><path d="M604 352l4-6 3 0-5 6z" fill="#00ffc7"/><path d="M309 325l5 6 1 4-5-6z" fill="#00ff86"/><path d="M380 407l4 2 1 3-4-3z" fill="#006bff"/><path d="M545 409l5-3 2 0-5 4z" fill="#0070ff"/><path d="M331 357l5 4 1 4-4-4z" fill="#00fff0"/><path d="M475 437l4-1 2 1-4 1z" fill="#000fff"/><path d="M489 435l5-2 1 1-4 2z" fill="#0017ff"/><path d="M600 357l4-5 2 0-4 6z" fill="#00ffda"/><path d="M568 391l5-4 2 0-5 5z" fill="#00afff"/><path d="M416 428l4 1 2 2-5-1z" fill="#0028ff"/><path d="M522 423l5-2 2 0-5 3z" fill="#0041ff"/><path d="M426 432l4 1 2 1-5-1z" fill="#001cff"/><path d="M406 424l4 1 1 2-4-1z" fill="#0036ff"/><path d="M461 438l4-1 2 1-5 1z" fill="#000cff"/><path d="M504 431l4-2 2 1-4 2z" fill="#0026ff"/><path d="M353 383l5 4 1 3-4-4z" fill="#00b9ff"/><path d="M315 335l5 5 1 4-5-5z" fill="#00ffa5"/><path d="M369 399l5 2 1 3-4-3z" fill="#0086ff"/><path d="M541 413l4-4 2 1-4 3z" fill="#0066ff"/><path d="M596 363l4-6 2 1-4 5z" fill="#00ffec"/><path d="M436 435l4 0 2 2-4-1z" fill="#0014ff"/><path d="M396 418l4 2 1 2-4-2z" fill="#0048ff"/><path d="M337 365l5 4 1 4-5-5z" fill="#00f5ff"/><path d="M564 395l4-4 2 1-4 4z" fill="#00a2ff"/><path d="M591 368l5-5 2 0-4 5z" fill="#00fffe"/><path d="M385 412l5 2 1 2-4-2z" fill="#005eff"/><path d="M446 437l5 0 1 1-4 0z" fill="#000fff"/><path d="M518 425l4-2 2 1-4 2z" fill="#003aff"/><path d="M299 309l5 6 1 5-5-6z" fill="#00ff50"/><path d="M485 436l4-1 2 1-4 1z" fill="#0015ff"/><path d="M321 344l5 5 1 4-5-5z" fill="#00ffc2"/><path d="M471 438l4-1 2 1-5 1z" fill="#000eff"/><path d="M537 416l4-3 2 0-4 3z" fill="#005cff"/><path d="M560 399l4-4 2 1-4 3z" fill="#0095ff"/><path d="M359 390l5 3 1 3-5-3z" fill="#00a5ff"/><path d="M500 433l4-2 2 1-5 1z" fill="#0021ff"/><path d="M587 373l4-5 3 0-5 5z" fill="#00efff"/><path d="M343 373l5 3 1 4-5-4z" fill="#00ddff"/><path d="M375 404l5 3 1 2-5-2z" fill="#0076ff"/><path d="M456 438l5 0 1 1-4 0z" fill="#000dff"/><path d="M411 427l5 1 1 2-4-1z" fill="#002eff"/><path d="M305 320l4 5 1 4-4-5z" fill="#00ff71"/><path d="M422 431l4 1 1 1-4 0z" fill="#0021ff"/><path d="M556 403l4-4 2 0-4 4z" fill="#0089ff"/><path d="M327 353l4 4 2 4-5-5z" fill="#00ffde"/><path d="M583 378l4-5 2 0-4 5z" fill="#00dfff"/><path d="M514 428l4-3 2 1-4 2z" fill="#0034ff"/><path d="M401 422l5 2 1 2-4-2z" fill="#003eff"/><path d="M533 418l4-2 2 0-4 3z" fill="#0054ff"/><path d="M432 434l4 1 2 1-5 0z" fill="#0018ff"/><path d="M481 437l4-1 2 1-4 1z" fill="#0013ff"/><path d="M391 416l5 2 1 2-5-2z" fill="#0051ff"/><path d="M349 380l4 3 2 3-5-3z" fill="#00c7ff"/><path d="M365 396l4 3 2 2-5-2z" fill="#0093ff"/><path d="M442 437l4 0 2 1-5 0z" fill="#0012ff"/><path d="M495 434l5-1 1 0-4 2z" fill="#001dff"/><path d="M579 383l4-5 2 0-4 5z" fill="#00d0ff"/><path d="M467 438l4 0 1 1-4 0z" fill="#000dff"/><path d="M310 329l5 6 1 4-4-6z" fill="#00ff91"/><path d="M552 406l4-3 2 0-4 4z" fill="#007eff"/><path d="M611 346l4-6 2 0-4 6z" fill="#00ffaf"/><path d="M333 361l4 4 1 3-4-4z" fill="#00fff8"/><path d="M381 409l4 3 2 2-5-2z" fill="#0068ff"/><path d="M529 421l4-3 2 1-4 2z" fill="#004cff"/><path d="M510 430l4-2 2 0-4 2z" fill="#002eff"/><path d="M575 387l4-4 2 0-4 4z" fill="#00c1ff"/><path d="M452 438l4 0 2 1-4 0z" fill="#000eff"/><path d="M606 352l5-6 2 0-4 6z" fill="#00ffc3"/><path d="M547 410l5-4 2 1-5 3z" fill="#0074ff"/><path d="M316 339l5 5 1 4-5-5z" fill="#00ffaf"/><path d="M355 386l4 4 1 3-4-4z" fill="#00b3ff"/><path d="M417 430l5 1 1 2-4-1z" fill="#0027ff"/><path d="M477 438l4-1 2 1-5 1z" fill="#0011ff"/><path d="M602 358l4-6 3 0-5 6z" fill="#00ffd6"/><path d="M407 426l4 1 2 2-4-2z" fill="#0035ff"/><path d="M491 436l4-2 2 1-4 1z" fill="#001aff"/><path d="M371 401l4 3 1 3-4-3z" fill="#0082ff"/><path d="M338 368l5 5 1 3-4-4z" fill="#00eeff"/><path d="M570 392l5-5 2 0-4 5z" fill="#00b3ff"/><path d="M427 433l5 1 1 2-4-1z" fill="#001cff"/><path d="M524 424l5-3 2 0-5 3z" fill="#0045ff"/><path d="M397 420l4 2 2 2-5-2z" fill="#0046ff"/><path d="M462 439l5-1 1 1-4 1z" fill="#000eff"/><path d="M506 432l4-2 2 0-5 2z" fill="#0029ff"/><path d="M438 436l4 1 1 1-4-1z" fill="#0015ff"/><path d="M598 363l4-5 2 0-4 5z" fill="#00ffe8"/><path d="M300 314l5 6 1 4-5-6z" fill="#00ff5b"/><path d="M543 413l4-3 2 0-4 3z" fill="#006aff"/><path d="M322 348l5 5 1 3-5-5z" fill="#00ffcb"/><path d="M387 414l4 2 1 2-4-2z" fill="#005bff"/><path d="M566 396l4-4 3 0-5 4z" fill="#00a6ff"/><path d="M360 393l5 3 1 3-4-4z" fill="#00a0ff"/><path d="M594 368l4-5 2 0-4 5z" fill="#00fffa"/><path d="M448 438l4 0 2 1-5 0z" fill="#0010ff"/><path d="M344 376l5 4 1 3-5-4z" fill="#00d7ff"/><path d="M520 426l4-2 2 0-4 2z" fill="#003eff"/><path d="M487 437l4-1 2 0-4 1z" fill="#0018ff"/><path d="M306 324l4 5 2 4-5-5z" fill="#00ff7b"/><path d="M472 439l5-1 1 1-4 0z" fill="#0011ff"/><path d="M376 407l5 2 1 3-4-3z" fill="#0073ff"/><path d="M539 416l4-3 2 0-4 3z" fill="#0061ff"/><path d="M562 399l4-3 2 0-4 4z" fill="#009aff"/><path d="M328 356l5 5 1 3-5-4z" fill="#00ffe6"/><path d="M589 373l5-5 2 0-4 5z" fill="#00f4ff"/><path d="M501 433l5-1 1 0-4 2z" fill="#0025ff"/><path d="M413 429l4 1 2 2-5-2z" fill="#002eff"/><path d="M458 439l4 0 2 1-4 0z" fill="#000fff"/><path d="M423 433l4 0 2 2-4-1z" fill="#0022ff"/><path d="M403 424l4 2 2 1-5-1z" fill="#003dff"/><path d="M350 383l5 3 1 3-5-3z" fill="#00c1ff"/><path d="M585 378l4-5 3 0-5 5z" fill="#00e4ff"/><path d="M433 436l5 0 1 1-4 0z" fill="#0019ff"/><path d="M312 333l4 6 1 4-4-6z" fill="#00ff9a"/><path d="M558 403l4-4 2 1-4 3z" fill="#008eff"/><path d="M366 399l5 2 1 3-5-3z" fill="#008eff"/><path d="M392 418l5 2 1 2-4-2z" fill="#004fff"/><path d="M516 428l4-2 2 0-4 2z" fill="#0038ff"/><path d="M535 419l4-3 2 0-4 3z" fill="#0058ff"/><path d="M334 364l4 4 2 4-5-5z" fill="#00ffff"/><path d="M483 438l4-1 2 0-5 1z" fill="#0016ff"/><path d="M443 438l5 0 1 1-4 0z" fill="#0013ff"/><path d="M581 383l4-5 2 0-4 5z" fill="#00d5ff"/><path d="M468 439l4 0 2 0-4 1z" fill="#0010ff"/><path d="M497 435l4-2 2 1-4 1z" fill="#0021ff"/><path d="M382 412l5 2 1 2-4-2z" fill="#0065ff"/><path d="M613 346l4-6 2 0-4 6z" fill="#00ffab"/><path d="M554 407l4-4 2 0-4 4z" fill="#0083ff"/><path d="M317 343l5 5 1 3-4-5z" fill="#00ffb8"/><path d="M356 389l4 4 2 2-5-3z" fill="#00aeff"/><path d="M531 421l4-2 2 0-5 3z" fill="#0051ff"/><path d="M454 439l4 0 2 1-5 0z" fill="#0011ff"/><path d="M512 430l4-2 2 0-4 2z" fill="#0033ff"/><path d="M609 352l4-6 2 0-4 6z" fill="#00ffbe"/><path d="M577 387l4-4 2 0-4 4z" fill="#00c6ff"/><path d="M340 372l4 4 1 3-4-4z" fill="#00e7ff"/><path d="M372 404l4 3 2 2-5-3z" fill="#007fff"/><path d="M419 432l4 1 2 1-5-1z" fill="#0028ff"/><path d="M409 427l4 2 1 1-4-1z" fill="#0035ff"/><path d="M549 410l5-3 2 0-5 3z" fill="#0079ff"/><path d="M301 318l5 6 1 4-5-6z" fill="#00ff65"/><path d="M604 358l5-6 2 0-4 6z" fill="#00ffd1"/><path d="M323 351l5 5 1 4-5-5z" fill="#00ffd3"/><path d="M429 435l4 1 2 1-5-1z" fill="#001eff"/><path d="M398 422l5 2 1 2-4-2z" fill="#0045ff"/><path d="M478 439l5-1 1 0-4 1z" fill="#0015ff"/><path d="M573 392l4-5 2 0-4 4z" fill="#00b8ff"/><path d="M493 436l4-1 2 0-4 1z" fill="#001eff"/><path d="M464 440l4-1 2 1-4 0z" fill="#0011ff"/><path d="M526 424l5-3 1 1-4 2z" fill="#0049ff"/><path d="M388 416l4 2 2 2-5-2z" fill="#0059ff"/><path d="M439 437l4 1 2 1-4-1z" fill="#0017ff"/><path d="M600 363l4-5 3 0-5 5z" fill="#00ffe3"/><path d="M345 379l5 4 1 3-4-4z" fill="#00d1ff"/><path d="M362 395l4 4 1 2-4-3z" fill="#009cff"/><path d="M507 432l5-2 2 0-5 2z" fill="#002eff"/><path d="M307 328l5 5 1 4-5-6z" fill="#00ff85"/><path d="M545 413l4-3 2 0-4 3z" fill="#006fff"/><path d="M568 396l5-4 2-1-5 4z" fill="#00abff"/><path d="M329 360l5 4 1 3-5-4z" fill="#00ffed"/><path d="M378 409l4 3 2 2-5-3z" fill="#0070ff"/><path d="M449 439l5 0 1 1-4 0z" fill="#0013ff"/><path d="M596 368l4-5 2 0-4 5z" fill="#00fff5"/><path d="M522 426l4-2 2 0-4 2z" fill="#0043ff"/><path d="M489 437l4-1 2 0-5 2z" fill="#001cff"/><path d="M474 439l4 0 2 0-4 1z" fill="#0014ff"/><path d="M313 337l4 6 2 3-5-5z" fill="#00ffa3"/><path d="M564 400l4-4 2-1-4 4z" fill="#009fff"/><path d="M541 416l4-3 2 0-4 3z" fill="#0066ff"/><path d="M592 373l4-5 2 0-4 5z" fill="#00f9ff"/><path d="M351 386l5 3 1 3-5-4z" fill="#00bdff"/><path d="M414 430l5 2 1 1-4-2z" fill="#002eff"/><path d="M404 426l5 1 1 2-4-2z" fill="#003dff"/><path d="M503 434l4-2 2 0-4 2z" fill="#002aff"/><path d="M425 434l4 1 1 1-4-1z" fill="#0023ff"/><path d="M367 401l5 3 1 2-4-3z" fill="#008bff"/><path d="M335 367l5 5 1 3-5-5z" fill="#00f8ff"/><path d="M460 440l4 0 2 0-5 0z" fill="#0012ff"/><path d="M394 420l4 2 2 2-5-2z" fill="#004eff"/><path d="M435 437l4 0 2 1-5 0z" fill="#001bff"/><path d="M587 378l5-5 2 0-4 5z" fill="#00e9ff"/><path d="M560 403l4-3 2-1-4 4z" fill="#0094ff"/><path d="M319 346l4 5 1 4-4-5z" fill="#00ffc0"/><path d="M518 428l4-2 2 0-4 2z" fill="#003dff"/><path d="M537 419l4-3 2 0-4 3z" fill="#005eff"/><path d="M384 414l4 2 1 2-4-3z" fill="#0064ff"/><path d="M445 439l4 0 2 1-4-1z" fill="#0016ff"/><path d="M484 438l5-1 1 1-4 0z" fill="#001bff"/><path d="M357 392l5 3 1 3-5-4z" fill="#00aaff"/><path d="M583 383l4-5 3 0-5 5z" fill="#00daff"/><path d="M615 346l4-6 3 0-5 6z" fill="#00ffa5"/><path d="M341 375l4 4 2 3-5-4z" fill="#00e1ff"/><path d="M470 440l4-1 2 1-4 0z" fill="#0014ff"/><path d="M499 435l4-1 2 0-4 1z" fill="#0026ff"/><path d="M556 407l4-4 2 0-4 3z" fill="#0089ff"/><path d="M302 322l5 6 1 3-5-6z" fill="#00ff6f"/><path d="M373 406l5 3 1 2-4-3z" fill="#007cff"/><path d="M324 355l5 5 1 3-4-5z" fill="#00ffdb"/><path d="M611 352l4-6 2 0-4 5z" fill="#00ffb9"/><path d="M455 440l5 0 1 0-4 0z" fill="#0014ff"/><path d="M532 422l5-3 2 0-5 2z" fill="#0056ff"/><path d="M579 387l4-4 2 0-4 4z" fill="#00ccff"/><path d="M514 430l4-2 2 0-5 2z" fill="#0038ff"/><path d="M410 429l4 1 2 1-5-1z" fill="#0035ff"/><path d="M420 433l5 1 1 1-4-1z" fill="#0029ff"/><path d="M400 424l4 2 2 1-5-2z" fill="#0045ff"/><path d="M430 436l5 1 1 1-4-1z" fill="#0020ff"/><path d="M607 358l4-6 2-1-4 6z" fill="#00ffcb"/><path d="M551 410l5-3 2-1-5 4z" fill="#007fff"/><path d="M347 382l4 4 1 2-4-4z" fill="#00ccff"/><path d="M308 331l5 6 1 4-5-6z" fill="#00ff8e"/><path d="M363 398l4 3 2 2-5-3z" fill="#0098ff"/><path d="M389 418l5 2 1 2-4-2z" fill="#0058ff"/><path d="M480 439l4-1 2 0-4 1z" fill="#001aff"/><path d="M575 391l4-4 2 0-4 4z" fill="#00beff"/><path d="M495 436l4-1 2 0-4 1z" fill="#0024ff"/><path d="M330 363l5 4 1 3-4-4z" fill="#00fff4"/><path d="M441 438l4 1 2 0-5 0z" fill="#001aff"/><path d="M466 440l4 0 2 0-5 1z" fill="#0015ff"/><path d="M528 424l4-2 2-1-4 3z" fill="#004fff"/><path d="M602 363l5-5 2-1-4 5z" fill="#00ffdd"/><path d="M379 411l5 3 1 1-5-2z" fill="#006fff"/><path d="M509 432l5-2 1 0-4 2z" fill="#0033ff"/><path d="M547 413l4-3 2 0-4 3z" fill="#0075ff"/><path d="M314 341l5 5 1 4-5-6z" fill="#00ffab"/><path d="M570 395l5-4 2 0-4 4z" fill="#00b2ff"/><path d="M598 368l4-5 3-1-5 6z" fill="#00ffee"/><path d="M451 440l4 0 2 0-4 0z" fill="#0017ff"/><path d="M352 388l5 4 1 2-4-3z" fill="#00b9ff"/><path d="M336 370l5 5 1 3-5-5z" fill="#00f2ff"/><path d="M369 403l4 3 2 2-5-3z" fill="#0089ff"/><path d="M524 426l4-2 2 0-4 2z" fill="#0049ff"/><path d="M416 431l4 2 2 1-5-2z" fill="#0030ff"/><path d="M490 438l5-2 2 0-5 1z" fill="#0022ff"/><path d="M476 440l4-1 2 0-4 1z" fill="#0019ff"/><path d="M406 427l4 2 1 1-4-2z" fill="#003dff"/><path d="M566 399l4-4 3 0-5 4z" fill="#00a6ff"/><path d="M594 373l4-5 2 0-4 5z" fill="#00ffff"/><path d="M543 416l4-3 2 0-4 3z" fill="#006cff"/><path d="M426 435l4 1 2 1-4-1z" fill="#0025ff"/><path d="M320 350l4 5 2 3-5-5z" fill="#00ffc7"/><path d="M395 422l5 2 1 1-4-2z" fill="#004eff"/><path d="M505 434l4-2 2 0-4 2z" fill="#0030ff"/><path d="M461 440l5 0 1 1-4 0z" fill="#0017ff"/><path d="M436 438l5 0 1 1-4-1z" fill="#001eff"/><path d="M385 415l4 3 2 2-5-3z" fill="#0063ff"/><path d="M590 378l4-5 2 0-4 4z" fill="#00f0ff"/><path d="M342 378l5 4 1 2-5-4z" fill="#00ddff"/><path d="M358 394l5 4 1 2-4-4z" fill="#00a7ff"/><path d="M562 403l4-4 2 0-4 3z" fill="#009aff"/><path d="M303 325l5 6 1 4-5-6z" fill="#00ff77"/><path d="M520 428l4-2 2 0-4 2z" fill="#0043ff"/><path d="M539 419l4-3 2 0-4 2z" fill="#0064ff"/><path d="M326 358l4 5 2 3-5-5z" fill="#00ffe1"/><path d="M447 439l4 1 2 0-5 0z" fill="#001aff"/><path d="M617 346l5-6 2-1-4 6z" fill="#00ff9f"/><path d="M375 408l4 3 1 2-4-3z" fill="#007bff"/><path d="M486 438l4 0 2-1-4 1z" fill="#0020ff"/><path d="M585 383l5-5 2-1-4 5z" fill="#00e1ff"/><path d="M472 440l4 0 2 0-5 0z" fill="#0019ff"/><path d="M501 435l4-1 2 0-4 1z" fill="#002cff"/><path d="M558 406l4-3 2-1-4 4z" fill="#0090ff"/><path d="M309 335l5 6 1 3-5-6z" fill="#00ff96"/><path d="M613 351l4-5 3-1-4 6z" fill="#00ffb2"/><path d="M411 430l5 1 1 1-4-1z" fill="#0037ff"/><path d="M348 384l4 4 2 3-5-4z" fill="#00c8ff"/><path d="M457 440l4 0 2 1-4 0z" fill="#0019ff"/><path d="M401 425l5 2 1 1-5-2z" fill="#0046ff"/><path d="M422 434l4 1 2 1-5-1z" fill="#002cff"/><path d="M581 387l4-4 3-1-5 4z" fill="#00d3ff"/><path d="M534 421l5-2 2-1-5 3z" fill="#005dff"/><path d="M364 400l5 3 1 2-5-3z" fill="#0096ff"/><path d="M332 366l4 4 1 3-4-5z" fill="#00fff9"/><path d="M515 430l5-2 2 0-5 2z" fill="#003eff"/><path d="M391 420l4 2 2 1-5-2z" fill="#0058ff"/><path d="M432 437l4 1 2 0-5-1z" fill="#0023ff"/><path d="M609 357l4-6 3 0-5 5z" fill="#00ffc5"/><path d="M553 410l5-4 2 0-5 3z" fill="#0086ff"/><path d="M315 344l5 6 1 3-5-6z" fill="#00ffb2"/><path d="M482 439l4-1 2 0-4 1z" fill="#001fff"/><path d="M577 391l4-4 2-1-4 4z" fill="#00c5ff"/><path d="M380 413l5 2 1 2-4-3z" fill="#006eff"/><path d="M497 436l4-1 2 0-5 1z" fill="#002aff"/><path d="M442 439l5 0 1 1-4-1z" fill="#001eff"/><path d="M605 362l4-5 2-1-4 6z" fill="#00ffd6"/><path d="M467 441l5-1 1 0-4 1z" fill="#001aff"/><path d="M530 424l4-3 2 0-4 2z" fill="#0056ff"/><path d="M354 391l4 3 2 2-5-3z" fill="#00b6ff"/><path d="M337 373l5 5 1 2-4-4z" fill="#00eeff"/><path d="M511 432l4-2 2 0-4 2z" fill="#003aff"/><path d="M549 413l4-3 2-1-4 3z" fill="#007cff"/><path d="M573 395l4-4 2-1-4 4z" fill="#00b9ff"/><path d="M370 405l5 3 1 2-5-3z" fill="#0087ff"/><path d="M600 368l5-6 2 0-4 5z" fill="#00ffe7"/><path d="M453 440l4 0 2 1-5-1z" fill="#001bff"/><path d="M321 353l5 5 1 3-5-5z" fill="#00ffcd"/><path d="M407 428l4 2 2 1-5-2z" fill="#003fff"/><path d="M417 432l5 2 1 1-4-2z" fill="#0032ff"/><path d="M397 423l4 2 1 1-4-2z" fill="#0050ff"/><path d="M596 373l4-5 3-1-5 5z" fill="#00fff8"/><path d="M428 436l4 1 1 0-4-1z" fill="#0029ff"/><path d="M478 440l4-1 2 0-5 1z" fill="#001fff"/><path d="M526 426l4-2 2-1-4 2z" fill="#0050ff"/><path d="M492 437l5-1 1 0-4 1z" fill="#0028ff"/><path d="M568 399l5-4 2-1-5 4z" fill="#00adff"/><path d="M304 329l5 6 1 3-5-6z" fill="#00ff7f"/><path d="M343 380l5 4 1 3-5-5z" fill="#00d9ff"/><path d="M545 416l4-3 2-1-4 3z" fill="#0074ff"/><path d="M360 396l4 4 1 2-4-4z" fill="#00a4ff"/><path d="M386 417l5 3 1 1-4-3z" fill="#0063ff"/><path d="M463 441l4 0 2 0-4 0z" fill="#001cff"/><path d="M507 434l4-2 2 0-4 1z" fill="#0036ff"/><path d="M327 361l5 5 1 2-5-4z" fill="#00ffe7"/><path d="M438 438l4 1 2 0-5 0z" fill="#0022ff"/><path d="M592 377l4-4 2-1-4 4z" fill="#00f7ff"/><path d="M376 410l4 3 2 1-5-3z" fill="#007aff"/><path d="M564 402l4-3 2-1-4 4z" fill="#00a2ff"/><path d="M310 338l5 6 1 3-5-6z" fill="#00ff9d"/><path d="M448 440l5 0 1 0-4 0z" fill="#001fff"/><path d="M522 428l4-2 2-1-4 2z" fill="#004bff"/><path d="M620 345l4-6 3-1-5 6z" fill="#00ff98"/><path d="M541 418l4-2 2-1-4 3z" fill="#006cff"/><path d="M588 382l4-5 2-1-4 5z" fill="#00e8ff"/><path d="M349 387l5 4 1 2-5-4z" fill="#00c5ff"/><path d="M488 438l4-1 2 0-4 1z" fill="#0027ff"/><path d="M333 368l4 5 2 3-5-5z" fill="#00fffe"/><path d="M473 440l5 0 1 0-4 0z" fill="#0020ff"/><path d="M365 402l5 3 1 2-4-3z" fill="#0095ff"/><path d="M503 435l4-1 2-1-5 1z" fill="#0033ff"/><path d="M413 431l4 1 2 1-5-1z" fill="#003aff"/><path d="M616 351l4-6 2-1-4 6z" fill="#00ffab"/><path d="M560 406l4-4 2 0-4 3z" fill="#0097ff"/><path d="M402 426l5 2 1 1-4-2z" fill="#0048ff"/><path d="M423 435l5 1 1 0-4-1z" fill="#002fff"/><path d="M316 347l5 6 1 3-5-6z" fill="#00ffb9"/><path d="M459 441l4 0 2 0-5 0z" fill="#001eff"/><path d="M392 421l5 2 1 1-5-2z" fill="#005aff"/><path d="M583 386l5-4 2-1-5 4z" fill="#00daff"/><path d="M536 421l5-3 2 0-5 2z" fill="#0065ff"/><path d="M433 437l5 1 1 1-4-1z" fill="#0027ff"/><path d="M517 430l5-2 2-1-5 2z" fill="#0046ff"/><path d="M611 356l5-5 2-1-4 5z" fill="#00ffbd"/><path d="M382 414l4 3 2 1-5-2z" fill="#006fff"/><path d="M339 376l4 4 1 2-4-4z" fill="#00eaff"/><path d="M555 409l5-3 2-1-4 3z" fill="#008dff"/><path d="M355 393l5 3 1 2-5-3z" fill="#00b3ff"/><path d="M579 390l4-4 2-1-4 4z" fill="#00cdff"/><path d="M484 439l4-1 2 0-5 1z" fill="#0026ff"/><path d="M444 439l4 1 2 0-5-1z" fill="#0023ff"/><path d="M607 362l4-6 3-1-5 6z" fill="#00ffcf"/><path d="M322 356l5 5 1 3-5-6z" fill="#00ffd3"/><path d="M498 436l5-1 1-1-4 2z" fill="#0031ff"/><path d="M469 441l4-1 2 0-4 0z" fill="#0021ff"/><path d="M371 407l5 3 1 1-4-3z" fill="#0087ff"/><path d="M532 423l4-2 2-1-4 2z" fill="#005eff"/><path d="M513 432l4-2 2-1-4 2z" fill="#0042ff"/><path d="M603 367l4-5 2-1-4 5z" fill="#00ffdf"/><path d="M575 394l4-4 2-1-4 4z" fill="#00c1ff"/><path d="M551 412l4-3 3-1-5 3z" fill="#0084ff"/><path d="M305 332l5 6 1 3-4-6z" fill="#00ff86"/><path d="M454 440l5 1 1 0-4-1z" fill="#0021ff"/><path d="M408 429l5 2 1 1-4-2z" fill="#0042ff"/><path d="M344 382l5 5 1 2-4-4z" fill="#00d6ff"/><path d="M419 433l4 2 2 0-5-1z" fill="#0036ff"/><path d="M398 424l4 2 2 1-5-2z" fill="#0052ff"/><path d="M328 364l5 4 1 3-5-5z" fill="#00ffeb"/><path d="M361 398l4 4 2 2-5-4z" fill="#00a3ff"/><path d="M429 436l4 1 2 1-4-1z" fill="#002dff"/><path d="M598 372l5-5 2-1-4 5z" fill="#00ffef"/><path d="M388 418l4 3 1 1-4-3z" fill="#0065ff"/><path d="M479 440l5-1 1 0-4 0z" fill="#0026ff"/><path d="M570 398l5-4 2-1-4 4z" fill="#00b5ff"/><path d="M528 425l4-2 2-1-4 3z" fill="#0058ff"/><path d="M494 437l4-1 2 0-4 1z" fill="#002fff"/><path d="M311 341l5 6 1 3-5-6z" fill="#00ffa3"/><path d="M547 415l4-3 2-1-4 3z" fill="#007cff"/><path d="M465 441l4 0 2-1-5 0z" fill="#0022ff"/><path d="M439 439l5 0 1 0-4 0z" fill="#0027ff"/><path d="M377 411l5 3 1 2-5-3z" fill="#007bff"/><path d="M509 433l4-1 2-1-4 1z" fill="#003eff"/><path d="M594 376l4-4 3-1-5 4z" fill="#00ffff"/><path d="M350 389l5 4 1 2-4-4z" fill="#00c3ff"/><path d="M334 371l5 5 1 2-5-5z" fill="#00fcff"/><path d="M566 402l4-4 3-1-5 4z" fill="#00aaff"/><path d="M622 344l5-6 2-1-4 6z" fill="#00ff8f"/><path d="M450 440l4 0 2 0-5 0z" fill="#0024ff"/><path d="M367 404l4 3 2 1-5-3z" fill="#0095ff"/><path d="M317 350l5 6 1 2-5-5z" fill="#00ffbe"/><path d="M524 427l4-2 2 0-4 2z" fill="#0053ff"/><path d="M543 418l4-3 2-1-4 3z" fill="#0074ff"/><path d="M590 381l4-5 2-1-4 5z" fill="#00f1ff"/><path d="M490 438l4-1 2 0-4 0z" fill="#002eff"/><path d="M404 427l4 2 2 1-5-2z" fill="#004bff"/><path d="M414 432l5 1 1 1-4-2z" fill="#003eff"/><path d="M475 440l4 0 2-1-4 1z" fill="#0027ff"/><path d="M618 350l4-6 3-1-5 5z" fill="#00ffa2"/><path d="M393 422l5 2 1 1-4-2z" fill="#005cff"/><path d="M504 434l5-1 2-1-5 2z" fill="#003bff"/><path d="M425 435l4 1 2 1-5-2z" fill="#0034ff"/><path d="M562 405l4-3 2-1-4 3z" fill="#00a0ff"/><path d="M340 378l4 4 2 3-5-5z" fill="#00e7ff"/><path d="M585 385l5-4 2-1-4 4z" fill="#00e3ff"/><path d="M460 441l5 0 1-1-4 0z" fill="#0025ff"/><path d="M356 395l5 3 1 2-5-4z" fill="#00b2ff"/><path d="M383 416l5 2 1 1-5-2z" fill="#0070ff"/><path d="M614 355l4-5 2-2-4 6z" fill="#00ffb5"/><path d="M435 438l4 1 2 0-4-1z" fill="#002dff"/><path d="M323 358l5 6 1 2-5-5z" fill="#00ffd7"/><path d="M538 420l5-2 2-1-5 2z" fill="#006dff"/><path d="M519 429l5-2 2 0-5 1z" fill="#004eff"/><path d="M558 408l4-3 2-1-4 3z" fill="#0096ff"/><path d="M373 408l4 3 1 2-4-3z" fill="#0088ff"/><path d="M581 389l4-4 3-1-5 4z" fill="#00d6ff"/><path d="M307 335l4 6 1 3-4-6z" fill="#00ff8c"/><path d="M609 361l5-6 2-1-4 5z" fill="#00ffc6"/><path d="M445 439l5 1 1 0-4-1z" fill="#0029ff"/><path d="M485 439l5-1 2-1-5 1z" fill="#002eff"/><path d="M500 436l4-2 2 0-4 1z" fill="#0039ff"/><path d="M471 440l4 0 2 0-5 0z" fill="#0028ff"/><path d="M346 385l4 4 2 2-5-5z" fill="#00d4ff"/><path d="M329 366l5 5 1 2-5-5z" fill="#00ffef"/><path d="M534 422l4-2 2-1-4 2z" fill="#0067ff"/><path d="M605 366l4-5 3-2-5 5z" fill="#00ffd7"/><path d="M362 400l5 4 1 1-5-4z" fill="#00a3ff"/><path d="M577 393l4-4 2-1-4 4z" fill="#00caff"/><path d="M410 430l4 2 2 0-5-2z" fill="#0046ff"/><path d="M515 431l4-2 2-1-4 2z" fill="#004aff"/><path d="M553 411l5-3 2-1-5 3z" fill="#008dff"/><path d="M399 425l5 2 1 1-4-2z" fill="#0055ff"/><path d="M456 440l4 1 2-1-5 0z" fill="#0028ff"/><path d="M420 434l5 1 1 0-4-1z" fill="#003bff"/><path d="M312 344l5 6 1 3-4-6z" fill="#00ffa8"/><path d="M389 419l4 3 2 1-5-3z" fill="#0067ff"/><path d="M431 437l4 1 2 0-5-2z" fill="#0033ff"/><path d="M601 371l4-5 2-2-4 5z" fill="#00ffe7"/><path d="M378 413l5 3 1 1-4-3z" fill="#007cff"/><path d="M573 397l4-4 2-1-4 4z" fill="#00beff"/><path d="M481 439l4 0 2-1-4 1z" fill="#002eff"/><path d="M335 373l5 5 1 2-5-5z" fill="#00f9ff"/><path d="M530 425l4-3 2-1-4 3z" fill="#0061ff"/><path d="M496 437l4-1 2-1-4 1z" fill="#0037ff"/><path d="M352 391l4 4 1 1-4-4z" fill="#00c2ff"/><path d="M549 414l4-3 2-1-4 3z" fill="#0085ff"/><path d="M441 439l4 0 2 0-4-1z" fill="#002dff"/><path d="M466 440l5 0 1 0-4 0z" fill="#002aff"/><path d="M318 353l5 5 1 3-4-6z" fill="#00ffc2"/><path d="M596 375l5-4 2-2-4 5z" fill="#00fff6"/><path d="M511 432l4-1 2-1-4 1z" fill="#0047ff"/><path d="M368 405l5 3 1 2-5-4z" fill="#0095ff"/><path d="M625 343l4-6 2-2-4 6z" fill="#00ff86"/><path d="M568 401l5-4 2-1-5 3z" fill="#00b3ff"/><path d="M451 440l5 0 1 0-4-1z" fill="#002bff"/><path d="M592 380l4-5 3-1-5 4z" fill="#00faff"/><path d="M545 417l4-3 2-1-4 2z" fill="#007eff"/><path d="M405 428l5 2 1 0-4-2z" fill="#004fff"/><path d="M526 427l4-2 2-1-5 1z" fill="#005cff"/><path d="M341 380l5 5 1 1-5-4z" fill="#00e5ff"/><path d="M416 432l4 2 2 0-5-2z" fill="#0043ff"/><path d="M620 348l5-5 2-2-4 6z" fill="#00ff99"/><path d="M395 423l4 2 2 1-5-3z" fill="#005fff"/><path d="M324 361l5 5 1 2-4-5z" fill="#00ffdb"/><path d="M492 437l4 0 2-1-5 1z" fill="#0037ff"/><path d="M357 396l5 4 1 1-4-3z" fill="#00b2ff"/><path d="M477 440l4-1 2 0-5 0z" fill="#002fff"/><path d="M426 435l5 2 1-1-4-1z" fill="#0039ff"/><path d="M384 417l5 2 1 1-4-3z" fill="#0073ff"/><path d="M564 404l4-3 2-2-4 4z" fill="#00a9ff"/><path d="M506 434l5-2 2-1-5 2z" fill="#0044ff"/><path d="M588 384l4-4 2-2-4 5z" fill="#00edff"/><path d="M308 338l4 6 2 3-5-6z" fill="#00ff92"/><path d="M462 440l4 0 2 0-4 0z" fill="#002cff"/><path d="M616 354l4-6 3-1-5 5z" fill="#00ffab"/><path d="M437 438l4 1 2-1-5-1z" fill="#0033ff"/><path d="M374 410l4 3 2 1-5-4z" fill="#0089ff"/><path d="M540 419l5-2 2-2-5 3z" fill="#0077ff"/><path d="M521 428l5-1 1-2-4 2z" fill="#0057ff"/><path d="M347 386l5 5 1 1-5-4z" fill="#00d3ff"/><path d="M330 368l5 5 1 2-5-5z" fill="#00fff1"/><path d="M612 359l4-5 2-2-4 6z" fill="#00ffbd"/><path d="M560 407l4-3 2-1-4 3z" fill="#00a0ff"/><path d="M583 388l5-4 2-1-4 4z" fill="#00e0ff"/><path d="M447 439l4 1 2-1-4 0z" fill="#0030ff"/><path d="M314 347l4 6 2 2-5-6z" fill="#00ffad"/><path d="M487 438l5-1 1 0-4 0z" fill="#0036ff"/><path d="M363 401l5 4 1 1-4-4z" fill="#00a4ff"/><path d="M472 440l5 0 1-1-4 0z" fill="#0030ff"/><path d="M502 435l4-1 2-1-4 1z" fill="#0042ff"/><path d="M607 364l5-5 2-1-4 5z" fill="#00ffcd"/><path d="M401 426l4 2 2 0-5-2z" fill="#0059ff"/><path d="M411 430l5 2 1 0-4-2z" fill="#004bff"/><path d="M536 421l4-2 2-1-4 2z" fill="#0070ff"/><path d="M579 392l4-4 3-1-5 4z" fill="#00d4ff"/><path d="M390 420l5 3 1 0-4-2z" fill="#006aff"/><path d="M422 434l4 1 2 0-5-1z" fill="#0040ff"/><path d="M555 410l5-3 2-1-4 3z" fill="#0097ff"/><path d="M457 440l5 0 2 0-5-1z" fill="#002fff"/><path d="M517 430l4-2 2-1-4 2z" fill="#0054ff"/><path d="M336 375l5 5 1 2-5-5z" fill="#00f8ff"/><path d="M353 392l4 4 2 2-5-5z" fill="#00c2ff"/><path d="M380 414l4 3 2 0-5-3z" fill="#007fff"/><path d="M320 355l4 6 2 2-5-6z" fill="#00ffc6"/><path d="M432 436l5 2 1-1-4-1z" fill="#0039ff"/><path d="M603 369l4-5 3-1-5 5z" fill="#00ffdd"/><path d="M575 396l4-4 2-1-4 3z" fill="#00c8ff"/><path d="M483 439l4-1 2-1-4 1z" fill="#0037ff"/><path d="M532 424l4-3 2-1-4 2z" fill="#006bff"/><path d="M498 436l4-1 2-1-4 1z" fill="#0041ff"/><path d="M369 406l5 4 1 0-4-3z" fill="#0097ff"/><path d="M443 438l4 1 2 0-5-1z" fill="#0035ff"/><path d="M551 413l4-3 3-1-5 2z" fill="#008fff"/><path d="M599 374l4-5 2-1-4 4z" fill="#00ffec"/><path d="M468 440l4 0 2-1-4 0z" fill="#0032ff"/><path d="M627 341l4-6 3-1-4 5z" fill="#00ff7d"/><path d="M513 431l4-1 2-1-5 1z" fill="#0051ff"/><path d="M342 382l5 4 1 2-5-5z" fill="#00e5ff"/><path d="M326 363l4 5 1 2-4-5z" fill="#00ffdd"/><path d="M570 399l5-3 2-2-4 4z" fill="#00beff"/><path d="M359 398l4 3 2 1-5-3z" fill="#00b3ff"/><path d="M453 439l4 1 2-1-4 0z" fill="#0033ff"/><path d="M407 428l4 2 2 0-5-2z" fill="#0054ff"/><path d="M594 378l5-4 2-2-4 5z" fill="#00fffa"/><path d="M309 341l5 6 1 2-5-6z" fill="#00ff96"/><path d="M396 423l5 3 1 0-4-3z" fill="#0063ff"/><path d="M417 432l5 2 1 0-4-2z" fill="#0048ff"/><path d="M623 347l4-6 3-2-5 6z" fill="#00ff8f"/><path d="M547 415l4-2 2-2-4 3z" fill="#0088ff"/><path d="M527 425l5-1 2-2-5 2z" fill="#0066ff"/><path d="M386 417l4 3 2 1-5-3z" fill="#0076ff"/><path d="M428 435l4 1 2 0-5-1z" fill="#0040ff"/><path d="M493 437l5-1 2-1-5 0z" fill="#0040ff"/><path d="M478 439l5 0 2-1-5 0z" fill="#0038ff"/><path d="M566 403l4-4 3-1-5 3z" fill="#00b4ff"/><path d="M618 352l5-5 2-2-4 6z" fill="#00ffa1"/><path d="M590 383l4-5 3-1-5 4z" fill="#00f7ff"/><path d="M375 410l5 4 1 0-4-3z" fill="#008cff"/><path d="M331 370l5 5 1 2-4-5z" fill="#00fff3"/><path d="M508 433l5-2 1-1-4 1z" fill="#004eff"/><path d="M348 388l5 4 1 1-5-4z" fill="#00d3ff"/><path d="M464 440l4 0 2-1-5 0z" fill="#0035ff"/><path d="M438 437l5 1 1 0-4-1z" fill="#003aff"/><path d="M315 349l5 6 1 2-5-5z" fill="#00ffb0"/><path d="M542 418l5-3 2-1-4 2z" fill="#0081ff"/><path d="M614 358l4-6 3-1-5 5z" fill="#00ffb2"/><path d="M365 402l4 4 2 1-5-4z" fill="#00a6ff"/><path d="M523 427l4-2 2-1-4 2z" fill="#0062ff"/><path d="M586 387l4-4 2-2-4 4z" fill="#00eaff"/><path d="M562 406l4-3 2-2-4 3z" fill="#00aaff"/><path d="M449 439l4 0 2 0-5-1z" fill="#0038ff"/><path d="M489 437l4 0 2-2-4 1z" fill="#0040ff"/><path d="M337 377l5 5 1 1-4-4z" fill="#00f7ff"/><path d="M402 426l5 2 1 0-4-2z" fill="#005eff"/><path d="M610 363l4-5 2-2-4 5z" fill="#00ffc3"/><path d="M413 430l4 2 2 0-5-2z" fill="#0051ff"/><path d="M474 439l4 0 2-1-4 0z" fill="#0039ff"/><path d="M321 357l5 6 1 2-5-6z" fill="#00ffc9"/><path d="M504 434l4-1 2-2-4 1z" fill="#004cff"/><path d="M392 421l4 2 2 0-5-2z" fill="#006fff"/><path d="M354 393l5 5 1 1-5-4z" fill="#00c3ff"/><path d="M423 434l5 1 1 0-4-2z" fill="#0047ff"/><path d="M538 420l4-2 3-2-5 3z" fill="#007bff"/><path d="M581 391l5-4 2-2-4 4z" fill="#00deff"/><path d="M381 414l5 3 1 1-5-3z" fill="#0082ff"/><path d="M558 409l4-3 2-2-4 3z" fill="#00a2ff"/><path d="M459 439l5 1 1-1-4-1z" fill="#0038ff"/><path d="M519 429l4-2 2-1-4 1z" fill="#005eff"/><path d="M605 368l5-5 2-2-4 5z" fill="#00ffd2"/><path d="M434 436l4 1 2 0-5-1z" fill="#0040ff"/><path d="M371 407l4 3 2 1-5-3z" fill="#009aff"/><path d="M577 394l4-3 3-2-5 4z" fill="#00d3ff"/><path d="M327 365l4 5 2 2-5-5z" fill="#00ffdf"/><path d="M343 383l5 5 1 1-4-4z" fill="#00e5ff"/><path d="M485 438l4-1 2-1-5 0z" fill="#0040ff"/><path d="M444 438l5 1 1-1-4-1z" fill="#003dff"/><path d="M601 372l4-4 3-2-5 5z" fill="#00ffe1"/><path d="M534 422l4-2 2-1-4 2z" fill="#0076ff"/><path d="M500 435l4-1 2-2-5 1z" fill="#004bff"/><path d="M310 343l5 6 1 3-5-7z" fill="#00ff9a"/><path d="M553 411l5-2 2-2-5 3z" fill="#009aff"/><path d="M630 339l4-5 3-2-5 6z" fill="#00ff72"/><path d="M470 439l4 0 2-1-5 0z" fill="#003bff"/><path d="M360 399l5 3 1 1-5-4z" fill="#00b5ff"/><path d="M514 430l5-1 2-2-5 2z" fill="#005bff"/><path d="M573 398l4-4 2-1-4 3z" fill="#00c9ff"/><path d="M408 428l5 2 1 0-4-2z" fill="#005aff"/><path d="M398 423l4 3 2 0-5-3z" fill="#0069ff"/><path d="M625 345l5-6 2-1-4 5z" fill="#00ff85"/><path d="M597 377l4-5 2-1-4 4z" fill="#00ffef"/><path d="M455 439l4 0 2-1-5 0z" fill="#003cff"/><path d="M419 432l4 2 2-1-5-2z" fill="#004fff"/><path d="M387 418l5 3 1 0-5-3z" fill="#007aff"/><path d="M333 372l4 5 2 2-5-6z" fill="#00fff4"/><path d="M549 414l4-3 2-1-4 2z" fill="#0093ff"/><path d="M316 352l5 5 1 2-5-6z" fill="#00ffb3"/><path d="M349 389l5 4 1 2-4-5z" fill="#00d4ff"/><path d="M529 424l5-2 2-1-4 1z" fill="#0071ff"/><path d="M429 435l5 1 1 0-4-2z" fill="#0047ff"/><path d="M377 411l4 3 1 1-4-4z" fill="#0090ff"/><path d="M621 351l4-6 3-2-5 6z" fill="#00ff96"/><path d="M495 435l5 0 1-2-4 1z" fill="#004aff"/><path d="M480 438l5 0 1-2-4 1z" fill="#0041ff"/><path d="M568 401l5-3 2-2-4 3z" fill="#00bfff"/><path d="M592 381l5-4 2-2-4 4z" fill="#00fffc"/><path d="M510 431l4-1 2-1-4 1z" fill="#0059ff"/><path d="M440 437l4 1 2-1-5-1z" fill="#0042ff"/><path d="M465 439l5 0 1-1-4 0z" fill="#003eff"/><path d="M366 403l5 4 1 1-5-4z" fill="#00a9ff"/><path d="M616 356l5-5 2-2-4 5z" fill="#00ffa7"/><path d="M545 416l4-2 2-2-4 3z" fill="#008cff"/><path d="M339 379l4 4 2 2-5-5z" fill="#00f7ff"/><path d="M322 359l5 6 1 2-5-6z" fill="#00ffca"/><path d="M588 385l4-4 3-2-5 4z" fill="#00f6ff"/><path d="M525 426l4-2 3-2-5 2z" fill="#006dff"/><path d="M564 404l4-3 3-2-5 3z" fill="#00b6ff"/><path d="M450 438l5 1 1-1-4-1z" fill="#0041ff"/><path d="M355 395l5 4 1 0-4-4z" fill="#00c5ff"/><path d="M404 426l4 2 2 0-5-2z" fill="#0064ff"/><path d="M393 421l5 2 1 0-5-2z" fill="#0074ff"/><path d="M612 361l4-5 3-2-4 5z" fill="#00ffb7"/><path d="M414 430l5 2 1-1-4-2z" fill="#0058ff"/><path d="M491 436l4-1 2-1-4 0z" fill="#004aff"/><path d="M476 438l4 0 2-1-4 0z" fill="#0043ff"/><path d="M382 415l5 3 1 0-4-3z" fill="#0087ff"/><path d="M425 433l4 2 2-1-5-1z" fill="#004fff"/><path d="M506 432l4-1 2-1-4 1z" fill="#0057ff"/><path d="M584 389l4-4 2-2-4 4z" fill="#00eaff"/><path d="M540 419l5-3 2-1-5 2z" fill="#0087ff"/><path d="M328 367l5 5 1 1-5-5z" fill="#00ffe0"/><path d="M560 407l4-3 2-2-4 3z" fill="#00aeff"/><path d="M461 438l4 1 2-1-4-1z" fill="#0042ff"/><path d="M372 408l5 3 1 0-5-3z" fill="#009eff"/><path d="M608 366l4-5 3-2-5 5z" fill="#00ffc7"/><path d="M345 385l4 4 2 1-5-4z" fill="#00e6ff"/><path d="M435 436l5 1 1-1-4-1z" fill="#0049ff"/><path d="M311 345l5 7 1 1-5-6z" fill="#00ff9c"/><path d="M521 427l4-1 2-2-4 2z" fill="#0069ff"/><path d="M579 393l5-4 2-2-4 4z" fill="#00dfff"/><path d="M361 399l5 4 1 1-5-4z" fill="#00b8ff"/><path d="M632 338l5-6 2-3-4 6z" fill="#00ff67"/><path d="M603 371l5-5 2-2-4 4z" fill="#00ffd5"/><path d="M446 437l4 1 2-1-5-1z" fill="#0046ff"/><path d="M486 436l5 0 2-2-5 1z" fill="#004bff"/><path d="M536 421l4-2 2-2-4 2z" fill="#0081ff"/><path d="M555 410l5-3 2-2-4 3z" fill="#00a6ff"/><path d="M501 433l5-1 2-1-5 1z" fill="#0056ff"/><path d="M471 438l5 0 2-1-5-1z" fill="#0046ff"/><path d="M334 373l5 6 1 1-5-5z" fill="#00fff4"/><path d="M317 353l5 6 1 2-5-6z" fill="#00ffb5"/><path d="M399 423l5 3 1 0-5-3z" fill="#006fff"/><path d="M410 428l4 2 2-1-5-2z" fill="#0061ff"/><path d="M628 343l4-5 3-3-5 6z" fill="#00ff79"/><path d="M388 418l5 3 1 0-4-3z" fill="#0080ff"/><path d="M516 429l5-2 2-1-5 1z" fill="#0067ff"/><path d="M575 396l4-3 3-2-5 3z" fill="#00d5ff"/><path d="M351 390l4 5 2 0-5-4z" fill="#00d6ff"/><path d="M599 375l4-4 3-3-5 5z" fill="#00ffe3"/><path d="M420 431l5 2 1 0-4-2z" fill="#0057ff"/><path d="M456 438l5 0 2-1-5-1z" fill="#0046ff"/><path d="M378 411l4 4 2 0-5-4z" fill="#0094ff"/><path d="M431 434l4 2 2-1-5-2z" fill="#0050ff"/><path d="M551 412l4-2 3-2-5 2z" fill="#009fff"/><path d="M623 349l5-6 2-2-4 5z" fill="#00ff8b"/><path d="M532 422l4-1 2-2-4 1z" fill="#007dff"/><path d="M367 404l5 4 1 0-5-4z" fill="#00acff"/><path d="M595 379l4-4 2-2-4 4z" fill="#00fff0"/><path d="M323 361l5 6 1 1-5-6z" fill="#00ffcb"/><path d="M571 399l4-3 2-2-4 3z" fill="#00cbff"/><path d="M497 434l4-1 2-1-4 0z" fill="#0056ff"/><path d="M482 437l4-1 2-1-4 0z" fill="#004cff"/><path d="M340 380l5 5 1 1-5-5z" fill="#00f8ff"/><path d="M441 436l5 1 1-1-4-1z" fill="#004cff"/><path d="M512 430l4-1 2-2-4 1z" fill="#0065ff"/><path d="M619 354l4-5 3-3-5 6z" fill="#00ff9b"/><path d="M467 438l4 0 2-2-4 0z" fill="#0049ff"/><path d="M357 395l4 4 1 1-4-4z" fill="#00c8ff"/><path d="M547 415l4-3 2-2-4 2z" fill="#0099ff"/><path d="M590 383l5-4 2-2-4 4z" fill="#00fffc"/><path d="M527 424l5-2 2-2-5 2z" fill="#0079ff"/><path d="M566 402l5-3 2-2-5 3z" fill="#00c2ff"/><path d="M405 426l5 2 1-1-5-2z" fill="#006bff"/><path d="M394 421l5 2 1 0-4-3z" fill="#007aff"/><path d="M452 437l4 1 2-2-4 0z" fill="#004aff"/><path d="M615 359l4-5 2-2-4 5z" fill="#00ffab"/><path d="M416 429l4 2 2 0-5-2z" fill="#0060ff"/><path d="M384 415l4 3 2 0-5-3z" fill="#008dff"/><path d="M329 368l5 5 1 2-5-6z" fill="#00ffe0"/><path d="M312 347l5 6 1 2-5-6z" fill="#00ff9e"/><path d="M346 386l5 4 1 1-5-5z" fill="#00e8ff"/><path d="M493 434l4 0 2-2-5 1z" fill="#0056ff"/><path d="M426 433l5 1 1-1-4-1z" fill="#0057ff"/><path d="M478 437l4 0 2-2-5 0z" fill="#004eff"/><path d="M373 408l5 3 1 0-5-3z" fill="#00a2ff"/><path d="M586 387l4-4 3-2-5 4z" fill="#00f6ff"/><path d="M508 431l4-1 2-2-4 1z" fill="#0063ff"/><path d="M610 364l5-5 2-2-4 5z" fill="#00ffba"/><path d="M542 417l5-2 2-3-5 3z" fill="#0093ff"/><path d="M562 405l4-3 2-2-4 3z" fill="#00baff"/><path d="M463 437l4 1 2-2-5 0z" fill="#004cff"/><path d="M437 435l4 1 2-1-5-2z" fill="#0052ff"/><path d="M362 400l5 4 1 0-4-4z" fill="#00bcff"/><path d="M523 426l4-2 2-2-4 1z" fill="#0076ff"/><path d="M635 335l4-6 3-2-5 6z" fill="#00ff5b"/><path d="M318 355l5 6 1 1-5-6z" fill="#00ffb5"/><path d="M582 391l4-4 2-2-4 3z" fill="#00ebff"/><path d="M335 375l5 5 1 1-5-5z" fill="#00fff3"/><path d="M606 368l4-4 3-2-5 4z" fill="#00ffc9"/><path d="M447 436l5 1 2-1-5-1z" fill="#0050ff"/><path d="M352 391l5 4 1 1-5-5z" fill="#00d9ff"/><path d="M488 435l5-1 1-1-4 0z" fill="#0057ff"/><path d="M558 408l4-3 2-2-4 3z" fill="#00b2ff"/><path d="M538 419l4-2 2-2-4 2z" fill="#008eff"/><path d="M400 423l5 3 1-1-4-3z" fill="#0076ff"/><path d="M503 432l5-1 2-2-5 1z" fill="#0062ff"/><path d="M630 341l5-6 2-2-4 6z" fill="#00ff6d"/><path d="M390 418l4 3 2-1-5-3z" fill="#0086ff"/><path d="M411 427l5 2 1 0-4-3z" fill="#0069ff"/><path d="M473 436l5 1 1-2-4 0z" fill="#0051ff"/><path d="M601 373l5-5 2-2-4 4z" fill="#00ffd6"/><path d="M379 411l5 4 1 0-4-4z" fill="#009aff"/><path d="M577 394l5-3 2-3-5 4z" fill="#00e1ff"/><path d="M422 431l4 2 2-1-5-2z" fill="#0060ff"/><path d="M518 427l5-1 2-3-5 2z" fill="#0073ff"/><path d="M324 362l5 6 1 1-5-5z" fill="#00ffcb"/><path d="M458 436l5 1 1-1-4-1z" fill="#0050ff"/><path d="M626 346l4-5 3-2-5 5z" fill="#00ff7e"/><path d="M368 404l5 4 1 0-4-4z" fill="#00b1ff"/><path d="M341 381l5 5 1 0-5-5z" fill="#00faff"/><path d="M432 433l5 2 1-2-4-1z" fill="#0059ff"/><path d="M553 410l5-2 2-2-5 2z" fill="#00acff"/><path d="M534 420l4-1 2-2-4 1z" fill="#008aff"/><path d="M597 377l4-4 3-3-5 5z" fill="#00ffe3"/><path d="M573 397l4-3 2-2-4 3z" fill="#00d8ff"/><path d="M484 435l4 0 2-2-4 0z" fill="#0058ff"/><path d="M358 396l4 4 2 0-5-4z" fill="#00ccff"/><path d="M499 432l4 0 2-2-4 0z" fill="#0062ff"/><path d="M621 352l5-6 2-2-4 5z" fill="#00ff8f"/><path d="M443 435l4 1 2-1-4-2z" fill="#0056ff"/><path d="M469 436l4 0 2-1-5-1z" fill="#0054ff"/><path d="M514 428l4-1 2-2-4 1z" fill="#0071ff"/><path d="M330 369l5 6 1 1-5-6z" fill="#00ffde"/><path d="M313 349l5 6 1 1-5-6z" fill="#00ff9f"/><path d="M593 381l4-4 2-2-4 3z" fill="#00ffef"/><path d="M396 420l4 3 2-1-5-2z" fill="#0082ff"/><path d="M549 412l4-2 2-2-4 2z" fill="#00a6ff"/><path d="M406 425l5 2 2-1-5-2z" fill="#0074ff"/><path d="M617 357l4-5 3-3-4 5z" fill="#00ff9f"/><path d="M385 415l5 3 1-1-4-3z" fill="#0093ff"/><path d="M347 386l5 5 1 0-5-4z" fill="#00ebff"/><path d="M568 400l5-3 2-2-4 3z" fill="#00cfff"/><path d="M417 429l5 2 1-1-4-2z" fill="#0069ff"/><path d="M529 422l5-2 2-2-5 2z" fill="#0086ff"/><path d="M454 436l4 0 2-1-5-1z" fill="#0055ff"/><path d="M374 408l5 3 2 0-5-3z" fill="#00a8ff"/><path d="M428 432l4 1 2-1-5-2z" fill="#0061ff"/><path d="M588 385l5-4 2-3-4 4z" fill="#00fffb"/><path d="M494 433l5-1 2-2-5 1z" fill="#0062ff"/><path d="M613 362l4-5 3-3-5 5z" fill="#00ffad"/><path d="M479 435l5 0 2-2-5 0z" fill="#005aff"/><path d="M319 356l5 6 1 2-5-6z" fill="#00ffb5"/><path d="M364 400l4 4 2 0-5-4z" fill="#00c1ff"/><path d="M510 429l4-1 2-2-4 1z" fill="#0070ff"/><path d="M336 376l5 5 1 0-5-5z" fill="#00fff0"/><path d="M544 415l5-3 2-2-4 2z" fill="#00a0ff"/><path d="M564 403l4-3 3-2-5 2z" fill="#00c7ff"/><path d="M438 433l5 2 2-2-5-1z" fill="#005dff"/><path d="M464 436l5 0 1-2-4 0z" fill="#0058ff"/><path d="M637 333l5-6 2-3-4 6z" fill="#00ff4e"/><path d="M525 423l4-1 2-2-4 1z" fill="#0083ff"/><path d="M608 366l5-4 2-3-4 4z" fill="#00ffbc"/><path d="M584 388l4-3 3-3-5 4z" fill="#00f9ff"/><path d="M353 391l5 5 1 0-5-4z" fill="#00ddff"/><path d="M633 339l4-6 3-3-5 6z" fill="#00ff60"/><path d="M449 435l5 1 1-2-4-1z" fill="#005bff"/><path d="M402 422l4 3 2-1-5-3z" fill="#007fff"/><path d="M391 417l5 3 1 0-4-3z" fill="#008eff"/><path d="M325 364l5 5 1 1-5-6z" fill="#00ffca"/><path d="M560 406l4-3 2-3-4 3z" fill="#00c0ff"/><path d="M413 426l4 3 2-1-5-3z" fill="#0072ff"/><path d="M540 417l4-2 3-3-5 2z" fill="#009bff"/><path d="M490 433l4 0 2-2-4 0z" fill="#0063ff"/><path d="M381 411l4 4 2-1-5-3z" fill="#00a1ff"/><path d="M505 430l5-1 2-2-5 0z" fill="#006fff"/><path d="M604 370l4-4 3-3-5 5z" fill="#00ffc9"/><path d="M475 435l4 0 2-2-4 0z" fill="#005dff"/><path d="M342 381l5 5 1 1-5-5z" fill="#00fdff"/><path d="M579 392l5-4 2-2-4 3z" fill="#00efff"/><path d="M423 430l5 2 1-2-4-2z" fill="#006aff"/><path d="M370 404l4 4 2 0-5-4z" fill="#00b7ff"/><path d="M628 344l5-5 2-3-4 5z" fill="#00ff71"/><path d="M520 425l5-2 2-2-5 1z" fill="#0080ff"/><path d="M460 435l4 1 2-2-5-1z" fill="#005cff"/><path d="M434 432l4 1 2-1-5-2z" fill="#0064ff"/><path d="M359 396l5 4 1 0-5-4z" fill="#00d1ff"/><path d="M599 375l5-5 2-2-4 4z" fill="#00ffd6"/><path d="M555 408l5-2 2-3-4 2z" fill="#00b9ff"/><path d="M314 350l5 6 1 2-5-7z" fill="#00ff9e"/><path d="M536 418l4-1 2-3-4 2z" fill="#0097ff"/><path d="M624 349l4-5 3-3-5 6z" fill="#00ff81"/><path d="M331 370l5 6 1 0-5-5z" fill="#00ffdc"/><path d="M575 395l4-3 3-3-5 3z" fill="#00e6ff"/><path d="M486 433l4 0 2-2-5 0z" fill="#0065ff"/><path d="M501 430l4 0 2-3-4 1z" fill="#006fff"/><path d="M445 433l4 2 2-2-5-1z" fill="#0061ff"/><path d="M348 387l5 4 1 1-5-5z" fill="#00efff"/><path d="M470 434l5 1 2-2-5-1z" fill="#0060ff"/><path d="M516 426l4-1 2-3-4 1z" fill="#007fff"/><path d="M595 378l4-3 3-3-5 4z" fill="#00ffe2"/><path d="M397 420l5 2 1-1-4-2z" fill="#008aff"/><path d="M387 414l4 3 2 0-5-4z" fill="#009bff"/><path d="M408 424l5 2 1-1-5-2z" fill="#007dff"/><path d="M620 354l4-5 2-2-4 4z" fill="#00ff91"/><path d="M551 410l4-2 3-3-5 3z" fill="#00b3ff"/><path d="M376 408l5 3 1 0-5-4z" fill="#00afff"/><path d="M571 398l4-3 2-3-4 3z" fill="#00ddff"/><path d="M419 428l4 2 2-2-5-2z" fill="#0073ff"/><path d="M320 358l5 6 1 0-5-6z" fill="#00ffb4"/><path d="M455 434l5 1 1-2-4-1z" fill="#0061ff"/><path d="M531 420l5-2 2-2-5 1z" fill="#0094ff"/><path d="M337 376l5 5 1 1-5-5z" fill="#00ffed"/><path d="M365 400l5 4 1 0-5-4z" fill="#00c7ff"/><path d="M429 430l5 2 1-2-4-1z" fill="#006cff"/><path d="M591 382l4-4 2-2-4 3z" fill="#00ffed"/><path d="M615 359l5-5 2-3-4 5z" fill="#00ffa0"/><path d="M496 431l5-1 2-2-5 0z" fill="#0070ff"/><path d="M481 433l5 0 1-2-4 0z" fill="#0067ff"/><path d="M640 330l4-6 3-3-4 6z" fill="#00ff40"/><path d="M512 427l4-1 2-3-4 1z" fill="#007dff"/><path d="M547 412l4-2 2-2-4 2z" fill="#00aeff"/><path d="M566 400l5-2 2-3-4 3z" fill="#00d5ff"/><path d="M354 392l5 4 1 0-5-5z" fill="#00e2ff"/><path d="M440 432l5 1 1-1-4-2z" fill="#0068ff"/><path d="M466 434l4 0 2-2-4 0z" fill="#0064ff"/><path d="M611 363l4-4 3-3-5 5z" fill="#00ffae"/><path d="M326 364l5 6 1 1-4-6z" fill="#00ffc7"/><path d="M586 386l5-4 2-3-4 4z" fill="#00fff7"/><path d="M527 421l4-1 2-3-4 2z" fill="#0091ff"/><path d="M635 336l5-6 3-3-5 6z" fill="#00ff52"/><path d="M393 417l4 3 2-1-5-3z" fill="#0096ff"/><path d="M403 421l5 3 1-1-4-3z" fill="#0088ff"/><path d="M343 382l5 5 1 0-4-5z" fill="#00fffd"/><path d="M382 411l5 3 1-1-5-3z" fill="#00a8ff"/><path d="M451 433l4 1 2-2-5-1z" fill="#0067ff"/><path d="M414 425l5 3 1-2-4-2z" fill="#007cff"/><path d="M562 403l4-3 3-2-5 2z" fill="#00ceff"/><path d="M606 368l5-5 2-2-4 4z" fill="#00ffbb"/><path d="M542 414l5-2 2-2-5 1z" fill="#00a9ff"/><path d="M371 404l5 4 1-1-5-4z" fill="#00beff"/><path d="M492 431l4 0 2-3-4 0z" fill="#0071ff"/><path d="M631 341l4-5 3-3-4 5z" fill="#00ff63"/><path d="M507 427l5 0 2-3-5 1z" fill="#007dff"/><path d="M582 389l4-3 3-3-5 3z" fill="#00fdff"/><path d="M425 428l4 2 2-1-5-2z" fill="#0074ff"/><path d="M477 433l4 0 2-2-5-1z" fill="#006aff"/><path d="M315 351l5 7 1 0-5-6z" fill="#00ff9d"/><path d="M360 396l5 4 1 0-4-5z" fill="#00d7ff"/><path d="M522 422l5-1 2-2-5 1z" fill="#008eff"/><path d="M332 371l5 5 1 1-4-6z" fill="#00ffd9"/><path d="M461 433l5 1 2-2-5-1z" fill="#0069ff"/><path d="M435 430l5 2 2-2-5-1z" fill="#006fff"/><path d="M602 372l4-4 3-3-5 4z" fill="#00ffc8"/><path d="M626 347l5-6 3-3-5 6z" fill="#00ff73"/><path d="M558 405l4-2 2-3-4 3z" fill="#00c8ff"/><path d="M577 392l5-3 2-3-4 3z" fill="#00f4ff"/><path d="M349 387l5 5 1-1-4-4z" fill="#00f4ff"/><path d="M538 416l4-2 2-3-4 2z" fill="#00a5ff"/><path d="M446 432l5 1 1-2-4-1z" fill="#006dff"/><path d="M487 431l5 0 2-3-5 0z" fill="#0073ff"/><path d="M503 428l4-1 2-2-4 0z" fill="#007dff"/><path d="M321 358l5 6 2 1-5-6z" fill="#00ffb1"/><path d="M399 419l4 2 2-1-5-3z" fill="#0093ff"/><path d="M388 413l5 4 1-1-5-4z" fill="#00a3ff"/><path d="M622 351l4-4 3-3-4 4z" fill="#00ff83"/><path d="M597 376l5-4 2-3-4 4z" fill="#00ffd3"/><path d="M409 423l5 2 2-1-5-3z" fill="#0087ff"/><path d="M472 432l5 1 1-3-4 0z" fill="#006eff"/><path d="M377 407l5 4 1-1-5-4z" fill="#00b7ff"/><path d="M518 423l4-1 2-2-4 1z" fill="#008dff"/><path d="M338 377l5 5 2 0-5-5z" fill="#00ffe9"/><path d="M553 408l5-3 2-2-5 2z" fill="#00c2ff"/><path d="M420 426l5 2 1-1-4-2z" fill="#007eff"/><path d="M573 395l4-3 3-3-5 3z" fill="#00ecff"/><path d="M366 400l5 4 1-1-4-4z" fill="#00ceff"/><path d="M457 432l4 1 2-2-4-1z" fill="#006eff"/><path d="M533 417l5-1 2-3-5 2z" fill="#00a2ff"/><path d="M618 356l4-5 3-3-5 5z" fill="#00ff91"/><path d="M593 379l4-3 3-3-5 4z" fill="#00ffde"/><path d="M431 429l4 1 2-1-5-2z" fill="#0077ff"/><path d="M643 327l4-6 3-3-5 6z" fill="#00ff32"/><path d="M355 391l5 5 2-1-5-4z" fill="#00e8ff"/><path d="M328 365l4 6 2 0-5-6z" fill="#00ffc4"/><path d="M498 428l5 0 2-3-5 1z" fill="#007eff"/><path d="M483 431l4 0 2-3-4 0z" fill="#0075ff"/><path d="M569 398l4-3 2-3-4 3z" fill="#00e4ff"/><path d="M514 424l4-1 2-2-4 0z" fill="#008cff"/><path d="M549 410l4-2 2-3-4 2z" fill="#00bdff"/><path d="M613 361l5-5 2-3-4 5z" fill="#00ff9f"/><path d="M442 430l4 2 2-2-5-2z" fill="#0074ff"/><path d="M638 333l5-6 2-3-4 6z" fill="#00ff44"/><path d="M468 432l4 0 2-2-5-1z" fill="#0072ff"/><path d="M345 382l4 5 2 0-5-5z" fill="#00fff7"/><path d="M589 383l4-4 2-2-4 3z" fill="#00ffe9"/><path d="M529 419l4-2 2-2-4 1z" fill="#009fff"/><path d="M394 416l5 3 1-2-5-3z" fill="#00a0ff"/><path d="M383 410l5 3 1-1-4-3z" fill="#00b1ff"/><path d="M405 420l4 3 2-2-5-2z" fill="#0092ff"/><path d="M316 352l5 6 2 1-5-6z" fill="#00ff9b"/><path d="M372 403l5 4 1-1-4-4z" fill="#00c6ff"/><path d="M416 424l4 2 2-1-5-3z" fill="#0087ff"/><path d="M609 365l4-4 3-3-5 4z" fill="#00ffac"/><path d="M452 431l5 1 2-2-5-1z" fill="#0074ff"/><path d="M634 338l4-5 3-3-5 5z" fill="#00ff55"/><path d="M564 400l5-2 2-3-5 2z" fill="#00ddff"/><path d="M334 371l4 6 2 0-5-6z" fill="#00ffd5"/><path d="M544 411l5-1 2-3-5 1z" fill="#00b8ff"/><path d="M584 386l5-3 2-3-4 3z" fill="#00fff2"/><path d="M362 395l4 5 2-1-5-4z" fill="#00deff"/><path d="M494 428l4 0 2-2-4 0z" fill="#007fff"/><path d="M426 427l5 2 1-2-4-2z" fill="#0080ff"/><path d="M509 425l5-1 2-3-5 1z" fill="#008cff"/><path d="M478 430l5 1 2-3-5 0z" fill="#0078ff"/><path d="M629 344l5-6 2-3-4 5z" fill="#00ff65"/><path d="M524 420l5-1 2-3-4 1z" fill="#009dff"/><path d="M604 369l5-4 2-3-4 4z" fill="#00ffb9"/><path d="M351 387l4 4 2 0-5-5z" fill="#00faff"/><path d="M437 429l5 1 1-2-4-2z" fill="#007cff"/><path d="M463 431l5 1 1-3-4-1z" fill="#0076ff"/><path d="M323 359l5 6 1 0-5-6z" fill="#00ffae"/><path d="M560 403l4-3 2-3-4 3z" fill="#00d7ff"/><path d="M580 389l4-3 3-3-5 3z" fill="#00fffb"/><path d="M540 413l4-2 2-3-4 2z" fill="#00b5ff"/><path d="M625 348l4-4 3-4-5 5z" fill="#00ff74"/><path d="M389 412l5 4 1-2-4-3z" fill="#00adff"/><path d="M340 377l5 5 1 0-5-6z" fill="#00ffe4"/><path d="M400 417l5 3 1-1-4-3z" fill="#009eff"/><path d="M600 373l4-4 3-3-5 4z" fill="#00ffc4"/><path d="M448 430l4 1 2-2-5-2z" fill="#007aff"/><path d="M378 406l5 4 2-1-5-4z" fill="#00bfff"/><path d="M489 428l5 0 2-2-5 0z" fill="#0081ff"/><path d="M505 425l4 0 2-3-4 1z" fill="#008cff"/><path d="M411 421l5 3 1-2-5-2z" fill="#0092ff"/><path d="M368 399l4 4 2-1-5-4z" fill="#00d5ff"/><path d="M474 430l4 0 2-2-4-1z" fill="#007cff"/><path d="M520 421l4-1 3-3-5 1z" fill="#009cff"/><path d="M422 425l4 2 2-2-5-2z" fill="#0089ff"/><path d="M555 405l5-2 2-3-4 2z" fill="#00d1ff"/><path d="M575 392l5-3 2-3-4 3z" fill="#00fbff"/><path d="M620 353l5-5 2-3-4 5z" fill="#00ff82"/><path d="M645 324l5-6 2-3-4 6z" fill="#00ff23"/><path d="M329 365l5 6 1 0-5-6z" fill="#00ffc0"/><path d="M357 391l5 4 1 0-5-5z" fill="#00efff"/><path d="M595 377l5-4 2-3-4 3z" fill="#00ffcf"/><path d="M459 430l4 1 2-3-5-1z" fill="#007cff"/><path d="M535 415l5-2 2-3-4 1z" fill="#00b2ff"/><path d="M432 427l5 2 2-3-5-1z" fill="#0084ff"/><path d="M346 382l5 5 1-1-5-5z" fill="#00fff1"/><path d="M616 358l4-5 3-3-5 4z" fill="#00ff90"/><path d="M641 330l4-6 3-3-5 6z" fill="#00ff35"/><path d="M500 426l5-1 2-2-5 0z" fill="#008dff"/><path d="M571 395l4-3 3-3-5 3z" fill="#00f4ff"/><path d="M485 428l4 0 2-2-4-1z" fill="#0084ff"/><path d="M551 407l4-2 3-3-5 2z" fill="#00ccff"/><path d="M516 421l4 0 2-3-4 1z" fill="#009bff"/><path d="M443 428l5 2 1-3-4-1z" fill="#0081ff"/><path d="M318 353l5 6 1 0-5-6z" fill="#00ff97"/><path d="M591 380l4-3 3-4-5 4z" fill="#00ffd9"/><path d="M395 414l5 3 2-1-5-3z" fill="#00aaff"/><path d="M469 429l5 1 2-3-5 0z" fill="#0080ff"/><path d="M385 409l4 3 2-1-5-4z" fill="#00bbff"/><path d="M406 419l5 2 1-1-4-3z" fill="#009dff"/><path d="M374 402l4 4 2-1-5-4z" fill="#00ceff"/><path d="M531 416l4-1 3-4-5 2z" fill="#00afff"/><path d="M335 371l5 6 1-1-5-5z" fill="#00ffd0"/><path d="M636 335l5-5 2-3-4 5z" fill="#00ff46"/><path d="M611 362l5-4 2-4-4 5z" fill="#00ff9d"/><path d="M417 422l5 3 1-2-4-3z" fill="#0093ff"/><path d="M363 395l5 4 1-1-5-4z" fill="#00e6ff"/><path d="M454 429l5 1 1-3-4-1z" fill="#0082ff"/><path d="M566 397l5-2 2-3-4 2z" fill="#00edff"/><path d="M587 383l4-3 2-3-4 3z" fill="#00ffe2"/><path d="M546 408l5-1 2-3-4 1z" fill="#00c8ff"/><path d="M428 425l4 2 2-2-5-2z" fill="#008dff"/><path d="M496 426l4 0 2-3-4 0z" fill="#008eff"/><path d="M352 386l5 5 1-1-5-5z" fill="#00fffd"/><path d="M632 340l4-5 3-3-5 5z" fill="#00ff56"/><path d="M324 359l5 6 1 0-5-6z" fill="#00ffaa"/><path d="M511 422l5-1 2-2-5 0z" fill="#009bff"/><path d="M480 428l5 0 2-3-5 0z" fill="#0087ff"/><path d="M607 366l4-4 3-3-5 4z" fill="#00ffa9"/><path d="M527 417l4-1 2-3-4 1z" fill="#00adff"/><path d="M439 426l4 2 2-2-5-2z" fill="#0089ff"/><path d="M465 428l4 1 2-2-4-1z" fill="#0085ff"/><path d="M341 376l5 6 1-1-5-5z" fill="#00ffde"/><path d="M562 400l4-3 3-3-5 2z" fill="#00e7ff"/><path d="M582 386l5-3 2-3-4 3z" fill="#00ffeb"/><path d="M627 345l5-5 2-3-4 5z" fill="#00ff65"/><path d="M391 411l4 3 2-1-5-4z" fill="#00b7ff"/><path d="M542 410l4-2 3-3-5 2z" fill="#00c5ff"/><path d="M380 405l5 4 1-2-5-3z" fill="#00c9ff"/><path d="M402 416l4 3 2-2-5-3z" fill="#00a9ff"/><path d="M602 370l5-4 2-3-4 3z" fill="#00ffb4"/><path d="M369 398l5 4 1-1-5-4z" fill="#00deff"/><path d="M449 427l5 2 2-3-5-1z" fill="#0088ff"/><path d="M412 420l5 2 2-2-5-2z" fill="#009eff"/><path d="M491 426l5 0 2-3-5 0z" fill="#0090ff"/><path d="M330 365l5 6 1 0-5-6z" fill="#00ffbb"/><path d="M507 423l4-1 2-3-4 0z" fill="#009cff"/><path d="M648 321l4-6 3-3-4 5z" fill="#00ff14"/><path d="M623 350l4-5 3-3-5 4z" fill="#00ff73"/><path d="M358 390l5 5 1-1-5-5z" fill="#00f7ff"/><path d="M476 427l4 1 2-3-4-1z" fill="#008bff"/><path d="M423 423l5 2 1-2-4-3z" fill="#0096ff"/><path d="M578 389l4-3 3-3-5 3z" fill="#00fff3"/><path d="M522 418l5-1 2-3-5 1z" fill="#00acff"/><path d="M558 402l4-2 2-4-4 2z" fill="#00e1ff"/><path d="M598 373l4-3 3-4-5 4z" fill="#00ffbf"/><path d="M460 427l5 1 2-2-5-1z" fill="#008aff"/><path d="M347 381l5 5 1-1-5-5z" fill="#00ffea"/><path d="M538 411l4-1 2-3-4 1z" fill="#00c2ff"/><path d="M434 425l5 1 1-2-4-2z" fill="#0091ff"/><path d="M319 353l5 6 1 0-5-6z" fill="#00ff93"/><path d="M643 327l5-6 3-4-5 6z" fill="#00ff26"/><path d="M618 354l5-4 2-4-4 5z" fill="#00ff80"/><path d="M573 392l5-3 2-3-4 2z" fill="#00fffa"/><path d="M502 423l5 0 2-4-5 1z" fill="#009dff"/><path d="M336 371l5 5 1 0-5-6z" fill="#00ffca"/><path d="M593 377l5-4 2-3-4 3z" fill="#00ffc9"/><path d="M553 404l5-2 2-4-5 2z" fill="#00ddff"/><path d="M487 425l4 1 2-3-4-1z" fill="#0093ff"/><path d="M386 407l5 4 1-2-5-3z" fill="#00c5ff"/><path d="M445 426l4 1 2-2-4-2z" fill="#0090ff"/><path d="M397 413l5 3 1-2-5-3z" fill="#00b6ff"/><path d="M518 419l4-1 2-3-4 0z" fill="#00abff"/><path d="M375 401l5 4 1-1-5-4z" fill="#00d8ff"/><path d="M639 332l4-5 3-4-4 5z" fill="#00ff36"/><path d="M408 417l4 3 2-2-5-3z" fill="#00a9ff"/><path d="M471 427l5 0 2-3-5 0z" fill="#008fff"/><path d="M614 359l4-5 3-3-5 4z" fill="#00ff8d"/><path d="M364 394l5 4 1-1-5-4z" fill="#00efff"/><path d="M533 413l5-2 2-3-5 1z" fill="#00bfff"/><path d="M419 420l4 3 2-3-5-2z" fill="#00a0ff"/><path d="M325 359l5 6 1 0-5-6z" fill="#00ffa5"/><path d="M569 394l4-2 3-4-5 3z" fill="#00fdff"/><path d="M353 385l5 5 1-1-5-5z" fill="#00fff5"/><path d="M456 426l4 1 2-2-5-2z" fill="#0090ff"/><path d="M589 380l4-3 3-4-5 3z" fill="#00ffd2"/><path d="M634 337l5-5 3-4-5 5z" fill="#00ff46"/><path d="M549 405l4-1 2-4-4 2z" fill="#00d9ff"/><path d="M429 423l5 2 2-3-5-2z" fill="#009aff"/><path d="M609 363l5-4 2-4-4 4z" fill="#00ff99"/><path d="M498 423l4 0 2-3-4 0z" fill="#009eff"/><path d="M513 419l5 0 2-4-5 1z" fill="#00abff"/><path d="M342 376l5 5 1-1-5-5z" fill="#00ffd7"/><path d="M482 425l5 0 2-3-5 0z" fill="#0097ff"/><path d="M529 414l4-1 2-4-4 1z" fill="#00beff"/><path d="M440 424l5 2 2-3-5-2z" fill="#0097ff"/><path d="M630 342l4-5 3-4-4 5z" fill="#00ff55"/><path d="M585 383l4-3 2-4-4 3z" fill="#00ffda"/><path d="M467 426l4 1 2-3-5-1z" fill="#0094ff"/><path d="M564 396l5-2 2-3-4 2z" fill="#00f8ff"/><path d="M392 409l5 4 1-2-5-4z" fill="#00c3ff"/><path d="M381 404l5 3 1-1-5-4z" fill="#00d4ff"/><path d="M605 366l4-3 3-4-5 4z" fill="#00ffa4"/><path d="M331 365l5 6 1-1-5-6z" fill="#00ffb4"/><path d="M403 414l5 3 1-2-5-3z" fill="#00b5ff"/><path d="M370 397l5 4 1-1-5-5z" fill="#00e8ff"/><path d="M544 407l5-2 2-3-5 1z" fill="#00d5ff"/><path d="M651 317l4-5 3-4-5 6z" fill="#00ff04"/><path d="M414 418l5 2 1-2-5-3z" fill="#00abff"/><path d="M359 389l5 5 1-1-5-5z" fill="#00fffe"/><path d="M451 425l5 1 1-3-4-1z" fill="#0097ff"/><path d="M625 346l5-4 3-4-5 5z" fill="#00ff63"/><path d="M493 423l5 0 2-3-5-1z" fill="#00a1ff"/><path d="M509 419l4 0 2-3-4 0z" fill="#00acff"/><path d="M580 386l5-3 2-4-5 3z" fill="#00ffe2"/><path d="M425 420l4 3 2-3-5-2z" fill="#00a4ff"/><path d="M320 353l5 6 1 0-5-7z" fill="#00ff8e"/><path d="M560 398l4-2 3-3-5 2z" fill="#00f2ff"/><path d="M478 424l4 1 2-3-5-1z" fill="#009bff"/><path d="M348 380l5 5 1-1-5-5z" fill="#00ffe2"/><path d="M524 415l5-1 2-4-5 1z" fill="#00bdff"/><path d="M600 370l5-4 2-3-4 3z" fill="#00ffae"/><path d="M646 323l5-6 2-3-4 5z" fill="#00ff16"/><path d="M621 351l4-5 3-3-4 4z" fill="#00ff70"/><path d="M540 408l4-1 2-4-4 2z" fill="#00d3ff"/><path d="M462 425l5 1 1-3-4-1z" fill="#009aff"/><path d="M436 422l4 2 2-3-5-2z" fill="#00a0ff"/><path d="M337 370l5 6 1-1-5-6z" fill="#00ffc2"/><path d="M576 388l4-2 2-4-4 3z" fill="#00ffe9"/><path d="M596 373l4-3 3-4-5 4z" fill="#00ffb8"/><path d="M642 328l4-5 3-4-5 6z" fill="#00ff26"/><path d="M387 406l5 3 1-2-4-3z" fill="#00d1ff"/><path d="M376 400l5 4 1-2-4-4z" fill="#00e3ff"/><path d="M398 411l5 3 1-2-4-4z" fill="#00c2ff"/><path d="M555 400l5-2 2-3-4 2z" fill="#00eeff"/><path d="M504 420l5-1 2-3-5 0z" fill="#00adff"/><path d="M489 422l4 1 2-4-5 0z" fill="#00a4ff"/><path d="M447 423l4 2 2-3-5-2z" fill="#009fff"/><path d="M365 393l5 4 1-2-4-4z" fill="#00f9ff"/><path d="M616 355l5-4 3-4-5 4z" fill="#00ff7c"/><path d="M520 415l4 0 2-4-4 1z" fill="#00bcff"/><path d="M409 415l5 3 1-3-4-3z" fill="#00b7ff"/><path d="M326 359l5 6 1-1-5-6z" fill="#00ff9f"/><path d="M473 424l5 0 1-3-4-1z" fill="#009fff"/><path d="M354 384l5 5 1-1-4-5z" fill="#00ffec"/><path d="M535 409l5-1 2-3-5 1z" fill="#00d0ff"/><path d="M420 418l5 2 1-2-4-3z" fill="#00aeff"/><path d="M637 333l5-5 2-3-4 5z" fill="#00ff35"/><path d="M591 376l5-3 2-3-4 3z" fill="#00ffc1"/><path d="M571 391l5-3 2-3-5 2z" fill="#00fff0"/><path d="M457 423l5 2 2-3-5-2z" fill="#00a0ff"/><path d="M343 375l5 5 1-1-5-5z" fill="#00ffcf"/><path d="M612 359l4-4 3-4-5 4z" fill="#00ff88"/><path d="M431 420l5 2 1-3-4-2z" fill="#00a9ff"/><path d="M551 402l4-2 3-3-5 1z" fill="#00eaff"/><path d="M500 420l4 0 2-4-4 0z" fill="#00afff"/><path d="M633 338l4-5 3-3-5 4z" fill="#00ff44"/><path d="M515 416l5-1 2-3-5 0z" fill="#00bcff"/><path d="M484 422l5 0 1-3-4 0z" fill="#00a7ff"/><path d="M332 364l5 6 1-1-5-6z" fill="#00ffad"/><path d="M587 379l4-3 3-3-5 3z" fill="#00ffc9"/><path d="M442 421l5 2 1-3-4-2z" fill="#00a7ff"/><path d="M531 410l4-1 2-3-4 1z" fill="#00cfff"/><path d="M382 402l5 4 2-2-5-4z" fill="#00e0ff"/><path d="M567 393l4-2 2-4-4 2z" fill="#00fff5"/><path d="M393 407l5 4 2-3-5-3z" fill="#00cfff"/><path d="M607 363l5-4 2-4-4 4z" fill="#00ff93"/><path d="M371 395l5 5 2-2-5-4z" fill="#00f3ff"/><path d="M653 314l5-6 3-4-5 6z" fill="#0cff00"/><path d="M468 423l5 1 2-4-5-1z" fill="#00a4ff"/><path d="M404 412l5 3 2-3-5-3z" fill="#00c3ff"/><path d="M360 388l5 5 2-2-5-5z" fill="#00fff4"/><path d="M628 343l5-5 2-4-4 5z" fill="#00ff52"/><path d="M546 403l5-1 2-4-4 2z" fill="#00e7ff"/><path d="M321 352l5 7 1-1-5-6z" fill="#00ff88"/><path d="M415 415l5 3 2-3-5-2z" fill="#00b9ff"/><path d="M453 422l4 1 2-3-4-1z" fill="#00a7ff"/><path d="M349 379l5 5 2-1-5-5z" fill="#00ffd9"/><path d="M649 319l4-5 3-4-4 5z" fill="#00ff05"/><path d="M582 382l5-3 2-3-4 2z" fill="#00ffd1"/><path d="M603 366l4-3 3-4-5 3z" fill="#00ff9d"/><path d="M495 419l5 1 2-4-5 0z" fill="#00b2ff"/><path d="M511 416l4 0 2-4-4 0z" fill="#00bdff"/><path d="M426 418l5 2 2-3-5-2z" fill="#00b3ff"/><path d="M562 395l5-2 2-4-5 2z" fill="#00fffa"/><path d="M526 411l5-1 2-3-5 0z" fill="#00ceff"/><path d="M479 421l5 1 2-3-5-1z" fill="#00abff"/><path d="M624 347l4-4 3-4-5 4z" fill="#00ff5f"/><path d="M338 369l5 6 1-1-5-6z" fill="#00ffba"/><path d="M542 405l4-2 3-3-5 1z" fill="#00e4ff"/><path d="M437 419l5 2 2-3-5-2z" fill="#00afff"/><path d="M464 422l4 1 2-4-4-1z" fill="#00aaff"/><path d="M644 325l5-6 3-4-5 6z" fill="#00ff15"/><path d="M598 370l5-4 2-4-4 4z" fill="#00ffa7"/><path d="M578 385l4-3 3-4-5 3z" fill="#00ffd8"/><path d="M327 358l5 6 1-1-5-6z" fill="#00ff97"/><path d="M389 404l4 3 2-2-5-4z" fill="#00ddff"/><path d="M378 398l4 4 2-2-5-4z" fill="#00efff"/><path d="M400 408l4 4 2-3-5-3z" fill="#00cfff"/><path d="M367 391l4 4 2-1-5-5z" fill="#00fffa"/><path d="M619 351l5-4 2-4-4 4z" fill="#00ff6b"/><path d="M558 397l4-2 2-4-4 2z" fill="#00fffe"/><path d="M506 416l5 0 2-4-5 1z" fill="#00bfff"/><path d="M411 412l4 3 2-2-5-3z" fill="#00c5ff"/><path d="M448 420l5 2 2-3-5-2z" fill="#00aeff"/><path d="M356 383l4 5 2-2-5-5z" fill="#00ffe2"/><path d="M490 419l5 0 2-3-5 0z" fill="#00b5ff"/><path d="M522 412l4-1 2-4-4 1z" fill="#00ceff"/><path d="M640 330l4-5 3-4-4 5z" fill="#00ff25"/><path d="M475 420l4 1 2-3-4-1z" fill="#00b0ff"/><path d="M422 415l4 3 2-3-5-3z" fill="#00bdff"/><path d="M537 406l5-1 2-4-4 1z" fill="#00e2ff"/><path d="M344 374l5 5 2-1-5-6z" fill="#00ffc5"/><path d="M594 373l4-3 3-4-5 3z" fill="#00ffb0"/><path d="M573 387l5-2 2-4-4 2z" fill="#00ffde"/><path d="M614 355l5-4 3-4-5 4z" fill="#00ff77"/><path d="M459 420l5 2 2-4-5-1z" fill="#00b1ff"/><path d="M635 334l5-4 3-4-5 4z" fill="#00ff33"/><path d="M553 398l5-1 2-4-5 1z" fill="#00fcff"/><path d="M433 417l4 2 2-3-5-2z" fill="#00b8ff"/><path d="M333 363l5 6 1-1-5-6z" fill="#00ffa5"/><path d="M656 310l5-6 3-4-5 6z" fill="#1dff00"/><path d="M502 416l4 0 2-3-4-1z" fill="#00c1ff"/><path d="M517 412l5 0 2-4-5 0z" fill="#00ceff"/><path d="M589 376l5-3 2-4-4 3z" fill="#00ffb8"/><path d="M384 400l5 4 1-3-5-4z" fill="#00ecff"/><path d="M486 419l4 0 2-3-4-1z" fill="#00b9ff"/><path d="M610 359l4-4 3-4-4 4z" fill="#00ff82"/><path d="M373 394l5 4 1-2-5-5z" fill="#00ffff"/><path d="M395 405l5 3 1-2-5-4z" fill="#00ddff"/><path d="M569 389l4-2 3-4-5 2z" fill="#00ffe3"/><path d="M444 418l4 2 2-3-5-2z" fill="#00b7ff"/><path d="M533 407l4-1 3-4-5 1z" fill="#00e1ff"/><path d="M322 352l5 6 1-1-5-6z" fill="#00ff81"/><path d="M362 386l5 5 1-2-5-5z" fill="#00ffe9"/><path d="M631 339l4-5 3-4-5 5z" fill="#00ff41"/><path d="M406 409l5 3 1-2-5-4z" fill="#00d1ff"/><path d="M470 419l5 1 2-3-5-1z" fill="#00b5ff"/><path d="M351 378l5 5 1-2-5-5z" fill="#00ffcf"/><path d="M549 400l4-2 2-4-4 2z" fill="#00f9ff"/><path d="M652 315l4-5 3-4-4 5z" fill="#0cff00"/><path d="M417 413l5 2 1-3-5-2z" fill="#00c8ff"/><path d="M605 362l5-3 3-4-5 3z" fill="#00ff8c"/><path d="M585 378l4-2 3-4-5 2z" fill="#00ffbf"/><path d="M455 419l4 1 2-3-5-2z" fill="#00b8ff"/><path d="M339 368l5 6 2-2-5-5z" fill="#00ffb1"/><path d="M626 343l5-4 2-4-4 4z" fill="#00ff4e"/><path d="M428 415l5 2 1-3-5-2z" fill="#00c2ff"/><path d="M564 391l5-2 2-4-4 2z" fill="#00ffe8"/><path d="M513 412l4 0 2-4-4 1z" fill="#00cfff"/><path d="M497 416l5 0 2-4-5 0z" fill="#00c4ff"/><path d="M528 407l5 0 2-4-4 0z" fill="#00e0ff"/><path d="M647 321l5-6 3-4-5 6z" fill="#00ff04"/><path d="M481 418l5 1 2-4-5-1z" fill="#00bdff"/><path d="M328 357l5 6 1-1-5-6z" fill="#00ff8f"/><path d="M544 401l5-1 2-4-5 1z" fill="#00f6ff"/><path d="M439 416l5 2 1-3-4-2z" fill="#00bfff"/><path d="M601 366l4-4 3-4-5 4z" fill="#00ff95"/><path d="M379 396l5 4 1-3-5-4z" fill="#00fcff"/><path d="M466 418l4 1 2-3-5-1z" fill="#00bbff"/><path d="M390 401l5 4 1-3-5-3z" fill="#00ebff"/><path d="M580 381l5-3 2-4-4 3z" fill="#00ffc5"/><path d="M622 347l4-4 3-4-5 4z" fill="#00ff5a"/><path d="M368 389l5 5 1-3-5-4z" fill="#00ffee"/><path d="M401 406l5 3 1-3-4-3z" fill="#00deff"/><path d="M357 381l5 5 1-2-5-5z" fill="#00ffd7"/><path d="M643 326l4-5 3-4-5 4z" fill="#00ff13"/><path d="M560 393l4-2 3-4-5 2z" fill="#00ffec"/><path d="M412 410l5 3 1-3-4-3z" fill="#00d4ff"/><path d="M508 413l5-1 2-3-5 0z" fill="#00d1ff"/><path d="M450 417l5 2 1-4-4-1z" fill="#00bfff"/><path d="M346 372l5 6 1-2-5-5z" fill="#00ffbb"/><path d="M492 416l5 0 2-4-5 0z" fill="#00c7ff"/><path d="M524 408l4-1 3-4-5 1z" fill="#00e0ff"/><path d="M596 369l5-3 2-4-4 3z" fill="#00ff9d"/><path d="M617 351l5-4 2-4-4 4z" fill="#00ff65"/><path d="M423 412l5 3 1-3-4-3z" fill="#00cdff"/><path d="M477 417l4 1 2-4-4-1z" fill="#00c2ff"/><path d="M540 402l4-1 2-4-4 1z" fill="#00f5ff"/><path d="M576 383l4-2 3-4-5 2z" fill="#00ffcb"/><path d="M334 362l5 6 2-1-6-6z" fill="#00ff9c"/><path d="M638 330l5-4 2-5-4 5z" fill="#00ff22"/><path d="M659 306l5-6 3-4-5 6z" fill="#2eff00"/><path d="M555 394l5-1 2-4-4 1z" fill="#00fff0"/><path d="M461 417l5 1 1-3-4-2z" fill="#00c2ff"/><path d="M434 414l5 2 2-3-5-2z" fill="#00c9ff"/><path d="M323 351l5 6 1-1-5-6z" fill="#00ff78"/><path d="M613 355l4-4 3-4-5 4z" fill="#00ff70"/><path d="M592 372l4-3 3-4-5 2z" fill="#00ffa5"/><path d="M374 391l5 5 1-3-5-4z" fill="#00fff2"/><path d="M385 397l5 4 1-2-4-4z" fill="#00faff"/><path d="M633 335l5-5 3-4-5 5z" fill="#00ff2f"/><path d="M504 412l4 1 2-4-4-1z" fill="#00d3ff"/><path d="M363 384l5 5 1-2-5-5z" fill="#00ffdd"/><path d="M396 402l5 4 2-3-5-3z" fill="#00ebff"/><path d="M519 408l5 0 2-4-5 0z" fill="#00e1ff"/><path d="M571 385l5-2 2-4-4 2z" fill="#00ffd1"/><path d="M488 415l4 1 2-4-4-1z" fill="#00cbff"/><path d="M655 311l4-5 3-4-5 5z" fill="#1dff00"/><path d="M535 403l5-1 2-4-5 1z" fill="#00f4ff"/><path d="M445 415l5 2 2-3-5-2z" fill="#00c8ff"/><path d="M352 376l5 5 1-2-5-5z" fill="#00ffc4"/><path d="M407 406l5 4 2-3-5-4z" fill="#00e0ff"/><path d="M472 416l5 1 2-4-5-1z" fill="#00c7ff"/><path d="M551 396l4-2 3-4-5 1z" fill="#00fff2"/><path d="M341 367l5 5 1-1-5-6z" fill="#00ffa7"/><path d="M418 410l5 2 2-3-5-3z" fill="#00d8ff"/><path d="M608 358l5-3 2-4-4 3z" fill="#00ff79"/><path d="M629 339l4-4 3-4-4 4z" fill="#00ff3c"/><path d="M587 374l5-2 2-5-4 3z" fill="#00ffac"/><path d="M650 317l5-6 2-4-4 5z" fill="#0dff00"/><path d="M456 415l5 2 2-4-5-1z" fill="#00c9ff"/><path d="M329 356l5 6 1-1-5-7z" fill="#00ff86"/><path d="M567 387l4-2 3-4-5 2z" fill="#00ffd5"/><path d="M429 412l5 2 2-3-5-3z" fill="#00d3ff"/><path d="M515 409l4-1 2-4-4 0z" fill="#00e2ff"/><path d="M499 412l5 0 2-4-5 0z" fill="#00d6ff"/><path d="M531 403l4 0 2-4-4 0z" fill="#00f3ff"/><path d="M483 414l5 1 2-4-5-1z" fill="#00cfff"/><path d="M603 362l5-4 3-4-5 3z" fill="#00ff82"/><path d="M624 343l5-4 3-4-5 4z" fill="#00ff48"/><path d="M380 393l5 4 2-2-5-4z" fill="#00fff5"/><path d="M369 387l5 4 1-2-5-5z" fill="#00ffe2"/><path d="M546 397l5-1 2-5-4 2z" fill="#00fff5"/><path d="M645 321l5-4 3-5-5 5z" fill="#00ff02"/><path d="M391 399l5 3 2-2-5-4z" fill="#00f9ff"/><path d="M583 377l4-3 3-4-5 2z" fill="#00ffb3"/><path d="M441 413l4 2 2-3-5-3z" fill="#00d0ff"/><path d="M358 379l5 5 1-2-5-5z" fill="#00ffcb"/><path d="M467 415l5 1 2-4-5-1z" fill="#00cdff"/><path d="M403 403l4 3 2-3-5-3z" fill="#00edff"/><path d="M347 371l5 5 1-2-5-5z" fill="#00ffb0"/><path d="M562 389l5-2 2-4-4 1z" fill="#00ffd9"/><path d="M414 407l4 3 2-4-5-3z" fill="#00e4ff"/><path d="M620 347l4-4 3-4-5 4z" fill="#00ff53"/><path d="M510 409l5 0 2-5-5 0z" fill="#00e4ff"/><path d="M599 365l4-3 3-5-4 3z" fill="#00ff8b"/><path d="M452 414l4 1 2-3-5-2z" fill="#00d1ff"/><path d="M335 361l6 6 1-2-5-6z" fill="#00ff92"/><path d="M641 326l4-5 3-4-4 5z" fill="#00ff10"/><path d="M526 404l5-1 2-4-5 1z" fill="#00f3ff"/><path d="M494 412l5 0 2-4-5-1z" fill="#00daff"/><path d="M662 302l5-6 3-4-5 5z" fill="#3fff00"/><path d="M578 379l5-2 2-5-4 2z" fill="#00ffb9"/><path d="M425 409l4 3 2-4-5-2z" fill="#00ddff"/><path d="M542 398l4-1 3-4-5 0z" fill="#00fff6"/><path d="M479 413l4 1 2-4-5-1z" fill="#00d4ff"/><path d="M324 350l5 6 1-2-5-6z" fill="#00ff6f"/><path d="M558 390l4-1 3-5-5 2z" fill="#00ffdc"/><path d="M615 351l5-4 2-4-4 3z" fill="#00ff5d"/><path d="M436 411l5 2 1-4-5-2z" fill="#00daff"/><path d="M463 413l4 2 2-4-4-2z" fill="#00d4ff"/><path d="M636 331l5-5 3-4-5 4z" fill="#00ff1d"/><path d="M594 367l5-2 3-5-5 3z" fill="#00ff92"/><path d="M375 389l5 4 2-2-5-5z" fill="#00ffe5"/><path d="M657 307l5-5 3-5-5 6z" fill="#2fff00"/><path d="M387 395l4 4 2-3-5-4z" fill="#00fff6"/><path d="M364 382l5 5 1-3-5-4z" fill="#00ffd0"/><path d="M398 400l5 3 1-3-5-4z" fill="#00fbff"/><path d="M353 374l5 5 1-2-5-5z" fill="#00ffb8"/><path d="M574 381l4-2 3-5-5 2z" fill="#00ffbe"/><path d="M506 408l4 1 2-5-4 0z" fill="#00e6ff"/><path d="M521 404l5 0 2-4-4 0z" fill="#00f4ff"/><path d="M490 411l4 1 2-5-4 0z" fill="#00deff"/><path d="M409 403l5 4 1-4-5-3z" fill="#00f0ff"/><path d="M537 399l5-1 2-5-5 1z" fill="#00fff7"/><path d="M342 365l5 6 1-2-5-6z" fill="#00ff9c"/><path d="M447 412l5 2 1-4-4-2z" fill="#00d9ff"/><path d="M632 335l4-4 3-5-5 4z" fill="#00ff29"/><path d="M611 354l4-3 3-5-5 4z" fill="#00ff67"/><path d="M653 312l4-5 3-4-4 5z" fill="#1fff00"/><path d="M474 412l5 1 1-4-4-1z" fill="#00daff"/><path d="M553 391l5-1 2-4-4 1z" fill="#00ffdf"/><path d="M420 406l5 3 1-3-4-3z" fill="#00e9ff"/><path d="M590 370l4-3 3-4-5 2z" fill="#00ff99"/><path d="M330 354l5 7 2-2-6-6z" fill="#00ff7c"/><path d="M569 383l5-2 2-5-4 2z" fill="#00ffc2"/><path d="M458 412l5 1 2-4-5-1z" fill="#00dbff"/><path d="M431 408l5 3 1-4-4-2z" fill="#00e4ff"/><path d="M627 339l5-4 2-5-4 4z" fill="#00ff35"/><path d="M517 404l4 0 3-4-5 0z" fill="#00f6ff"/><path d="M648 317l5-5 3-4-5 5z" fill="#11ff00"/><path d="M501 408l5 0 2-4-5 0z" fill="#00e9ff"/><path d="M606 357l5-3 2-4-4 3z" fill="#00ff70"/><path d="M533 399l4 0 2-5-4 1z" fill="#00fff7"/><path d="M370 384l5 5 2-3-5-4z" fill="#00ffd4"/><path d="M382 391l5 4 1-3-5-4z" fill="#00ffe6"/><path d="M485 410l5 1 2-4-5-1z" fill="#00e2ff"/><path d="M359 377l5 5 1-2-5-6z" fill="#00ffbe"/><path d="M585 372l5-2 2-5-4 3z" fill="#00ffa0"/><path d="M393 396l5 4 1-4-5-3z" fill="#00fff5"/><path d="M549 393l4-2 3-4-5 1z" fill="#00ffe1"/><path d="M442 409l5 3 2-4-5-3z" fill="#00e2ff"/><path d="M348 369l5 5 1-2-5-6z" fill="#00ffa4"/><path d="M404 400l5 3 1-3-5-3z" fill="#00fdff"/><path d="M469 411l5 1 2-4-5-1z" fill="#00e0ff"/><path d="M565 384l4-1 3-5-5 2z" fill="#00ffc6"/><path d="M644 322l4-5 3-4-5 4z" fill="#03ff00"/><path d="M665 297l5-5 3-5-5 6z" fill="#51ff00"/><path d="M337 359l5 6 1-2-5-6z" fill="#00ff87"/><path d="M622 343l5-4 3-5-5 4z" fill="#00ff40"/><path d="M415 403l5 3 2-3-5-3z" fill="#00f4ff"/><path d="M602 360l4-3 3-4-5 3z" fill="#00ff78"/><path d="M512 404l5 0 2-4-5 0z" fill="#00f8ff"/><path d="M453 410l5 2 2-4-5-2z" fill="#00e3ff"/><path d="M325 348l5 6 1-1-5-7z" fill="#00ff65"/><path d="M528 400l5-1 2-4-5 0z" fill="#00fff7"/><path d="M581 374l4-2 3-4-5 2z" fill="#00ffa5"/><path d="M496 407l5 1 2-4-5-1z" fill="#00edff"/><path d="M426 406l5 2 2-3-5-3z" fill="#00efff"/><path d="M544 393l5 0 2-5-5 1z" fill="#00ffe2"/><path d="M480 409l5 1 2-4-5-1z" fill="#00e7ff"/><path d="M660 303l5-6 3-4-5 5z" fill="#41ff00"/><path d="M639 326l5-4 2-5-4 5z" fill="#00ff0a"/><path d="M618 346l4-3 3-5-4 4z" fill="#00ff4a"/><path d="M560 386l5-2 2-4-5 1z" fill="#00ffc9"/><path d="M597 363l5-3 2-4-4 2z" fill="#00ff7f"/><path d="M377 386l5 5 1-3-5-5z" fill="#00ffd6"/><path d="M365 380l5 4 2-2-5-5z" fill="#00ffc2"/><path d="M437 407l5 2 2-4-5-2z" fill="#00ecff"/><path d="M388 392l5 4 1-3-5-4z" fill="#00ffe6"/><path d="M465 409l4 2 2-4-5-2z" fill="#00e7ff"/><path d="M354 372l5 5 1-3-5-5z" fill="#00ffab"/><path d="M399 396l5 4 1-3-4-4z" fill="#00fff3"/><path d="M576 376l5-2 2-4-4 2z" fill="#00ffaa"/><path d="M343 363l5 6 1-3-5-6z" fill="#00ff90"/><path d="M656 308l4-5 3-5-4 5z" fill="#32ff00"/><path d="M634 330l5-4 3-4-5 4z" fill="#00ff17"/><path d="M524 400l4 0 2-5-4 0z" fill="#00fff6"/><path d="M508 404l4 0 2-4-4 0z" fill="#00faff"/><path d="M410 400l5 3 2-3-5-4z" fill="#00fffd"/><path d="M613 350l5-4 3-4-5 3z" fill="#00ff54"/><path d="M539 394l5-1 2-4-4 1z" fill="#00ffe3"/><path d="M492 407l4 0 2-4-4-1z" fill="#00f1ff"/><path d="M331 353l6 6 1-2-5-7z" fill="#00ff71"/><path d="M449 408l4 2 2-4-5-2z" fill="#00ecff"/><path d="M592 365l5-2 3-5-5 3z" fill="#00ff86"/><path d="M556 387l4-1 2-5-4 1z" fill="#00ffcb"/><path d="M476 408l4 1 2-4-4-1z" fill="#00edff"/><path d="M422 403l4 3 2-4-5-3z" fill="#00faff"/><path d="M651 313l5-5 3-5-5 5z" fill="#23ff00"/><path d="M572 378l4-2 3-4-5 1z" fill="#00ffae"/><path d="M630 334l4-4 3-4-4 4z" fill="#00ff22"/><path d="M609 353l4-3 3-5-5 3z" fill="#00ff5c"/><path d="M460 408l5 1 1-4-4-2z" fill="#00efff"/><path d="M433 405l4 2 2-4-5-3z" fill="#00f6ff"/><path d="M372 382l5 4 1-3-5-5z" fill="#00ffc5"/><path d="M519 400l5 0 2-5-5 0z" fill="#00fff4"/><path d="M360 374l5 6 2-3-5-5z" fill="#00ffb0"/><path d="M383 388l5 4 1-3-5-5z" fill="#00ffd7"/><path d="M503 404l5 0 2-4-5-1z" fill="#00fdff"/><path d="M535 395l4-1 3-4-5 0z" fill="#00ffe3"/><path d="M588 368l4-3 3-4-5 2z" fill="#00ff8c"/><path d="M349 366l5 6 1-3-5-5z" fill="#00ff97"/><path d="M394 393l5 3 2-3-5-4z" fill="#00ffe5"/><path d="M668 293l5-6 3-5-5 6z" fill="#63ff00"/><path d="M487 406l5 1 2-5-5-1z" fill="#00f6ff"/><path d="M551 388l5-1 2-5-5 1z" fill="#00ffcd"/><path d="M646 317l5-4 3-5-5 5z" fill="#15ff00"/><path d="M338 357l5 6 1-3-5-6z" fill="#00ff7b"/><path d="M625 338l5-4 3-4-5 3z" fill="#00ff2d"/><path d="M405 397l5 3 2-4-5-3z" fill="#00fff0"/><path d="M444 405l5 3 1-4-4-3z" fill="#00f5ff"/><path d="M567 380l5-2 2-5-5 2z" fill="#00ffb2"/><path d="M471 407l5 1 2-4-5-2z" fill="#00f4ff"/><path d="M604 356l5-3 2-5-4 3z" fill="#00ff64"/><path d="M326 346l5 7 2-3-6-6z" fill="#00ff5a"/><path d="M417 400l5 3 1-4-5-3z" fill="#00fff8"/><path d="M663 298l5-5 3-5-5 5z" fill="#53ff00"/><path d="M583 370l5-2 2-5-4 2z" fill="#00ff91"/><path d="M642 322l4-5 3-4-4 4z" fill="#08ff00"/><path d="M514 400l5 0 2-5-5 0z" fill="#00fff2"/><path d="M455 406l5 2 2-5-5-2z" fill="#00f7ff"/><path d="M530 395l5 0 2-5-4 0z" fill="#00ffe3"/><path d="M498 403l5 1 2-5-5-1z" fill="#00fffd"/><path d="M621 342l4-4 3-5-5 4z" fill="#00ff37"/><path d="M428 402l5 3 1-5-4-2z" fill="#00fffd"/><path d="M546 389l5-1 2-5-4 1z" fill="#00ffce"/><path d="M482 405l5 1 2-5-5-1z" fill="#00fbff"/><path d="M600 358l4-2 3-5-5 2z" fill="#00ff6b"/><path d="M367 377l5 5 1-4-5-5z" fill="#00ffb3"/><path d="M562 381l5-1 2-5-4 1z" fill="#00ffb4"/><path d="M378 383l5 5 1-4-5-4z" fill="#00ffc6"/><path d="M355 369l5 5 2-2-5-6z" fill="#00ff9d"/><path d="M389 389l5 4 2-4-5-4z" fill="#00ffd6"/><path d="M659 303l4-5 3-5-4 5z" fill="#44ff00"/><path d="M344 360l5 6 1-2-5-6z" fill="#00ff83"/><path d="M439 403l5 2 2-4-5-2z" fill="#00ffff"/><path d="M637 326l5-4 3-5-5 4z" fill="#00ff04"/><path d="M466 405l5 2 2-5-5-2z" fill="#00fbff"/><path d="M579 372l4-2 3-5-5 2z" fill="#00ff96"/><path d="M401 393l4 4 2-4-5-4z" fill="#00ffe2"/><path d="M333 350l5 7 1-3-5-6z" fill="#00ff65"/><path d="M616 345l5-3 2-5-4 3z" fill="#00ff40"/><path d="M526 395l4 0 3-5-5 1z" fill="#00ffe1"/><path d="M510 400l4 0 2-5-4 0z" fill="#00ffef"/><path d="M412 396l5 4 1-4-5-4z" fill="#00ffeb"/><path d="M542 390l4-1 3-5-5 1z" fill="#00ffce"/><path d="M595 361l5-3 2-5-4 3z" fill="#00ff72"/><path d="M494 402l4 1 2-5-4 0z" fill="#00fff8"/><path d="M654 308l5-5 3-5-5 5z" fill="#36ff00"/><path d="M450 404l5 2 2-5-5-2z" fill="#00ffff"/><path d="M558 382l4-1 3-5-5 1z" fill="#00ffb7"/><path d="M633 330l4-4 3-5-5 4z" fill="#00ff0f"/><path d="M423 399l5 3 2-4-5-3z" fill="#00fff1"/><path d="M478 404l4 1 2-5-4-1z" fill="#00fffd"/><path d="M574 373l5-1 2-5-4 2z" fill="#00ff9a"/><path d="M611 348l5-3 3-5-5 3z" fill="#00ff48"/><path d="M373 378l5 5 1-3-5-5z" fill="#00ffb5"/><path d="M362 372l5 5 1-4-5-5z" fill="#00ffa1"/><path d="M462 403l4 2 2-5-5-1z" fill="#00fffc"/><path d="M434 400l5 3 2-4-5-3z" fill="#00fff5"/><path d="M649 313l5-5 3-5-5 5z" fill="#28ff00"/><path d="M384 384l5 5 2-4-5-4z" fill="#00ffc6"/><path d="M350 364l5 5 2-3-5-6z" fill="#00ff89"/><path d="M590 363l5-2 3-5-5 2z" fill="#00ff78"/><path d="M521 395l5 0 2-4-5-1z" fill="#00ffe0"/><path d="M537 390l5 0 2-5-5 0z" fill="#00ffce"/><path d="M505 399l5 1 2-5-5-1z" fill="#00ffec"/><path d="M339 354l5 6 1-2-5-7z" fill="#00ff6d"/><path d="M396 389l5 4 1-4-5-4z" fill="#00ffd4"/><path d="M628 333l5-3 2-5-4 4z" fill="#00ff19"/><path d="M553 383l5-1 2-5-4 1z" fill="#00ffb8"/><path d="M489 401l5 1 2-4-5-1z" fill="#00fff3"/><path d="M327 344l6 6 1-2-5-7z" fill="#00ff4e"/><path d="M407 393l5 3 1-4-5-3z" fill="#00ffde"/><path d="M607 351l4-3 3-5-5 3z" fill="#00ff50"/><path d="M446 401l4 3 2-5-5-2z" fill="#00fff5"/><path d="M569 375l5-2 3-4-5 1z" fill="#00ff9d"/><path d="M473 402l5 2 2-5-5-2z" fill="#00fff6"/><path d="M645 317l4-4 3-5-4 4z" fill="#1cff00"/><path d="M418 396l5 3 2-4-5-4z" fill="#00ffe5"/><path d="M586 365l4-2 3-5-5 2z" fill="#00ff7d"/><path d="M623 337l5-4 3-4-5 3z" fill="#00ff23"/><path d="M533 390l4 0 2-5-4 0z" fill="#00ffce"/><path d="M516 395l5 0 2-5-4 0z" fill="#00ffdd"/><path d="M457 401l5 2 1-4-4-2z" fill="#00fff3"/><path d="M549 384l4-1 3-5-5 1z" fill="#00ffb9"/><path d="M500 398l5 1 2-5-5 0z" fill="#00ffe8"/><path d="M430 398l4 2 2-4-5-3z" fill="#00ffea"/><path d="M602 353l5-2 2-5-4 3z" fill="#00ff57"/><path d="M368 373l5 5 1-3-5-5z" fill="#00ffa4"/><path d="M357 366l5 6 1-4-5-5z" fill="#00ff8e"/><path d="M379 380l5 4 2-3-5-5z" fill="#00ffb6"/><path d="M565 376l4-1 3-5-5 1z" fill="#00ffa0"/><path d="M640 321l5-4 3-5-5 4z" fill="#10ff00"/><path d="M345 358l5 6 2-4-6-5z" fill="#00ff75"/><path d="M484 400l5 1 2-4-5-2z" fill="#00ffee"/><path d="M391 385l5 4 1-4-5-4z" fill="#00ffc5"/><path d="M334 348l5 6 1-3-5-6z" fill="#00ff57"/><path d="M619 340l4-3 3-5-4 3z" fill="#00ff2c"/><path d="M581 367l5-2 2-5-4 2z" fill="#00ff81"/><path d="M441 399l5 2 1-4-4-3z" fill="#00ffec"/><path d="M402 389l5 4 1-4-4-4z" fill="#00ffd0"/><path d="M468 400l5 2 2-5-5-1z" fill="#00ffef"/><path d="M598 356l4-3 3-4-5 2z" fill="#00ff5d"/><path d="M528 391l5-1 2-5-5 0z" fill="#00ffcc"/><path d="M413 392l5 4 2-5-5-3z" fill="#00ffd9"/><path d="M512 395l4 0 3-5-5 0z" fill="#00ffda"/><path d="M635 325l5-4 3-5-5 4z" fill="#05ff00"/><path d="M544 385l5-1 2-5-5 1z" fill="#00ffb9"/><path d="M496 398l4 0 2-4-4-1z" fill="#00ffe3"/><path d="M560 377l5-1 2-5-4 1z" fill="#00ffa2"/><path d="M452 399l5 2 2-4-5-3z" fill="#00ffeb"/><path d="M614 343l5-3 3-5-5 3z" fill="#00ff34"/><path d="M425 395l5 3 1-5-5-3z" fill="#00ffde"/><path d="M577 369l4-2 3-5-5 1z" fill="#00ff85"/><path d="M480 399l4 1 2-5-5-1z" fill="#00ffe8"/><path d="M363 368l5 5 1-3-5-5z" fill="#00ff91"/><path d="M374 375l5 5 2-4-5-5z" fill="#00ffa5"/><path d="M352 360l5 6 1-3-5-6z" fill="#00ff7a"/><path d="M593 358l5-2 2-5-4 2z" fill="#00ff63"/><path d="M631 329l4-4 3-5-4 4z" fill="#00ff06"/><path d="M386 381l5 4 1-4-5-4z" fill="#00ffb5"/><path d="M340 351l5 7 1-3-5-7z" fill="#00ff5f"/><path d="M436 396l5 3 2-5-5-3z" fill="#00ffe1"/><path d="M463 399l5 1 2-4-5-2z" fill="#00ffe7"/><path d="M523 390l5 1 2-6-5 0z" fill="#00ffca"/><path d="M539 385l5 0 2-5-4 0z" fill="#00ffb9"/><path d="M329 341l5 7 1-3-5-7z" fill="#00ff41"/><path d="M397 385l5 4 2-4-5-4z" fill="#00ffc2"/><path d="M507 394l5 1 2-5-5-1z" fill="#00ffd7"/><path d="M556 378l4-1 3-5-5 1z" fill="#00ffa3"/><path d="M609 346l5-3 3-5-5 3z" fill="#00ff3c"/><path d="M491 397l5 1 2-5-5-2z" fill="#00ffde"/><path d="M408 389l5 3 2-4-5-4z" fill="#00ffcb"/><path d="M572 370l5-1 2-6-5 2z" fill="#00ff88"/><path d="M447 397l5 2 2-5-5-2z" fill="#00ffe1"/><path d="M626 332l5-3 3-5-5 3z" fill="#00ff0f"/><path d="M588 360l5-2 3-5-5 2z" fill="#00ff68"/><path d="M475 397l5 2 1-5-4-2z" fill="#00ffe1"/><path d="M420 391l5 4 1-5-5-3z" fill="#00ffd2"/><path d="M605 349l4-3 3-5-4 2z" fill="#00ff43"/><path d="M535 385l4 0 3-5-5 0z" fill="#00ffb8"/><path d="M519 390l4 0 2-5-4 0z" fill="#00ffc8"/><path d="M551 379l5-1 2-5-5 1z" fill="#00ffa4"/><path d="M358 363l5 5 1-3-5-6z" fill="#00ff7e"/><path d="M459 397l4 2 2-5-5-2z" fill="#00ffdf"/><path d="M369 370l5 5 2-4-5-5z" fill="#00ff93"/><path d="M346 355l6 5 1-3-5-6z" fill="#00ff66"/><path d="M431 393l5 3 2-5-5-2z" fill="#00ffd6"/><path d="M502 394l5 0 2-5-5-1z" fill="#00ffd3"/><path d="M381 376l5 5 1-4-5-5z" fill="#00ffa4"/><path d="M567 371l5-1 2-5-4 1z" fill="#00ff8a"/><path d="M335 345l5 6 1-3-5-6z" fill="#00ff49"/><path d="M622 335l4-3 3-5-5 3z" fill="#00ff18"/><path d="M392 381l5 4 2-4-5-4z" fill="#00ffb2"/><path d="M486 395l5 2 2-6-5-1z" fill="#00ffd9"/><path d="M584 362l4-2 3-5-5 2z" fill="#00ff6c"/><path d="M404 385l4 4 2-5-5-3z" fill="#00ffbd"/><path d="M443 394l4 3 2-5-5-3z" fill="#00ffd7"/><path d="M600 351l5-2 3-6-5 3z" fill="#00ff49"/><path d="M470 396l5 1 2-5-5-1z" fill="#00ffda"/><path d="M530 385l5 0 2-5-5 0z" fill="#00ffb7"/><path d="M415 388l5 3 1-4-5-4z" fill="#00ffc5"/><path d="M546 380l5-1 2-5-4 0z" fill="#00ffa4"/><path d="M514 390l5 0 2-5-5 0z" fill="#00ffc5"/><path d="M617 338l5-3 2-5-4 3z" fill="#00ff20"/><path d="M563 372l4-1 3-5-5 1z" fill="#00ff8c"/><path d="M498 393l4 1 2-6-4-1z" fill="#00ffce"/><path d="M454 394l5 3 1-5-4-3z" fill="#00ffd6"/><path d="M579 363l5-1 2-5-4 1z" fill="#00ff70"/><path d="M426 390l5 3 2-4-5-4z" fill="#00ffca"/><path d="M364 365l5 5 2-4-5-5z" fill="#00ff81"/><path d="M353 357l5 6 1-4-5-6z" fill="#00ff6a"/><path d="M481 394l5 1 2-5-5-1z" fill="#00ffd2"/><path d="M376 371l5 5 1-4-5-5z" fill="#00ff93"/><path d="M341 348l5 7 2-4-6-6z" fill="#00ff50"/><path d="M596 353l4-2 3-5-5 2z" fill="#00ff4e"/><path d="M330 338l5 7 1-3-5-7z" fill="#00ff33"/><path d="M387 377l5 4 2-4-5-5z" fill="#00ffa3"/><path d="M612 341l5-3 3-5-5 3z" fill="#00ff27"/><path d="M438 391l5 3 1-5-5-2z" fill="#00ffcc"/><path d="M465 394l5 2 2-5-5-2z" fill="#00ffd2"/><path d="M399 381l5 4 1-4-5-5z" fill="#00ffaf"/><path d="M542 380l4 0 3-6-5 1z" fill="#00ffa3"/><path d="M525 385l5 0 2-5-4 0z" fill="#00ffb4"/><path d="M558 373l5-1 2-5-5 1z" fill="#00ff8d"/><path d="M509 389l5 1 2-5-5-1z" fill="#00ffc1"/><path d="M574 365l5-2 3-5-5 2z" fill="#00ff73"/><path d="M410 384l5 4 1-5-4-3z" fill="#00ffb8"/><path d="M493 391l5 2 2-6-5-1z" fill="#00ffc8"/><path d="M591 355l5-2 2-5-4 2z" fill="#00ff53"/><path d="M449 392l5 2 2-5-5-2z" fill="#00ffcc"/><path d="M477 392l4 2 2-5-4-2z" fill="#00ffcb"/><path d="M421 387l5 3 2-5-5-3z" fill="#00ffbe"/><path d="M608 343l4-2 3-5-5 2z" fill="#00ff2e"/><path d="M359 359l5 6 2-4-6-6z" fill="#00ff6d"/><path d="M348 351l5 6 1-4-5-6z" fill="#00ff56"/><path d="M371 366l5 5 1-4-5-5z" fill="#00ff82"/><path d="M537 380l5 0 2-5-5 0z" fill="#00ffa2"/><path d="M553 374l5-1 2-5-4 0z" fill="#00ff8e"/><path d="M336 342l5 6 1-3-5-7z" fill="#00ff3a"/><path d="M521 385l4 0 3-5-5 0z" fill="#00ffb2"/><path d="M382 372l5 5 2-5-5-4z" fill="#00ff92"/><path d="M570 366l4-1 3-5-5 1z" fill="#00ff75"/><path d="M460 392l5 2 2-5-5-3z" fill="#00ffc9"/><path d="M433 389l5 2 1-4-5-3z" fill="#00ffc1"/><path d="M504 388l5 1 2-5-4-1z" fill="#00ffbc"/><path d="M586 357l5-2 3-5-5 1z" fill="#00ff57"/><path d="M394 377l5 4 1-5-5-4z" fill="#00ff9f"/><path d="M488 390l5 1 2-5-5-1z" fill="#00ffc3"/><path d="M603 346l5-3 2-5-4 2z" fill="#00ff34"/><path d="M405 381l5 3 2-4-5-4z" fill="#00ffaa"/><path d="M444 389l5 3 2-5-5-3z" fill="#00ffc2"/><path d="M472 391l5 1 2-5-5-2z" fill="#00ffc4"/><path d="M549 374l4 0 3-6-5 1z" fill="#00ff8e"/><path d="M532 380l5 0 2-5-4 0z" fill="#00ffa0"/><path d="M416 383l5 4 2-5-5-3z" fill="#00ffb1"/><path d="M565 367l5-1 2-5-4 1z" fill="#00ff76"/><path d="M516 385l5 0 2-5-5-1z" fill="#00ffae"/><path d="M582 358l4-1 3-6-5 2z" fill="#00ff5a"/><path d="M500 387l4 1 3-5-5-1z" fill="#00ffb8"/><path d="M354 353l5 6 1-4-5-6z" fill="#00ff5a"/><path d="M456 389l4 3 2-6-5-2z" fill="#00ffc0"/><path d="M342 345l6 6 1-4-5-6z" fill="#00ff41"/><path d="M366 361l5 5 1-4-5-5z" fill="#00ff6f"/><path d="M598 348l5-2 3-6-5 2z" fill="#00ff39"/><path d="M428 385l5 4 1-5-4-4z" fill="#00ffb5"/><path d="M331 335l5 7 1-4-5-6z" fill="#00ff24"/><path d="M377 367l5 5 2-4-6-5z" fill="#00ff81"/><path d="M483 389l5 1 2-5-5-2z" fill="#00ffbc"/><path d="M389 372l5 5 1-5-5-4z" fill="#00ff90"/><path d="M544 375l5-1 2-5-5 0z" fill="#00ff8d"/><path d="M400 376l5 5 2-5-5-4z" fill="#00ff9b"/><path d="M439 387l5 2 2-5-5-3z" fill="#00ffb7"/><path d="M560 368l5-1 3-5-5 0z" fill="#00ff77"/><path d="M528 380l4 0 3-5-5-1z" fill="#00ff9e"/><path d="M467 389l5 2 2-6-5-2z" fill="#00ffbc"/><path d="M577 360l5-2 2-5-4 1z" fill="#00ff5d"/><path d="M511 384l5 1 2-6-5-1z" fill="#00ffaa"/><path d="M594 350l4-2 3-6-5 2z" fill="#00ff3d"/><path d="M412 380l4 3 2-4-5-4z" fill="#00ffa3"/><path d="M495 386l5 1 2-5-5-1z" fill="#00ffb2"/><path d="M451 387l5 2 1-5-4-2z" fill="#00ffb6"/><path d="M423 382l5 3 2-5-5-3z" fill="#00ffa9"/><path d="M479 387l4 2 2-6-4-1z" fill="#00ffb5"/><path d="M349 347l5 6 1-4-5-6z" fill="#00ff45"/><path d="M360 355l6 6 1-4-5-6z" fill="#00ff5c"/><path d="M337 338l5 7 2-4-6-6z" fill="#00ff2b"/><path d="M372 362l5 5 1-4-5-5z" fill="#00ff6f"/><path d="M556 368l4 0 3-6-5 1z" fill="#00ff78"/><path d="M539 375l5 0 2-6-4 0z" fill="#00ff8c"/><path d="M572 361l5-1 3-6-5 1z" fill="#00ff5f"/><path d="M523 380l5 0 2-6-5 0z" fill="#00ff9b"/><path d="M384 368l5 4 1-4-5-5z" fill="#00ff7f"/><path d="M589 351l5-1 2-6-4 2z" fill="#00ff41"/><path d="M462 386l5 3 2-6-5-2z" fill="#00ffb3"/><path d="M434 384l5 3 2-6-5-3z" fill="#00ffac"/><path d="M507 383l4 1 2-6-4-1z" fill="#00ffa6"/><path d="M395 372l5 4 2-4-6-5z" fill="#00ff8c"/><path d="M490 385l5 1 2-5-5-2z" fill="#00ffac"/><path d="M407 376l5 4 1-5-5-4z" fill="#00ff95"/><path d="M446 384l5 3 2-5-5-3z" fill="#00ffac"/><path d="M474 385l5 2 2-5-5-2z" fill="#00ffad"/><path d="M551 369l5-1 2-5-4 0z" fill="#00ff77"/><path d="M568 362l4-1 3-6-5 1z" fill="#00ff60"/><path d="M535 375l4 0 3-6-5 0z" fill="#00ff8a"/><path d="M418 379l5 3 2-5-5-4z" fill="#00ff9c"/><path d="M584 353l5-2 3-5-5 1z" fill="#00ff44"/><path d="M518 379l5 1 2-6-5-1z" fill="#00ff98"/><path d="M344 341l5 6 1-4-5-6z" fill="#00ff30"/><path d="M355 349l5 6 2-4-6-6z" fill="#00ff48"/><path d="M332 332l5 6 1-3-5-7z" fill="#00ff14"/><path d="M367 357l5 5 1-4-5-6z" fill="#00ff5d"/><path d="M502 382l5 1 2-6-5-1z" fill="#00ffa1"/><path d="M457 384l5 2 2-5-5-2z" fill="#00ffaa"/><path d="M378 363l6 5 1-5-5-5z" fill="#00ff6e"/><path d="M430 380l4 4 2-6-5-3z" fill="#00ffa0"/><path d="M485 383l5 2 2-6-5-1z" fill="#00ffa5"/><path d="M390 368l5 4 1-5-5-4z" fill="#00ff7c"/><path d="M563 362l5 0 2-6-5 1z" fill="#00ff61"/><path d="M546 369l5 0 3-6-5 0z" fill="#00ff76"/><path d="M402 372l5 4 1-5-5-4z" fill="#00ff86"/><path d="M580 354l4-1 3-6-5 1z" fill="#00ff47"/><path d="M530 374l5 1 2-6-5 0z" fill="#00ff87"/><path d="M441 381l5 3 2-5-5-3z" fill="#00ffa1"/><path d="M469 383l5 2 2-5-5-2z" fill="#00ffa5"/><path d="M513 378l5 1 2-6-4-1z" fill="#00ff93"/><path d="M413 375l5 4 2-6-5-3z" fill="#00ff8e"/><path d="M497 381l5 1 2-6-5-1z" fill="#00ff9b"/><path d="M350 343l5 6 1-4-5-6z" fill="#00ff33"/><path d="M338 335l6 6 1-4-6-7z" fill="#00ff1a"/><path d="M453 382l4 2 2-5-5-3z" fill="#00ffa0"/><path d="M362 351l5 6 1-5-5-6z" fill="#00ff49"/><path d="M425 377l5 3 1-5-5-3z" fill="#00ff93"/><path d="M373 358l5 5 2-5-5-5z" fill="#00ff5c"/><path d="M481 382l4 1 2-5-4-2z" fill="#00ff9e"/><path d="M558 363l5-1 2-5-4 0z" fill="#00ff61"/><path d="M575 355l5-1 2-6-5 1z" fill="#00ff48"/><path d="M542 369l4 0 3-6-5 0z" fill="#00ff75"/><path d="M385 363l5 5 1-5-5-5z" fill="#00ff6b"/><path d="M525 374l5 0 2-5-5-1z" fill="#00ff84"/><path d="M509 377l4 1 3-6-5-1z" fill="#00ff8f"/><path d="M464 381l5 2 2-5-5-3z" fill="#00ff9c"/><path d="M436 378l5 3 2-5-5-3z" fill="#00ff96"/><path d="M396 367l6 5 1-5-5-5z" fill="#00ff77"/><path d="M492 379l5 2 2-6-5-2z" fill="#00ff95"/><path d="M408 371l5 4 2-5-5-5z" fill="#00ff80"/><path d="M448 379l5 3 1-6-5-3z" fill="#00ff95"/><path d="M570 356l5-1 2-6-4 1z" fill="#00ff49"/><path d="M554 363l4 0 3-6-5 0z" fill="#00ff60"/><path d="M537 369l5 0 2-6-5 0z" fill="#00ff73"/><path d="M476 380l5 2 2-6-5-2z" fill="#00ff96"/><path d="M345 337l5 6 1-4-5-6z" fill="#00ff1e"/><path d="M333 328l5 7 1-5-5-6z" fill="#00ff03"/><path d="M420 373l5 4 1-5-5-4z" fill="#00ff86"/><path d="M356 345l6 6 1-5-5-5z" fill="#00ff36"/><path d="M520 373l5 1 2-6-4-1z" fill="#00ff80"/><path d="M368 352l5 6 2-5-6-6z" fill="#00ff49"/><path d="M504 376l5 1 2-6-5-1z" fill="#00ff89"/><path d="M380 358l5 5 1-5-5-5z" fill="#00ff5a"/><path d="M459 379l5 2 2-6-5-2z" fill="#00ff93"/><path d="M431 375l5 3 2-5-5-4z" fill="#00ff8a"/><path d="M391 363l5 4 2-5-5-4z" fill="#00ff67"/><path d="M487 378l5 1 2-6-5-1z" fill="#00ff8e"/><path d="M565 357l5-1 3-6-5 1z" fill="#00ff4a"/><path d="M549 363l5 0 2-6-5 0z" fill="#00ff5f"/><path d="M403 367l5 4 2-6-5-4z" fill="#00ff71"/><path d="M532 369l5 0 2-6-4 0z" fill="#00ff70"/><path d="M443 376l5 3 1-6-4-3z" fill="#00ff8a"/><path d="M471 378l5 2 2-6-5-2z" fill="#00ff8e"/><path d="M516 372l4 1 3-6-5-1z" fill="#00ff7c"/><path d="M415 370l5 3 1-5-5-4z" fill="#00ff78"/><path d="M339 330l6 7 1-4-5-7z" fill="#00ff08"/><path d="M351 339l5 6 2-4-6-7z" fill="#00ff21"/><path d="M499 375l5 1 2-6-5-1z" fill="#00ff84"/><path d="M363 346l5 6 1-5-5-5z" fill="#00ff36"/><path d="M454 376l5 3 2-6-5-3z" fill="#00ff89"/><path d="M375 353l5 5 1-5-5-5z" fill="#00ff48"/><path d="M561 357l4 0 3-6-5 0z" fill="#00ff4a"/><path d="M426 372l5 3 2-6-5-3z" fill="#00ff7d"/><path d="M483 376l4 2 2-6-4-2z" fill="#00ff86"/><path d="M544 363l5 0 2-6-5 0z" fill="#00ff5d"/><path d="M386 358l5 5 2-5-5-5z" fill="#00ff56"/><path d="M527 368l5 1 3-6-5-1z" fill="#00ff6c"/><path d="M398 362l5 5 2-6-6-4z" fill="#00ff62"/><path d="M511 371l5 1 2-6-5-1z" fill="#00ff77"/><path d="M466 375l5 3 2-6-5-3z" fill="#00ff85"/><path d="M438 373l5 3 2-6-5-3z" fill="#00ff7f"/><path d="M494 373l5 2 2-6-5-2z" fill="#00ff7d"/><path d="M410 365l5 5 1-6-5-4z" fill="#00ff6a"/><path d="M556 357l5 0 2-6-5 0z" fill="#00ff49"/><path d="M334 324l5 6 2-4-6-7z" fill="#0fff00"/><path d="M346 333l5 6 1-5-5-6z" fill="#00ff0c"/><path d="M449 373l5 3 2-6-5-3z" fill="#00ff7e"/><path d="M539 363l5 0 2-6-4 0z" fill="#00ff5b"/><path d="M358 341l5 5 1-4-5-6z" fill="#00ff22"/><path d="M478 374l5 2 2-6-5-2z" fill="#00ff7e"/><path d="M421 368l5 4 2-6-5-4z" fill="#00ff70"/><path d="M369 347l6 6 1-5-5-6z" fill="#00ff35"/><path d="M523 367l4 1 3-6-5-1z" fill="#00ff69"/><path d="M381 353l5 5 2-5-5-5z" fill="#00ff45"/><path d="M506 370l5 1 2-6-5-1z" fill="#00ff72"/><path d="M461 373l5 2 2-6-5-2z" fill="#00ff7b"/><path d="M433 369l5 4 2-6-5-4z" fill="#00ff73"/><path d="M393 358l5 4 1-5-5-5z" fill="#00ff52"/><path d="M489 372l5 1 2-6-4-2z" fill="#00ff76"/><path d="M551 357l5 0 2-6-4 0z" fill="#00ff48"/><path d="M405 361l5 4 1-5-5-5z" fill="#00ff5b"/><path d="M535 363l4 0 3-6-5-1z" fill="#00ff58"/><path d="M445 370l4 3 2-6-5-3z" fill="#00ff73"/><path d="M473 372l5 2 2-6-5-3z" fill="#00ff76"/><path d="M518 366l5 1 2-6-5-1z" fill="#00ff64"/><path d="M341 326l5 7 1-5-5-7z" fill="#0aff00"/><path d="M352 334l6 7 1-5-5-7z" fill="#00ff0e"/><path d="M416 364l5 4 2-6-5-4z" fill="#00ff62"/><path d="M364 342l5 5 2-5-5-6z" fill="#00ff22"/><path d="M501 369l5 1 2-6-5-1z" fill="#00ff6b"/><path d="M376 348l5 5 2-5-6-6z" fill="#00ff33"/><path d="M456 370l5 3 2-6-5-3z" fill="#00ff71"/><path d="M546 357l5 0 3-6-5 0z" fill="#00ff46"/><path d="M428 366l5 3 2-6-5-3z" fill="#00ff66"/><path d="M485 370l4 2 3-7-5-2z" fill="#00ff6e"/><path d="M388 353l5 5 1-6-5-5z" fill="#00ff41"/><path d="M530 362l5 1 2-7-5 0z" fill="#00ff55"/><path d="M399 357l6 4 1-6-5-4z" fill="#00ff4c"/><path d="M513 365l5 1 2-6-5-1z" fill="#00ff5f"/><path d="M440 367l5 3 1-6-5-3z" fill="#00ff67"/><path d="M468 369l5 3 2-7-5-2z" fill="#00ff6d"/><path d="M335 319l6 7 1-5-6-7z" fill="#21ff00"/><path d="M496 367l5 2 2-6-5-2z" fill="#00ff65"/><path d="M411 360l5 4 2-6-5-4z" fill="#00ff53"/><path d="M347 328l5 6 2-5-6-6z" fill="#08ff00"/><path d="M359 336l5 6 2-6-6-6z" fill="#00ff0e"/><path d="M542 357l4 0 3-6-5 0z" fill="#00ff43"/><path d="M451 367l5 3 2-6-5-3z" fill="#00ff66"/><path d="M371 342l5 6 1-6-5-5z" fill="#00ff20"/><path d="M480 368l5 2 2-7-5-2z" fill="#00ff66"/><path d="M525 361l5 1 2-6-5-1z" fill="#00ff50"/><path d="M423 362l5 4 2-6-6-4z" fill="#00ff59"/><path d="M383 348l5 5 1-6-5-5z" fill="#00ff2f"/><path d="M508 364l5 1 2-6-5-1z" fill="#00ff59"/><path d="M463 367l5 2 2-6-5-3z" fill="#00ff63"/><path d="M394 352l5 5 2-6-5-5z" fill="#00ff3b"/><path d="M435 363l5 4 1-6-5-4z" fill="#00ff5b"/><path d="M492 365l4 2 2-6-4-2z" fill="#00ff5e"/><path d="M537 356l5 1 2-6-5-1z" fill="#00ff40"/><path d="M406 355l5 5 2-6-5-5z" fill="#00ff44"/><path d="M342 321l5 7 1-5-5-7z" fill="#1eff00"/><path d="M446 364l5 3 2-6-5-3z" fill="#00ff5b"/><path d="M520 360l5 1 2-6-5-1z" fill="#00ff4c"/><path d="M354 329l5 7 1-6-5-6z" fill="#07ff00"/><path d="M475 365l5 3 2-7-5-2z" fill="#00ff5e"/><path d="M366 336l5 6 1-5-5-6z" fill="#00ff0d"/><path d="M418 358l5 4 1-6-5-4z" fill="#00ff4b"/><path d="M503 363l5 1 2-6-4-2z" fill="#00ff53"/><path d="M377 342l6 6 1-6-5-6z" fill="#00ff1d"/><path d="M458 364l5 3 2-7-5-3z" fill="#00ff59"/><path d="M430 360l5 3 1-6-5-3z" fill="#00ff4e"/><path d="M389 347l5 5 2-6-5-5z" fill="#00ff2a"/><path d="M487 363l5 2 2-6-5-2z" fill="#00ff56"/><path d="M532 356l5 0 2-6-5-1z" fill="#00ff3c"/><path d="M401 351l5 4 2-6-6-4z" fill="#00ff35"/><path d="M515 359l5 1 2-6-4-2z" fill="#00ff46"/><path d="M441 361l5 3 2-6-5-4z" fill="#00ff4f"/><path d="M470 363l5 2 2-6-5-3z" fill="#00ff54"/><path d="M336 314l6 7 1-5-6-7z" fill="#35ff00"/><path d="M348 323l6 6 1-5-5-7z" fill="#1cff00"/><path d="M498 361l5 2 3-7-5-2z" fill="#00ff4c"/><path d="M413 354l5 4 1-6-5-4z" fill="#00ff3c"/><path d="M360 330l6 6 1-5-6-6z" fill="#07ff00"/><path d="M372 337l5 5 2-6-6-5z" fill="#00ff0b"/><path d="M453 361l5 3 2-7-5-3z" fill="#00ff4e"/><path d="M527 355l5 1 2-7-4-1z" fill="#00ff38"/><path d="M482 361l5 2 2-6-5-2z" fill="#00ff4e"/><path d="M424 356l6 4 1-6-5-4z" fill="#00ff41"/><path d="M384 342l5 5 2-6-6-5z" fill="#00ff19"/><path d="M510 358l5 1 3-7-5-1z" fill="#00ff41"/><path d="M396 346l5 5 1-6-5-5z" fill="#00ff24"/><path d="M465 360l5 3 2-7-5-2z" fill="#00ff4a"/><path d="M436 357l5 4 2-7-5-3z" fill="#00ff43"/><path d="M494 359l4 2 3-7-5-2z" fill="#00ff45"/><path d="M343 316l5 7 2-6-6-6z" fill="#32ff00"/><path d="M408 349l5 5 1-6-5-5z" fill="#00ff2d"/><path d="M355 324l5 6 1-5-5-7z" fill="#1cff00"/><path d="M522 354l5 1 3-7-5-1z" fill="#00ff33"/><path d="M448 358l5 3 2-7-5-3z" fill="#00ff43"/><path d="M477 359l5 2 2-6-5-3z" fill="#00ff45"/><path d="M367 331l5 6 1-6-5-6z" fill="#09ff00"/><path d="M419 352l5 4 2-6-5-5z" fill="#00ff33"/><path d="M506 356l4 2 3-7-5-2z" fill="#00ff3a"/><path d="M379 336l5 6 1-6-5-6z" fill="#00ff07"/><path d="M460 357l5 3 2-6-5-3z" fill="#00ff40"/><path d="M391 341l5 5 1-6-5-5z" fill="#00ff13"/><path d="M431 354l5 3 2-6-5-4z" fill="#00ff36"/><path d="M489 357l5 2 2-7-5-2z" fill="#00ff3d"/><path d="M402 345l6 4 1-6-5-5z" fill="#00ff1d"/><path d="M337 309l6 7 1-5-5-8z" fill="#49ff00"/><path d="M518 352l4 2 3-7-5-1z" fill="#00ff2e"/><path d="M350 317l5 7 1-6-5-6z" fill="#31ff00"/><path d="M443 354l5 4 2-7-5-3z" fill="#00ff37"/><path d="M472 356l5 3 2-7-5-2z" fill="#00ff3b"/><path d="M361 325l6 6 1-6-5-6z" fill="#1dff00"/><path d="M501 354l5 2 2-7-5-2z" fill="#00ff33"/><path d="M414 348l5 4 2-7-5-4z" fill="#00ff24"/><path d="M373 331l6 5 1-6-5-5z" fill="#0cff00"/><path d="M455 354l5 3 2-6-5-3z" fill="#00ff35"/><path d="M484 355l5 2 2-7-5-2z" fill="#00ff34"/><path d="M426 350l5 4 2-7-5-4z" fill="#00ff28"/><path d="M385 336l6 5 1-6-5-5z" fill="#00ff02"/><path d="M513 351l5 1 2-6-5-2z" fill="#00ff28"/><path d="M397 340l5 5 2-7-5-4z" fill="#00ff0d"/><path d="M467 354l5 2 2-6-5-3z" fill="#00ff31"/><path d="M438 351l5 3 2-6-5-4z" fill="#00ff2a"/><path d="M344 311l6 6 1-5-6-7z" fill="#47ff00"/><path d="M496 352l5 2 2-7-5-2z" fill="#00ff2c"/><path d="M356 318l5 7 2-6-6-7z" fill="#31ff00"/><path d="M409 343l5 5 2-7-5-4z" fill="#00ff15"/><path d="M368 325l5 6 2-6-6-6z" fill="#1fff00"/><path d="M450 351l5 3 2-6-5-4z" fill="#00ff29"/><path d="M479 352l5 3 2-7-5-3z" fill="#00ff2b"/><path d="M421 345l5 5 2-7-5-4z" fill="#00ff1a"/><path d="M380 330l5 6 2-6-6-6z" fill="#10ff00"/><path d="M508 349l5 2 2-7-5-2z" fill="#00ff21"/><path d="M392 335l5 5 2-6-6-6z" fill="#04ff00"/><path d="M462 351l5 3 2-7-5-3z" fill="#00ff27"/><path d="M433 347l5 4 2-7-5-4z" fill="#00ff1d"/><path d="M491 350l5 2 2-7-5-2z" fill="#00ff23"/><path d="M339 303l5 8 1-6-5-7z" fill="#5eff00"/><path d="M404 338l5 5 2-6-5-5z" fill="#00ff05"/><path d="M351 312l5 6 1-6-5-6z" fill="#47ff00"/><path d="M474 350l5 2 2-7-5-2z" fill="#00ff22"/><path d="M445 348l5 3 2-7-5-3z" fill="#00ff1d"/><path d="M363 319l5 6 1-6-5-7z" fill="#33ff00"/><path d="M503 347l5 2 2-7-5-2z" fill="#00ff1a"/><path d="M416 341l5 4 2-6-5-5z" fill="#00ff0b"/><path d="M375 325l5 5 1-6-5-6z" fill="#23ff00"/><path d="M457 348l5 3 2-7-5-3z" fill="#00ff1c"/><path d="M486 348l5 2 2-7-5-2z" fill="#00ff1b"/><path d="M387 330l5 5 1-7-5-5z" fill="#16ff00"/><path d="M428 343l5 4 2-7-5-4z" fill="#00ff0f"/><path d="M399 334l5 4 2-6-6-5z" fill="#0cff00"/><path d="M345 305l6 7 1-6-6-7z" fill="#5dff00"/><path d="M469 347l5 3 2-7-5-3z" fill="#00ff18"/><path d="M440 344l5 4 2-7-5-4z" fill="#00ff11"/><path d="M498 345l5 2 2-7-5-2z" fill="#00ff12"/><path d="M357 312l6 7 1-7-5-6z" fill="#48ff00"/><path d="M411 337l5 4 2-7-6-4z" fill="#04ff00"/><path d="M369 319l6 6 1-7-5-6z" fill="#36ff00"/><path d="M452 344l5 4 2-7-5-4z" fill="#00ff10"/><path d="M481 345l5 3 2-7-5-3z" fill="#00ff12"/><path d="M423 339l5 4 2-7-6-4z" fill="#00ff01"/><path d="M381 324l6 6 1-7-5-6z" fill="#28ff00"/><path d="M393 328l6 6 1-7-5-5z" fill="#1dff00"/><path d="M464 344l5 3 2-7-5-3z" fill="#00ff0d"/><path d="M340 298l5 7 1-6-5-8z" fill="#74ff00"/><path d="M435 340l5 4 2-7-6-4z" fill="#00ff03"/><path d="M493 343l5 2 2-7-5-2z" fill="#00ff0a"/><path d="M352 306l5 6 2-6-6-7z" fill="#5dff00"/><path d="M406 332l5 5 1-7-5-5z" fill="#14ff00"/><path d="M364 312l5 7 2-7-6-6z" fill="#4bff00"/><path d="M476 343l5 2 2-7-5-3z" fill="#00ff08"/><path d="M447 341l5 3 2-7-5-3z" fill="#00ff04"/><path d="M418 334l5 5 1-7-5-5z" fill="#0eff00"/><path d="M376 318l5 6 2-7-5-6z" fill="#3bff00"/><path d="M459 341l5 3 2-7-5-4z" fill="#00ff02"/><path d="M388 323l5 5 2-6-5-6z" fill="#2eff00"/><path d="M488 341l5 2 2-7-5-2z" fill="#00ff01"/><path d="M430 336l5 4 1-7-5-4z" fill="#0aff00"/><path d="M346 299l6 7 1-7-5-7z" fill="#73ff00"/><path d="M400 327l6 5 1-7-5-5z" fill="#24ff00"/><path d="M471 340l5 3 2-8-5-3z" fill="#03ff00"/><path d="M359 306l5 6 1-6-5-7z" fill="#5fff00"/><path d="M442 337l5 4 2-7-6-4z" fill="#09ff00"/><path d="M412 330l6 4 1-7-5-4z" fill="#1dff00"/><path d="M371 312l5 6 2-7-6-6z" fill="#4eff00"/><path d="M454 337l5 4 2-8-5-3z" fill="#0aff00"/><path d="M483 338l5 3 2-7-5-3z" fill="#09ff00"/><path d="M383 317l5 6 2-7-6-6z" fill="#41ff00"/><path d="M424 332l6 4 1-7-5-5z" fill="#19ff00"/><path d="M341 291l5 8 2-7-6-7z" fill="#8aff00"/><path d="M395 322l5 5 2-7-6-6z" fill="#36ff00"/><path d="M466 337l5 3 2-8-5-3z" fill="#0dff00"/><path d="M436 333l6 4 1-7-5-4z" fill="#17ff00"/><path d="M353 299l6 7 1-7-6-7z" fill="#75ff00"/><path d="M407 325l5 5 2-7-5-5z" fill="#2dff00"/><path d="M365 306l6 6 1-7-5-6z" fill="#62ff00"/><path d="M478 335l5 3 2-7-5-3z" fill="#12ff00"/><path d="M449 334l5 3 2-7-6-4z" fill="#17ff00"/><path d="M378 311l5 6 1-7-5-6z" fill="#53ff00"/><path d="M419 327l5 5 2-8-5-4z" fill="#28ff00"/><path d="M390 316l5 6 1-8-5-5z" fill="#47ff00"/><path d="M461 333l5 4 2-8-5-3z" fill="#19ff00"/><path d="M431 329l5 4 2-7-5-5z" fill="#25ff00"/><path d="M348 292l5 7 1-7-5-7z" fill="#8bff00"/><path d="M402 320l5 5 2-7-6-6z" fill="#3eff00"/><path d="M360 299l5 7 2-7-6-7z" fill="#77ff00"/><path d="M473 332l5 3 2-7-5-3z" fill="#1dff00"/><path d="M443 330l6 4 1-8-5-4z" fill="#24ff00"/><path d="M414 323l5 4 2-7-5-5z" fill="#37ff00"/><path d="M372 305l6 6 1-7-6-6z" fill="#67ff00"/><path d="M456 330l5 3 2-7-6-4z" fill="#25ff00"/><path d="M384 310l6 6 1-7-5-6z" fill="#5aff00"/><path d="M426 324l5 5 2-8-5-4z" fill="#33ff00"/><path d="M342 285l6 7 1-7-6-7z" fill="#a1ff00"/><path d="M396 314l6 6 1-8-5-5z" fill="#4fff00"/><path d="M468 329l5 3 2-7-5-3z" fill="#28ff00"/><path d="M354 292l6 7 1-7-5-7z" fill="#8dff00"/><path d="M438 326l5 4 2-8-5-4z" fill="#31ff00"/><path d="M409 318l5 5 2-8-6-5z" fill="#47ff00"/><path d="M367 299l5 6 1-7-5-6z" fill="#7bff00"/><path d="M450 326l6 4 1-8-5-4z" fill="#31ff00"/><path d="M379 304l5 6 2-7-6-6z" fill="#6dff00"/><path d="M421 320l5 4 2-7-5-5z" fill="#42ff00"/><path d="M391 309l5 5 2-7-5-6z" fill="#61ff00"/><path d="M463 326l5 3 2-7-5-4z" fill="#34ff00"/><path d="M349 285l5 7 2-7-6-7z" fill="#a3ff00"/><path d="M433 321l5 5 2-8-5-4z" fill="#3fff00"/><path d="M403 312l6 6 1-8-5-5z" fill="#58ff00"/><path d="M361 292l6 7 1-7-6-7z" fill="#90ff00"/><path d="M445 322l5 4 2-8-5-4z" fill="#3eff00"/><path d="M373 298l6 6 1-7-5-6z" fill="#80ff00"/><path d="M416 315l5 5 2-8-6-5z" fill="#52ff00"/><path d="M386 303l5 6 2-8-6-6z" fill="#73ff00"/><path d="M457 322l6 4 2-8-6-4z" fill="#40ff00"/><path d="M343 278l6 7 1-7-6-7z" fill="#b9ff00"/><path d="M428 317l5 4 2-7-5-5z" fill="#4eff00"/><path d="M398 307l5 5 2-7-5-6z" fill="#69ff00"/><path d="M356 285l5 7 1-7-5-7z" fill="#a5ff00"/><path d="M440 318l5 4 2-8-5-4z" fill="#4cff00"/><path d="M368 292l5 6 2-7-6-7z" fill="#94ff00"/><path d="M410 310l6 5 1-8-5-5z" fill="#62ff00"/><path d="M452 318l5 4 2-8-5-4z" fill="#4cff00"/><path d="M380 297l6 6 1-8-5-6z" fill="#86ff00"/><path d="M423 312l5 5 2-8-6-5z" fill="#5dff00"/><path d="M393 301l5 6 2-8-6-5z" fill="#7bff00"/><path d="M350 278l6 7 1-7-6-7z" fill="#bbff00"/><path d="M435 314l5 4 2-8-5-4z" fill="#5aff00"/><path d="M362 285l6 7 1-8-5-7z" fill="#a9ff00"/><path d="M405 305l5 5 2-8-6-5z" fill="#73ff00"/><path d="M447 314l5 4 2-8-5-4z" fill="#5aff00"/><path d="M375 291l5 6 2-8-6-6z" fill="#9aff00"/><path d="M417 307l6 5 1-8-5-5z" fill="#6dff00"/><path d="M387 295l6 6 1-7-5-6z" fill="#8eff00"/><path d="M344 271l6 7 1-7-5-8z" fill="#d2ff00"/><path d="M430 309l5 5 2-8-6-5z" fill="#69ff00"/><path d="M357 278l5 7 2-8-6-7z" fill="#bfff00"/><path d="M400 299l5 6 1-8-5-6z" fill="#84ff00"/><path d="M442 310l5 4 2-8-5-4z" fill="#67ff00"/><path d="M369 284l6 7 1-8-5-7z" fill="#aeff00"/><path d="M412 302l5 5 2-8-5-5z" fill="#7dff00"/><path d="M382 289l5 6 2-7-6-7z" fill="#a1ff00"/><path d="M424 304l6 5 1-8-5-5z" fill="#78ff00"/><path d="M351 271l6 7 1-8-5-7z" fill="#d5ff00"/><path d="M394 294l6 5 1-8-5-6z" fill="#96ff00"/><path d="M437 306l5 4 2-8-6-5z" fill="#76ff00"/><path d="M364 277l5 7 2-8-6-7z" fill="#c3ff00"/><path d="M406 297l6 5 2-8-6-5z" fill="#8eff00"/><path d="M376 283l6 6 1-8-5-6z" fill="#b4ff00"/><path d="M419 299l5 5 2-8-5-5z" fill="#88ff00"/><path d="M346 263l5 8 2-8-6-8z" fill="#ebff00"/><path d="M389 288l5 6 2-9-6-6z" fill="#a8ff00"/><path d="M431 301l6 5 1-9-5-4z" fill="#84ff00"/><path d="M358 270l6 7 1-8-6-7z" fill="#d9ff00"/><path d="M401 291l5 6 2-8-5-6z" fill="#9fff00"/><path d="M371 276l5 7 2-8-6-7z" fill="#c9ff00"/><path d="M414 294l5 5 2-8-6-5z" fill="#98ff00"/><path d="M383 281l6 7 1-9-5-6z" fill="#bcff00"/><path d="M426 296l5 5 2-8-5-5z" fill="#94ff00"/><path d="M353 263l5 7 1-8-5-7z" fill="#efff00"/><path d="M396 285l5 6 2-8-6-6z" fill="#b1ff00"/><path d="M365 269l6 7 1-8-6-7z" fill="#deff00"/><path d="M408 289l6 5 1-8-5-6z" fill="#a9ff00"/><path d="M378 275l5 6 2-8-6-6z" fill="#cfff00"/><path d="M421 291l5 5 2-8-6-5z" fill="#a4ff00"/><path d="M347 255l6 8 1-8-6-8z" fill="#fff900"/><path d="M390 279l6 6 1-8-5-6z" fill="#c4ff00"/><path d="M359 262l6 7 1-8-5-7z" fill="#f3ff00"/><path d="M403 283l5 6 2-9-6-6z" fill="#bbff00"/><path d="M372 268l6 7 1-8-6-7z" fill="#e4ff00"/><path d="M415 286l6 5 1-8-5-6z" fill="#b4ff00"/><path d="M385 273l5 6 2-8-6-6z" fill="#d7ff00"/><path d="M354 255l5 7 2-8-6-8z" fill="#fff500"/><path d="M397 277l6 6 1-9-5-6z" fill="#cdff00"/><path d="M366 261l6 7 1-8-5-7z" fill="#f9ff00"/><path d="M410 280l5 6 2-9-6-5z" fill="#c5ff00"/><path d="M379 267l6 6 1-8-5-7z" fill="#ebff00"/><path d="M348 247l6 8 1-9-6-7z" fill="#ffde00"/><path d="M392 271l5 6 2-9-6-6z" fill="#e0ff00"/><path d="M361 254l5 7 2-8-6-8z" fill="#fff000"/><path d="M404 274l6 6 1-8-5-6z" fill="#d7ff00"/><path d="M373 260l6 7 2-9-6-7z" fill="#ffff00"/><path d="M386 265l6 6 1-9-5-6z" fill="#f3ff00"/><path d="M355 246l6 8 1-9-6-7z" fill="#ffda00"/><path d="M399 268l5 6 2-8-6-6z" fill="#e9ff00"/><path d="M368 253l5 7 2-9-6-7z" fill="#ffea00"/><path d="M381 258l5 7 2-9-6-7z" fill="#fff700"/><path d="M349 239l6 7 1-8-5-8z" fill="#ffc300"/><path d="M393 262l6 6 1-8-5-7z" fill="#fcff00"/><path d="M362 245l6 8 1-9-6-8z" fill="#ffd400"/><path d="M375 251l6 7 1-9-6-7z" fill="#ffe300"/><path d="M388 256l5 6 2-9-6-6z" fill="#ffef00"/><path d="M356 238l6 7 1-9-5-7z" fill="#ffbe00"/><path d="M369 244l6 7 1-9-5-7z" fill="#ffce00"/><path d="M382 249l6 7 1-9-6-7z" fill="#ffdb00"/><path d="M351 230l5 8 2-9-6-8z" fill="#ffa800"/><path d="M363 236l6 8 2-9-6-8z" fill="#ffb800"/><path d="M376 242l6 7 1-9-5-7z" fill="#ffc700"/><path d="M358 229l5 7 2-9-6-8z" fill="#ffa200"/><path d="M371 235l5 7 2-9-6-8z" fill="#ffb200"/><path d="M352 221l6 8 1-10-6-8z" fill="#ff8c00"/><path d="M365 227l6 8 1-10-6-7z" fill="#ff9c00"/><path d="M359 219l6 8 1-9-6-8z" fill="#ff8600"/><path d="M353 211l6 8 1-9-6-8z" fill="#ff6f00"/></g>
<path d="M278.3 136.7L353.6 169.8M353.6 169.8L682 154.1M353.6 169.8L362.2 519.5" stroke="#808080" stroke-width="1" fill="none" shape-rendering="crispEdges"/>
<circle cx="463.5" cy="436.3" r="3.6" fill="#ff0000" shape-rendering="crispEdges"/>
<g font-family="Liberation Sans" font-size="11" fill="#6c6c6c"><text x="259.2" y="170.5" text-anchor="middle">-81.4</text><text x="261.4" y="226.0" text-anchor="middle">-81.9</text><text x="264.7" y="281.9" text-anchor="middle">-82.4</text><text x="266.5" y="335.9" text-anchor="middle">-82.9</text><text x="268.5" y="387.9" text-anchor="middle">-83.4</text><text x="698.6" y="195.1" text-anchor="middle">-81.4</text><text x="694.5" y="260.5" text-anchor="middle">-81.9</text><text x="691.8" y="326.2" text-anchor="middle">-82.4</text><text x="689.0" y="387.9" text-anchor="middle">-82.9</text><text x="685.6" y="448.8" text-anchor="middle">-83.4</text><text x="271.9" y="430.0" text-anchor="middle">-0.444</text><text x="284.0" y="448.8" text-anchor="middle">-0.364</text><text x="297.2" y="469.7" text-anchor="middle">-0.284</text><text x="312.4" y="493.9" text-anchor="middle">-0.204</text><text x="329.5" y="519.2" text-anchor="middle">-0.124</text><text x="414.3" y="530.0" text-anchor="middle">-0.487</text><text x="479.5" y="519.2" text-anchor="middle">-0.407</text><text x="542.4" y="509.4" text-anchor="middle">-0.327</text><text x="601.4" y="499.5" text-anchor="middle">-0.247</text><text x="659.5" y="489.4" text-anchor="middle">-0.167</text><text x="260.3" y="477.0" text-anchor="middle">th(1)</text><text x="551.2" y="532.0" text-anchor="middle">bth(1)</text></g>
</svg>
</body></html>
